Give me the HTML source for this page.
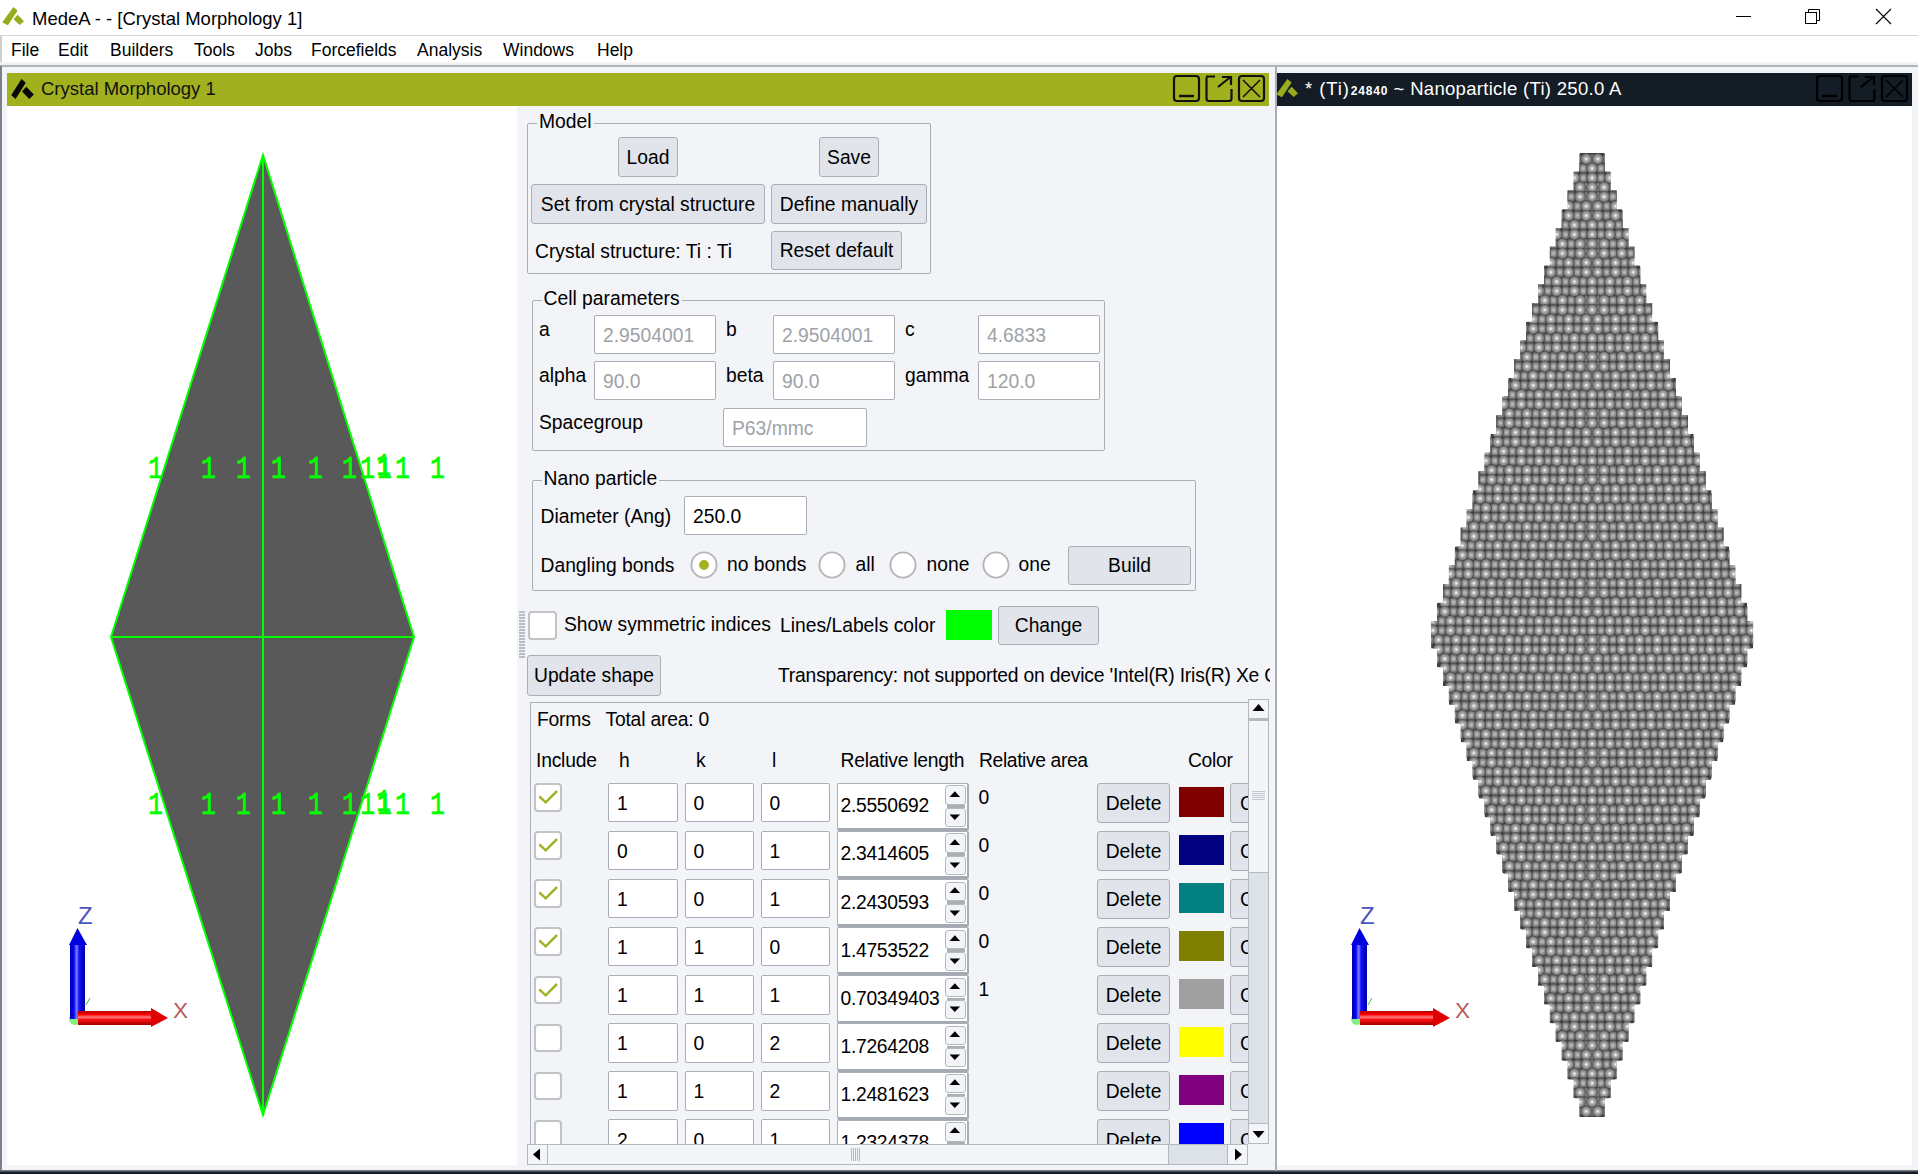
<!DOCTYPE html>
<html><head><meta charset="utf-8"><title>MedeA</title>
<style>
*{box-sizing:border-box;margin:0;padding:0}
html,body{width:1918px;height:1174px;overflow:hidden;background:#fff;font-family:"Liberation Sans", sans-serif;color:#000}
.ab{position:absolute}
.t{position:absolute;white-space:nowrap;line-height:1}
.btn{position:absolute;background:#e1e4ea;border:1px solid #a9aeb6;border-radius:3px}
.ent{position:absolute;background:#fff;border:1px solid #a9aeb6;border-radius:2px}
.fs{position:absolute;border:1px solid #a9aeb6;border-radius:2px}
.lbl{position:absolute;white-space:nowrap;line-height:1;font-size:19px}
</style></head><body>

<div class="ab" style="left:0;top:0;width:1918px;height:35px;background:#fff"></div>
<svg class="ab" style="left:0;top:0" width="30" height="30"><polygon points="3.3,22.1 7.7,24.4 16.8,10.7 13.5,8" fill="#98ac1e" stroke="#98ac1e" stroke-width="1.3"/><polygon points="14.4,19.3 17.7,15.6 23,21.3 19.7,24.2" fill="#98ac1e" stroke="#98ac1e" stroke-width="1.3"/></svg>
<div class="t" style="left:32px;top:10px;font-size:18.5px">MedeA - - [Crystal Morphology 1]</div>
<div class="ab" style="left:1736px;top:16px;width:15px;height:1px;background:#000"></div>
<svg class="ab" style="left:1800px;top:4px" width="24" height="24" viewBox="0 0 24 24"><rect x="5.5" y="8.5" width="11" height="11" fill="none" stroke="#000" stroke-width="1"/><path d="M8.5 8.5 V5.5 H19.5 V16.5 H16.5" fill="none" stroke="#000" stroke-width="1"/></svg>
<svg class="ab" style="left:1870px;top:4px" width="26" height="26" viewBox="0 0 26 26"><path d="M6 5 L21 20 M21 5 L6 20" stroke="#000" stroke-width="1.1"/></svg>
<div class="ab" style="left:0;top:35px;width:1918px;height:1px;background:#d4d4d4"></div>
<div class="t" style="left:11px;top:41.7px;font-size:17.5px">File</div>
<div class="t" style="left:58px;top:41.7px;font-size:17.5px">Edit</div>
<div class="t" style="left:110px;top:41.7px;font-size:17.5px">Builders</div>
<div class="t" style="left:194px;top:41.7px;font-size:17.5px">Tools</div>
<div class="t" style="left:255px;top:41.7px;font-size:17.5px">Jobs</div>
<div class="t" style="left:311px;top:41.7px;font-size:17.5px">Forcefields</div>
<div class="t" style="left:417px;top:41.7px;font-size:17.5px">Analysis</div>
<div class="t" style="left:503px;top:41.7px;font-size:17.5px">Windows</div>
<div class="t" style="left:597px;top:41.7px;font-size:17.5px">Help</div>
<div class="ab" style="left:0;top:36px;width:2px;height:30px;background:#cfcfcf"></div>
<div class="ab" style="left:0;top:61.5px;width:1918px;height:3.5px;background:linear-gradient(#f8f8f8,#ececee)"></div>
<div class="ab" style="left:0;top:65px;width:1918px;height:2px;background:#afb3ba"></div>
<div class="ab" style="left:0;top:67px;width:1918px;height:1107px;background:#f2f4f8"></div>
<div class="ab" style="left:0;top:66px;width:2px;height:1105px;background:#7c8189"></div>
<div class="ab" style="left:0;top:1170.3px;width:1918px;height:3.7px;background:linear-gradient(#8a9098,#141b23 65%)"></div>
<div class="ab" style="left:7px;top:73px;width:1262px;height:33px;background:#a1b01f"></div>
<svg class="ab" style="left:0;top:70px" width="40" height="35" viewBox="0 70 40 35"><polygon points="12.1,95 15.4,98 25,82.8 21.6,79.9" fill="#060606" stroke="#060606" stroke-width="1.2"/><polygon points="22.9,91.4 26.3,87.6 33,94.5 29.3,98.1" fill="#060606" stroke="#060606" stroke-width="1.2"/></svg>
<div class="t" style="left:41px;top:80px;font-size:18.5px;color:#111">Crystal Morphology 1</div>
<svg class="ab" style="left:1172px;top:74px" width="96" height="30" viewBox="0 0 96 30"><rect x="2" y="2" width="25" height="25" rx="3" fill="none" stroke="#111" stroke-width="2.2"/><path d="M7 22 H22" stroke="#111" stroke-width="2.5"/><path d="M43 2.5 H34 Q34.5 2.5 34.5 5 V24.5 Q34.5 27 37 27 H57 Q59.5 27 59.5 24.5 V15" fill="none" stroke="#111" stroke-width="2.2"/><path d="M46 13 L58.5 3 M50 3 H59 V11" fill="none" stroke="#111" stroke-width="2.2"/><rect x="67" y="2" width="25" height="25" rx="3" fill="none" stroke="#111" stroke-width="2.2"/><path d="M71 6 L88 23 M88 6 L71 23" stroke="#111" stroke-width="1.6"/></svg>
<div class="ab" style="left:7px;top:106px;width:510px;height:1059px;background:#fff"></div>
<svg class="ab" style="left:7px;top:105px" width="510" height="1059" viewBox="7 105 510 1059">
<text x="148" y="478" font-family="Liberation Mono" font-size="32" fill="#00ff00" stroke="#00ff00" stroke-width="0.7" transform="translate(148 0) scale(0.78 1) translate(-148 0)">1</text>
<text x="148" y="814" font-family="Liberation Mono" font-size="32" fill="#00ff00" stroke="#00ff00" stroke-width="0.7" transform="translate(148 0) scale(0.78 1) translate(-148 0)">1</text>
<polygon points="263,155 414,637 263,1115 111,637" fill="#595959" stroke="#00ff00" stroke-width="2"/>
<path d="M263 155 V1115 M111 637 H414" stroke="#00ff00" stroke-width="2"/>
<text x="201" y="478" font-family="Liberation Mono" font-size="32" fill="#00ff00" stroke="#00ff00" stroke-width="0.7" transform="translate(201 0) scale(0.78 1) translate(-201 0)">1</text><text x="236" y="478" font-family="Liberation Mono" font-size="32" fill="#00ff00" stroke="#00ff00" stroke-width="0.7" transform="translate(236 0) scale(0.78 1) translate(-236 0)">1</text><text x="271" y="478" font-family="Liberation Mono" font-size="32" fill="#00ff00" stroke="#00ff00" stroke-width="0.7" transform="translate(271 0) scale(0.78 1) translate(-271 0)">1</text><text x="308" y="478" font-family="Liberation Mono" font-size="32" fill="#00ff00" stroke="#00ff00" stroke-width="0.7" transform="translate(308 0) scale(0.78 1) translate(-308 0)">1</text><text x="342" y="478" font-family="Liberation Mono" font-size="32" fill="#00ff00" stroke="#00ff00" stroke-width="0.7" transform="translate(342 0) scale(0.78 1) translate(-342 0)">1</text><text x="360" y="478" font-family="Liberation Mono" font-size="32" fill="#00ff00" stroke="#00ff00" stroke-width="0.7" transform="translate(360 0) scale(0.78 1) translate(-360 0)">1</text><text x="377" y="478" font-family="Liberation Mono" font-size="32" fill="#00ff00" stroke="#00ff00" stroke-width="0.7" transform="translate(377 0) scale(0.78 1) translate(-377 0)">1</text><text x="395" y="478" font-family="Liberation Mono" font-size="32" fill="#00ff00" stroke="#00ff00" stroke-width="0.7" transform="translate(395 0) scale(0.78 1) translate(-395 0)">1</text><text x="430" y="478" font-family="Liberation Mono" font-size="32" fill="#00ff00" stroke="#00ff00" stroke-width="0.7" transform="translate(430 0) scale(0.78 1) translate(-430 0)">1</text>
<text x="201" y="814" font-family="Liberation Mono" font-size="32" fill="#00ff00" stroke="#00ff00" stroke-width="0.7" transform="translate(201 0) scale(0.78 1) translate(-201 0)">1</text><text x="236" y="814" font-family="Liberation Mono" font-size="32" fill="#00ff00" stroke="#00ff00" stroke-width="0.7" transform="translate(236 0) scale(0.78 1) translate(-236 0)">1</text><text x="271" y="814" font-family="Liberation Mono" font-size="32" fill="#00ff00" stroke="#00ff00" stroke-width="0.7" transform="translate(271 0) scale(0.78 1) translate(-271 0)">1</text><text x="308" y="814" font-family="Liberation Mono" font-size="32" fill="#00ff00" stroke="#00ff00" stroke-width="0.7" transform="translate(308 0) scale(0.78 1) translate(-308 0)">1</text><text x="342" y="814" font-family="Liberation Mono" font-size="32" fill="#00ff00" stroke="#00ff00" stroke-width="0.7" transform="translate(342 0) scale(0.78 1) translate(-342 0)">1</text><text x="360" y="814" font-family="Liberation Mono" font-size="32" fill="#00ff00" stroke="#00ff00" stroke-width="0.7" transform="translate(360 0) scale(0.78 1) translate(-360 0)">1</text><text x="377" y="814" font-family="Liberation Mono" font-size="32" fill="#00ff00" stroke="#00ff00" stroke-width="0.7" transform="translate(377 0) scale(0.78 1) translate(-377 0)">1</text><text x="395" y="814" font-family="Liberation Mono" font-size="32" fill="#00ff00" stroke="#00ff00" stroke-width="0.7" transform="translate(395 0) scale(0.78 1) translate(-395 0)">1</text><text x="430" y="814" font-family="Liberation Mono" font-size="32" fill="#00ff00" stroke="#00ff00" stroke-width="0.7" transform="translate(430 0) scale(0.78 1) translate(-430 0)">1</text>
<text x="376" y="475" font-family="Liberation Mono" font-size="32" fill="#00ff00" stroke="#00ff00" stroke-width="0.7" transform="translate(376 0) scale(0.78 1) translate(-376 0)">1</text>
<text x="376" y="811" font-family="Liberation Mono" font-size="32" fill="#00ff00" stroke="#00ff00" stroke-width="0.7" transform="translate(376 0) scale(0.78 1) translate(-376 0)">1</text>
</svg>
<svg class="ab" style="left:40px;top:895px" width="160" height="140" viewBox="40 895 160 140"><defs><linearGradient id="gb0" x1="0" x2="1"><stop offset="0" stop-color="#0000b0"/><stop offset="0.25" stop-color="#0000ff"/><stop offset="0.45" stop-color="#8080ff"/><stop offset="0.6" stop-color="#1010ff"/><stop offset="1" stop-color="#0000a0"/></linearGradient><linearGradient id="gr0" x1="0" x2="0" y1="0" y2="1"><stop offset="0" stop-color="#b00000"/><stop offset="0.25" stop-color="#ff0000"/><stop offset="0.45" stop-color="#ff8080"/><stop offset="0.6" stop-color="#ff1010"/><stop offset="1" stop-color="#a00000"/></linearGradient></defs><circle cx="75" cy="1019" r="6" fill="#80f080"/><path d="M86 1005 L90 998" stroke="#40c040" stroke-width="1"/><rect x="70" y="944" width="15" height="75" fill="url(#gb0)"/><polygon points="77.5,928 69,945 87,945" fill="#0000e0"/><rect x="78" y="1011" width="74" height="14" fill="url(#gr0)"/><polygon points="151,1008 168,1018 151,1027" fill="#e00000"/><text x="78" y="924" font-family="Liberation Sans" font-size="24" fill="#4a55c0">Z</text><text x="173" y="1018" font-family="Liberation Sans" font-size="22.5" fill="#b85a5a">X</text></svg>
<div class="ab" style="left:517px;top:106px;width:758px;height:1058px;background:#f2f4f8"></div>
<div class="ab" style="left:1275px;top:66px;width:2px;height:1105px;background:#a9aeb6"></div>
<div class="fs" style="left:527px;top:123px;width:404px;height:151px"></div>
<div class="t" style="left:537px;top:112.2px;font-size:19.3px;background:#f2f4f8;padding:0 2px 0 2px">Model</div>
<div class="btn" style="left:618px;top:137px;width:60px;height:40px"></div>
<div class="t" style="left:618px;width:60px;text-align:center;top:147.7px;font-size:19.3px">Load</div>
<div class="btn" style="left:819px;top:137px;width:60px;height:40px"></div>
<div class="t" style="left:819px;width:60px;text-align:center;top:147.7px;font-size:19.3px">Save</div>
<div class="btn" style="left:531px;top:184px;width:234px;height:40px"></div>
<div class="t" style="left:531px;width:234px;text-align:center;top:194.7px;font-size:19.3px">Set from crystal structure</div>
<div class="btn" style="left:771px;top:184px;width:156px;height:40px"></div>
<div class="t" style="left:771px;width:156px;text-align:center;top:194.7px;font-size:19.3px">Define manually</div>
<div class="t" style="left:535px;top:241.7px;font-size:19.3px;color:#000;">Crystal structure: Ti : Ti</div>
<div class="btn" style="left:771px;top:231px;width:131px;height:39px"></div>
<div class="t" style="left:771px;width:131px;text-align:center;top:241.2px;font-size:19.3px">Reset default</div>
<div class="fs" style="left:532px;top:300px;width:573px;height:151px"></div>
<div class="t" style="left:541.5px;top:289.2px;font-size:19.3px;background:#f2f4f8;padding:0 2px 0 2px">Cell parameters</div>
<div class="t" style="left:539px;top:319.7px;font-size:19.3px;color:#000;">a</div>
<div class="t" style="left:726px;top:319.7px;font-size:19.3px;color:#000;">b</div>
<div class="t" style="left:905px;top:319.7px;font-size:19.3px;color:#000;">c</div>
<div class="ent" style="left:594px;top:315px;width:122px;height:39px"></div>
<div class="t" style="left:603px;top:326.2px;font-size:19.3px;color:#9ea2a8;">2.9504001</div>
<div class="ent" style="left:773px;top:315px;width:122px;height:39px"></div>
<div class="t" style="left:782px;top:326.2px;font-size:19.3px;color:#9ea2a8;">2.9504001</div>
<div class="ent" style="left:978px;top:315px;width:122px;height:39px"></div>
<div class="t" style="left:987px;top:326.2px;font-size:19.3px;color:#9ea2a8;">4.6833</div>
<div class="t" style="left:539px;top:365.7px;font-size:19.3px;color:#000;">alpha</div>
<div class="t" style="left:726px;top:365.7px;font-size:19.3px;color:#000;">beta</div>
<div class="t" style="left:905px;top:365.7px;font-size:19.3px;color:#000;">gamma</div>
<div class="ent" style="left:594px;top:361px;width:122px;height:39px"></div>
<div class="t" style="left:603px;top:372.2px;font-size:19.3px;color:#9ea2a8;">90.0</div>
<div class="ent" style="left:773px;top:361px;width:122px;height:39px"></div>
<div class="t" style="left:782px;top:372.2px;font-size:19.3px;color:#9ea2a8;">90.0</div>
<div class="ent" style="left:978px;top:361px;width:122px;height:39px"></div>
<div class="t" style="left:987px;top:372.2px;font-size:19.3px;color:#9ea2a8;">120.0</div>
<div class="t" style="left:539px;top:412.7px;font-size:19.3px;color:#000;">Spacegroup</div>
<div class="ent" style="left:723px;top:408px;width:144px;height:39px"></div>
<div class="t" style="left:732px;top:419.2px;font-size:19.3px;color:#9ea2a8;">P63/mmc</div>
<div class="fs" style="left:532px;top:480px;width:664px;height:111px"></div>
<div class="t" style="left:541.5px;top:469.2px;font-size:19.3px;background:#f2f4f8;padding:0 2px 0 2px">Nano particle</div>
<div class="t" style="left:540.5px;top:506.7px;font-size:19.3px;color:#000;">Diameter (Ang)</div>
<div class="ent" style="left:684px;top:496px;width:123px;height:39px"></div>
<div class="t" style="left:693px;top:507.2px;font-size:19.3px;color:#000;">250.0</div>
<div class="t" style="left:540.5px;top:555.7px;font-size:19.3px;color:#000;">Dangling bonds</div>
<svg class="ab" style="left:689.5px;top:550.5px" width="28" height="28" viewBox="0 0 28 28"><circle cx="14" cy="14" r="12.6" fill="#fff" stroke="#b4b5b8" stroke-width="1.9"/><circle cx="14" cy="14" r="4.9" fill="#a3b022"/></svg>
<div class="t" style="left:727px;top:554.7px;font-size:19.3px;color:#000;">no bonds</div>
<svg class="ab" style="left:818px;top:550.5px" width="28" height="28" viewBox="0 0 28 28"><circle cx="14" cy="14" r="12.6" fill="#fff" stroke="#b4b5b8" stroke-width="1.9"/></svg>
<div class="t" style="left:855.5px;top:554.7px;font-size:19.3px;color:#000;">all</div>
<svg class="ab" style="left:888.5px;top:550.5px" width="28" height="28" viewBox="0 0 28 28"><circle cx="14" cy="14" r="12.6" fill="#fff" stroke="#b4b5b8" stroke-width="1.9"/></svg>
<div class="t" style="left:926.5px;top:554.7px;font-size:19.3px;color:#000;">none</div>
<svg class="ab" style="left:981.5px;top:550.5px" width="28" height="28" viewBox="0 0 28 28"><circle cx="14" cy="14" r="12.6" fill="#fff" stroke="#b4b5b8" stroke-width="1.9"/></svg>
<div class="t" style="left:1018.5px;top:554.7px;font-size:19.3px;color:#000;">one</div>
<div class="btn" style="left:1068px;top:546px;width:123px;height:39px"></div>
<div class="t" style="left:1068px;width:123px;text-align:center;top:556.2px;font-size:19.3px">Build</div>
<div class="ab" style="left:519px;top:611px;width:6px;height:47px;background:repeating-linear-gradient(#b9bdc4 0 2px, #f1f3f7 2px 3px)"></div>
<div class="ab" style="left:528px;top:611px;width:28.5px;height:28.5px;background:#fff;border:2px solid #c2c3c6;border-radius:4px"></div>
<div class="t" style="left:564px;top:614.7px;font-size:19.3px;color:#000;">Show symmetric indices</div>
<div class="t" style="left:780px;top:616.4px;font-size:19.3px;color:#000;">Lines/Labels color</div>
<div class="ab" style="left:946px;top:610px;width:46px;height:30px;background:#00ff00"></div>
<div class="btn" style="left:998px;top:606px;width:101px;height:39px"></div>
<div class="t" style="left:998px;width:101px;text-align:center;top:616.2px;font-size:19.3px">Change</div>
<div class="btn" style="left:527px;top:655px;width:134px;height:41px"></div>
<div class="t" style="left:527px;width:134px;text-align:center;top:666.2px;font-size:19.3px">Update shape</div>
<div class="ab" style="left:700px;top:650px;width:570px;height:50px;overflow:hidden">
<div class="t" style="left:78px;top:15.7px;font-size:19.3px;letter-spacing:-0.2px">Transparency: not supported on device 'Intel(R) Iris(R) Xe Graphics'</div>
</div>
<div class="ab" style="left:529.5px;top:702px;width:1.7px;height:442px;background:#aab0ba"></div>
<div class="ab" style="left:530px;top:702px;width:718px;height:1px;background:#a9aeb6"></div>
<div class="ab" style="left:530px;top:702px;width:718px;height:442px;overflow:hidden">
<div class="t" style="left:7.0px;top:8.2px;font-size:19.3px;color:#000;letter-spacing:-0.2px">Forms</div>
<div class="t" style="left:75.5px;top:8.2px;font-size:19.3px;color:#000;letter-spacing:-0.2px">Total area: 0</div>
<div class="t" style="left:6.0px;top:48.5px;font-size:19.3px;color:#000;letter-spacing:-0.2px">Include</div>
<div class="t" style="left:89.0px;top:48.5px;font-size:19.3px;color:#000;letter-spacing:0px">h</div>
<div class="t" style="left:166.0px;top:48.5px;font-size:19.3px;color:#000;letter-spacing:0px">k</div>
<div class="t" style="left:242.0px;top:48.5px;font-size:19.3px;color:#000;letter-spacing:0px">l</div>
<div class="t" style="left:310.5px;top:48.5px;font-size:19.3px;color:#000;letter-spacing:-0.25px">Relative length</div>
<div class="t" style="left:449.0px;top:48.5px;font-size:19.3px;color:#000;letter-spacing:-0.38px">Relative area</div>
<div class="t" style="left:658.0px;top:48.5px;font-size:19.3px;color:#000;letter-spacing:-0.3px">Color</div>
<div class="ab" style="left:3.5px;top:81.1px;width:28.5px;height:28.5px;background:#fff;border:2px solid #c2c3c6;border-radius:4px"></div>
<svg class="ab" style="left:3.5px;top:81.1px" width="28" height="28" viewBox="0 0 28 28"><path d="M5.3 13.3 L11.7 19.3 L23 8" fill="none" stroke="#a2b126" stroke-width="2.5"/></svg>
<div class="ab" style="left:78.0px;top:80.6px;width:69.5px;height:39.5px;background:#fff;border:1px solid #a9aeb6;border-radius:2px"></div>
<div class="t" style="left:87.0px;top:91.8px;font-size:19.3px;color:#000;letter-spacing:0px">1</div>
<div class="ab" style="left:154.5px;top:80.6px;width:69.5px;height:39.5px;background:#fff;border:1px solid #a9aeb6;border-radius:2px"></div>
<div class="t" style="left:163.5px;top:91.8px;font-size:19.3px;color:#000;letter-spacing:0px">0</div>
<div class="ab" style="left:230.5px;top:80.6px;width:69.5px;height:39.5px;background:#fff;border:1px solid #a9aeb6;border-radius:2px"></div>
<div class="t" style="left:239.5px;top:91.8px;font-size:19.3px;color:#000;letter-spacing:0px">0</div>
<div class="ab" style="left:307.0px;top:80.9px;width:132.0px;height:48.3px;background:#fff;border:1px solid #a9aeb6;border-right:2px solid #a9aeb6;border-bottom:3px solid #a4a9b2;border-radius:2px"></div>
<div class="t" style="left:310.5px;top:94.3px;font-size:19.3px;color:#000;letter-spacing:-0.3px">2.5550692</div>
<div class="ab" style="left:415.3px;top:83.3px;width:20.5px;height:19.6px;background:#f2f4f8;border:1.6px solid #b4b9c0;border-radius:3px"></div>
<div class="ab" style="left:415.3px;top:105.6px;width:20.5px;height:19.0px;background:#f2f4f8;border:1.6px solid #b4b9c0;border-radius:3px"></div>
<div class="ab" style="left:416.5px;top:103.1px;width:18.0px;height:2.6px;background:#abb0b8"></div>
<svg class="ab" style="left:415.0px;top:80.6px" width="21" height="47" viewBox="0 0 21 47"><polygon points="9.8,8.3 4.5,14 15.1,14" fill="#000"/><polygon points="4.5,31.4 15.1,31.4 9.8,37" fill="#000"/></svg>
<div class="t" style="left:448.5px;top:85.8px;font-size:19.3px;color:#000;letter-spacing:0px">0</div>
<div class="ab" style="left:567.0px;top:80.6px;width:73.0px;height:40.0px;background:#e1e4ea;border:1px solid #a9aeb6;border-radius:3px"></div>
<div class="t" style="left:567.0px;width:73.0px;text-align:center;top:91.8px;font-size:19.3px">Delete</div>
<div class="ab" style="left:649.0px;top:84.6px;width:45.0px;height:30.0px;background:#800000"></div>
<div class="ab" style="left:700.0px;top:80.6px;width:60.0px;height:40.0px;background:#e1e4ea;border:1px solid #a9aeb6;border-radius:3px"></div>
<div class="t" style="left:710.0px;top:91.8px;font-size:19.3px;color:#000;letter-spacing:0px">Change</div>
<div class="ab" style="left:3.5px;top:129.2px;width:28.5px;height:28.5px;background:#fff;border:2px solid #c2c3c6;border-radius:4px"></div>
<svg class="ab" style="left:3.5px;top:129.2px" width="28" height="28" viewBox="0 0 28 28"><path d="M5.3 13.3 L11.7 19.3 L23 8" fill="none" stroke="#a2b126" stroke-width="2.5"/></svg>
<div class="ab" style="left:78.0px;top:128.7px;width:69.5px;height:39.5px;background:#fff;border:1px solid #a9aeb6;border-radius:2px"></div>
<div class="t" style="left:87.0px;top:139.9px;font-size:19.3px;color:#000;letter-spacing:0px">0</div>
<div class="ab" style="left:154.5px;top:128.7px;width:69.5px;height:39.5px;background:#fff;border:1px solid #a9aeb6;border-radius:2px"></div>
<div class="t" style="left:163.5px;top:139.9px;font-size:19.3px;color:#000;letter-spacing:0px">0</div>
<div class="ab" style="left:230.5px;top:128.7px;width:69.5px;height:39.5px;background:#fff;border:1px solid #a9aeb6;border-radius:2px"></div>
<div class="t" style="left:239.5px;top:139.9px;font-size:19.3px;color:#000;letter-spacing:0px">1</div>
<div class="ab" style="left:307.0px;top:129.0px;width:132.0px;height:48.3px;background:#fff;border:1px solid #a9aeb6;border-right:2px solid #a9aeb6;border-bottom:3px solid #a4a9b2;border-radius:2px"></div>
<div class="t" style="left:310.5px;top:142.4px;font-size:19.3px;color:#000;letter-spacing:-0.3px">2.3414605</div>
<div class="ab" style="left:415.3px;top:131.4px;width:20.5px;height:19.6px;background:#f2f4f8;border:1.6px solid #b4b9c0;border-radius:3px"></div>
<div class="ab" style="left:415.3px;top:153.7px;width:20.5px;height:19.0px;background:#f2f4f8;border:1.6px solid #b4b9c0;border-radius:3px"></div>
<div class="ab" style="left:416.5px;top:151.2px;width:18.0px;height:2.6px;background:#abb0b8"></div>
<svg class="ab" style="left:415.0px;top:128.7px" width="21" height="47" viewBox="0 0 21 47"><polygon points="9.8,8.3 4.5,14 15.1,14" fill="#000"/><polygon points="4.5,31.4 15.1,31.4 9.8,37" fill="#000"/></svg>
<div class="t" style="left:448.5px;top:133.9px;font-size:19.3px;color:#000;letter-spacing:0px">0</div>
<div class="ab" style="left:567.0px;top:128.7px;width:73.0px;height:40.0px;background:#e1e4ea;border:1px solid #a9aeb6;border-radius:3px"></div>
<div class="t" style="left:567.0px;width:73.0px;text-align:center;top:139.9px;font-size:19.3px">Delete</div>
<div class="ab" style="left:649.0px;top:132.7px;width:45.0px;height:30.0px;background:#000080"></div>
<div class="ab" style="left:700.0px;top:128.7px;width:60.0px;height:40.0px;background:#e1e4ea;border:1px solid #a9aeb6;border-radius:3px"></div>
<div class="t" style="left:710.0px;top:139.9px;font-size:19.3px;color:#000;letter-spacing:0px">Change</div>
<div class="ab" style="left:3.5px;top:177.3px;width:28.5px;height:28.5px;background:#fff;border:2px solid #c2c3c6;border-radius:4px"></div>
<svg class="ab" style="left:3.5px;top:177.3px" width="28" height="28" viewBox="0 0 28 28"><path d="M5.3 13.3 L11.7 19.3 L23 8" fill="none" stroke="#a2b126" stroke-width="2.5"/></svg>
<div class="ab" style="left:78.0px;top:176.8px;width:69.5px;height:39.5px;background:#fff;border:1px solid #a9aeb6;border-radius:2px"></div>
<div class="t" style="left:87.0px;top:188.0px;font-size:19.3px;color:#000;letter-spacing:0px">1</div>
<div class="ab" style="left:154.5px;top:176.8px;width:69.5px;height:39.5px;background:#fff;border:1px solid #a9aeb6;border-radius:2px"></div>
<div class="t" style="left:163.5px;top:188.0px;font-size:19.3px;color:#000;letter-spacing:0px">0</div>
<div class="ab" style="left:230.5px;top:176.8px;width:69.5px;height:39.5px;background:#fff;border:1px solid #a9aeb6;border-radius:2px"></div>
<div class="t" style="left:239.5px;top:188.0px;font-size:19.3px;color:#000;letter-spacing:0px">1</div>
<div class="ab" style="left:307.0px;top:177.1px;width:132.0px;height:48.3px;background:#fff;border:1px solid #a9aeb6;border-right:2px solid #a9aeb6;border-bottom:3px solid #a4a9b2;border-radius:2px"></div>
<div class="t" style="left:310.5px;top:190.5px;font-size:19.3px;color:#000;letter-spacing:-0.3px">2.2430593</div>
<div class="ab" style="left:415.3px;top:179.5px;width:20.5px;height:19.6px;background:#f2f4f8;border:1.6px solid #b4b9c0;border-radius:3px"></div>
<div class="ab" style="left:415.3px;top:201.8px;width:20.5px;height:19.0px;background:#f2f4f8;border:1.6px solid #b4b9c0;border-radius:3px"></div>
<div class="ab" style="left:416.5px;top:199.3px;width:18.0px;height:2.6px;background:#abb0b8"></div>
<svg class="ab" style="left:415.0px;top:176.8px" width="21" height="47" viewBox="0 0 21 47"><polygon points="9.8,8.3 4.5,14 15.1,14" fill="#000"/><polygon points="4.5,31.4 15.1,31.4 9.8,37" fill="#000"/></svg>
<div class="t" style="left:448.5px;top:182.0px;font-size:19.3px;color:#000;letter-spacing:0px">0</div>
<div class="ab" style="left:567.0px;top:176.8px;width:73.0px;height:40.0px;background:#e1e4ea;border:1px solid #a9aeb6;border-radius:3px"></div>
<div class="t" style="left:567.0px;width:73.0px;text-align:center;top:188.0px;font-size:19.3px">Delete</div>
<div class="ab" style="left:649.0px;top:180.8px;width:45.0px;height:30.0px;background:#008080"></div>
<div class="ab" style="left:700.0px;top:176.8px;width:60.0px;height:40.0px;background:#e1e4ea;border:1px solid #a9aeb6;border-radius:3px"></div>
<div class="t" style="left:710.0px;top:188.0px;font-size:19.3px;color:#000;letter-spacing:0px">Change</div>
<div class="ab" style="left:3.5px;top:225.4px;width:28.5px;height:28.5px;background:#fff;border:2px solid #c2c3c6;border-radius:4px"></div>
<svg class="ab" style="left:3.5px;top:225.4px" width="28" height="28" viewBox="0 0 28 28"><path d="M5.3 13.3 L11.7 19.3 L23 8" fill="none" stroke="#a2b126" stroke-width="2.5"/></svg>
<div class="ab" style="left:78.0px;top:224.9px;width:69.5px;height:39.5px;background:#fff;border:1px solid #a9aeb6;border-radius:2px"></div>
<div class="t" style="left:87.0px;top:236.1px;font-size:19.3px;color:#000;letter-spacing:0px">1</div>
<div class="ab" style="left:154.5px;top:224.9px;width:69.5px;height:39.5px;background:#fff;border:1px solid #a9aeb6;border-radius:2px"></div>
<div class="t" style="left:163.5px;top:236.1px;font-size:19.3px;color:#000;letter-spacing:0px">1</div>
<div class="ab" style="left:230.5px;top:224.9px;width:69.5px;height:39.5px;background:#fff;border:1px solid #a9aeb6;border-radius:2px"></div>
<div class="t" style="left:239.5px;top:236.1px;font-size:19.3px;color:#000;letter-spacing:0px">0</div>
<div class="ab" style="left:307.0px;top:225.2px;width:132.0px;height:48.3px;background:#fff;border:1px solid #a9aeb6;border-right:2px solid #a9aeb6;border-bottom:3px solid #a4a9b2;border-radius:2px"></div>
<div class="t" style="left:310.5px;top:238.6px;font-size:19.3px;color:#000;letter-spacing:-0.3px">1.4753522</div>
<div class="ab" style="left:415.3px;top:227.6px;width:20.5px;height:19.6px;background:#f2f4f8;border:1.6px solid #b4b9c0;border-radius:3px"></div>
<div class="ab" style="left:415.3px;top:249.9px;width:20.5px;height:19.0px;background:#f2f4f8;border:1.6px solid #b4b9c0;border-radius:3px"></div>
<div class="ab" style="left:416.5px;top:247.4px;width:18.0px;height:2.6px;background:#abb0b8"></div>
<svg class="ab" style="left:415.0px;top:224.9px" width="21" height="47" viewBox="0 0 21 47"><polygon points="9.8,8.3 4.5,14 15.1,14" fill="#000"/><polygon points="4.5,31.4 15.1,31.4 9.8,37" fill="#000"/></svg>
<div class="t" style="left:448.5px;top:230.1px;font-size:19.3px;color:#000;letter-spacing:0px">0</div>
<div class="ab" style="left:567.0px;top:224.9px;width:73.0px;height:40.0px;background:#e1e4ea;border:1px solid #a9aeb6;border-radius:3px"></div>
<div class="t" style="left:567.0px;width:73.0px;text-align:center;top:236.1px;font-size:19.3px">Delete</div>
<div class="ab" style="left:649.0px;top:228.9px;width:45.0px;height:30.0px;background:#808000"></div>
<div class="ab" style="left:700.0px;top:224.9px;width:60.0px;height:40.0px;background:#e1e4ea;border:1px solid #a9aeb6;border-radius:3px"></div>
<div class="t" style="left:710.0px;top:236.1px;font-size:19.3px;color:#000;letter-spacing:0px">Change</div>
<div class="ab" style="left:3.5px;top:273.5px;width:28.5px;height:28.5px;background:#fff;border:2px solid #c2c3c6;border-radius:4px"></div>
<svg class="ab" style="left:3.5px;top:273.5px" width="28" height="28" viewBox="0 0 28 28"><path d="M5.3 13.3 L11.7 19.3 L23 8" fill="none" stroke="#a2b126" stroke-width="2.5"/></svg>
<div class="ab" style="left:78.0px;top:273.0px;width:69.5px;height:39.5px;background:#fff;border:1px solid #a9aeb6;border-radius:2px"></div>
<div class="t" style="left:87.0px;top:284.2px;font-size:19.3px;color:#000;letter-spacing:0px">1</div>
<div class="ab" style="left:154.5px;top:273.0px;width:69.5px;height:39.5px;background:#fff;border:1px solid #a9aeb6;border-radius:2px"></div>
<div class="t" style="left:163.5px;top:284.2px;font-size:19.3px;color:#000;letter-spacing:0px">1</div>
<div class="ab" style="left:230.5px;top:273.0px;width:69.5px;height:39.5px;background:#fff;border:1px solid #a9aeb6;border-radius:2px"></div>
<div class="t" style="left:239.5px;top:284.2px;font-size:19.3px;color:#000;letter-spacing:0px">1</div>
<div class="ab" style="left:307.0px;top:273.3px;width:132.0px;height:48.3px;background:#fff;border:1px solid #a9aeb6;border-right:2px solid #a9aeb6;border-bottom:3px solid #a4a9b2;border-radius:2px"></div>
<div class="t" style="left:310.5px;top:286.7px;font-size:19.3px;color:#000;letter-spacing:-0.3px">0.70349403</div>
<div class="ab" style="left:415.3px;top:275.7px;width:20.5px;height:19.6px;background:#f2f4f8;border:1.6px solid #b4b9c0;border-radius:3px"></div>
<div class="ab" style="left:415.3px;top:298.0px;width:20.5px;height:19.0px;background:#f2f4f8;border:1.6px solid #b4b9c0;border-radius:3px"></div>
<div class="ab" style="left:416.5px;top:295.5px;width:18.0px;height:2.6px;background:#abb0b8"></div>
<svg class="ab" style="left:415.0px;top:273.0px" width="21" height="47" viewBox="0 0 21 47"><polygon points="9.8,8.3 4.5,14 15.1,14" fill="#000"/><polygon points="4.5,31.4 15.1,31.4 9.8,37" fill="#000"/></svg>
<div class="t" style="left:448.5px;top:278.2px;font-size:19.3px;color:#000;letter-spacing:0px">1</div>
<div class="ab" style="left:567.0px;top:273.0px;width:73.0px;height:40.0px;background:#e1e4ea;border:1px solid #a9aeb6;border-radius:3px"></div>
<div class="t" style="left:567.0px;width:73.0px;text-align:center;top:284.2px;font-size:19.3px">Delete</div>
<div class="ab" style="left:649.0px;top:277.0px;width:45.0px;height:30.0px;background:#a0a0a0"></div>
<div class="ab" style="left:700.0px;top:273.0px;width:60.0px;height:40.0px;background:#e1e4ea;border:1px solid #a9aeb6;border-radius:3px"></div>
<div class="t" style="left:710.0px;top:284.2px;font-size:19.3px;color:#000;letter-spacing:0px">Change</div>
<div class="ab" style="left:3.5px;top:321.6px;width:28.5px;height:28.5px;background:#fff;border:2px solid #c2c3c6;border-radius:4px"></div>
<div class="ab" style="left:78.0px;top:321.1px;width:69.5px;height:39.5px;background:#fff;border:1px solid #a9aeb6;border-radius:2px"></div>
<div class="t" style="left:87.0px;top:332.3px;font-size:19.3px;color:#000;letter-spacing:0px">1</div>
<div class="ab" style="left:154.5px;top:321.1px;width:69.5px;height:39.5px;background:#fff;border:1px solid #a9aeb6;border-radius:2px"></div>
<div class="t" style="left:163.5px;top:332.3px;font-size:19.3px;color:#000;letter-spacing:0px">0</div>
<div class="ab" style="left:230.5px;top:321.1px;width:69.5px;height:39.5px;background:#fff;border:1px solid #a9aeb6;border-radius:2px"></div>
<div class="t" style="left:239.5px;top:332.3px;font-size:19.3px;color:#000;letter-spacing:0px">2</div>
<div class="ab" style="left:307.0px;top:321.4px;width:132.0px;height:48.3px;background:#fff;border:1px solid #a9aeb6;border-right:2px solid #a9aeb6;border-bottom:3px solid #a4a9b2;border-radius:2px"></div>
<div class="t" style="left:310.5px;top:334.8px;font-size:19.3px;color:#000;letter-spacing:-0.3px">1.7264208</div>
<div class="ab" style="left:415.3px;top:323.8px;width:20.5px;height:19.6px;background:#f2f4f8;border:1.6px solid #b4b9c0;border-radius:3px"></div>
<div class="ab" style="left:415.3px;top:346.1px;width:20.5px;height:19.0px;background:#f2f4f8;border:1.6px solid #b4b9c0;border-radius:3px"></div>
<div class="ab" style="left:416.5px;top:343.6px;width:18.0px;height:2.6px;background:#abb0b8"></div>
<svg class="ab" style="left:415.0px;top:321.1px" width="21" height="47" viewBox="0 0 21 47"><polygon points="9.8,8.3 4.5,14 15.1,14" fill="#000"/><polygon points="4.5,31.4 15.1,31.4 9.8,37" fill="#000"/></svg>
<div class="ab" style="left:567.0px;top:321.1px;width:73.0px;height:40.0px;background:#e1e4ea;border:1px solid #a9aeb6;border-radius:3px"></div>
<div class="t" style="left:567.0px;width:73.0px;text-align:center;top:332.3px;font-size:19.3px">Delete</div>
<div class="ab" style="left:649.0px;top:325.1px;width:45.0px;height:30.0px;background:#ffff00"></div>
<div class="ab" style="left:700.0px;top:321.1px;width:60.0px;height:40.0px;background:#e1e4ea;border:1px solid #a9aeb6;border-radius:3px"></div>
<div class="t" style="left:710.0px;top:332.3px;font-size:19.3px;color:#000;letter-spacing:0px">Change</div>
<div class="ab" style="left:3.5px;top:369.7px;width:28.5px;height:28.5px;background:#fff;border:2px solid #c2c3c6;border-radius:4px"></div>
<div class="ab" style="left:78.0px;top:369.2px;width:69.5px;height:39.5px;background:#fff;border:1px solid #a9aeb6;border-radius:2px"></div>
<div class="t" style="left:87.0px;top:380.4px;font-size:19.3px;color:#000;letter-spacing:0px">1</div>
<div class="ab" style="left:154.5px;top:369.2px;width:69.5px;height:39.5px;background:#fff;border:1px solid #a9aeb6;border-radius:2px"></div>
<div class="t" style="left:163.5px;top:380.4px;font-size:19.3px;color:#000;letter-spacing:0px">1</div>
<div class="ab" style="left:230.5px;top:369.2px;width:69.5px;height:39.5px;background:#fff;border:1px solid #a9aeb6;border-radius:2px"></div>
<div class="t" style="left:239.5px;top:380.4px;font-size:19.3px;color:#000;letter-spacing:0px">2</div>
<div class="ab" style="left:307.0px;top:369.5px;width:132.0px;height:48.3px;background:#fff;border:1px solid #a9aeb6;border-right:2px solid #a9aeb6;border-bottom:3px solid #a4a9b2;border-radius:2px"></div>
<div class="t" style="left:310.5px;top:382.9px;font-size:19.3px;color:#000;letter-spacing:-0.3px">1.2481623</div>
<div class="ab" style="left:415.3px;top:371.9px;width:20.5px;height:19.6px;background:#f2f4f8;border:1.6px solid #b4b9c0;border-radius:3px"></div>
<div class="ab" style="left:415.3px;top:394.2px;width:20.5px;height:19.0px;background:#f2f4f8;border:1.6px solid #b4b9c0;border-radius:3px"></div>
<div class="ab" style="left:416.5px;top:391.7px;width:18.0px;height:2.6px;background:#abb0b8"></div>
<svg class="ab" style="left:415.0px;top:369.2px" width="21" height="47" viewBox="0 0 21 47"><polygon points="9.8,8.3 4.5,14 15.1,14" fill="#000"/><polygon points="4.5,31.4 15.1,31.4 9.8,37" fill="#000"/></svg>
<div class="ab" style="left:567.0px;top:369.2px;width:73.0px;height:40.0px;background:#e1e4ea;border:1px solid #a9aeb6;border-radius:3px"></div>
<div class="t" style="left:567.0px;width:73.0px;text-align:center;top:380.4px;font-size:19.3px">Delete</div>
<div class="ab" style="left:649.0px;top:373.2px;width:45.0px;height:30.0px;background:#800080"></div>
<div class="ab" style="left:700.0px;top:369.2px;width:60.0px;height:40.0px;background:#e1e4ea;border:1px solid #a9aeb6;border-radius:3px"></div>
<div class="t" style="left:710.0px;top:380.4px;font-size:19.3px;color:#000;letter-spacing:0px">Change</div>
<div class="ab" style="left:3.5px;top:417.8px;width:28.5px;height:28.5px;background:#fff;border:2px solid #c2c3c6;border-radius:4px"></div>
<div class="ab" style="left:78.0px;top:417.3px;width:69.5px;height:39.5px;background:#fff;border:1px solid #a9aeb6;border-radius:2px"></div>
<div class="t" style="left:87.0px;top:428.5px;font-size:19.3px;color:#000;letter-spacing:0px">2</div>
<div class="ab" style="left:154.5px;top:417.3px;width:69.5px;height:39.5px;background:#fff;border:1px solid #a9aeb6;border-radius:2px"></div>
<div class="t" style="left:163.5px;top:428.5px;font-size:19.3px;color:#000;letter-spacing:0px">0</div>
<div class="ab" style="left:230.5px;top:417.3px;width:69.5px;height:39.5px;background:#fff;border:1px solid #a9aeb6;border-radius:2px"></div>
<div class="t" style="left:239.5px;top:428.5px;font-size:19.3px;color:#000;letter-spacing:0px">1</div>
<div class="ab" style="left:307.0px;top:417.6px;width:132.0px;height:48.3px;background:#fff;border:1px solid #a9aeb6;border-right:2px solid #a9aeb6;border-bottom:3px solid #a4a9b2;border-radius:2px"></div>
<div class="t" style="left:310.5px;top:431.0px;font-size:19.3px;color:#000;letter-spacing:-0.3px">1.2324378</div>
<div class="ab" style="left:415.3px;top:420.0px;width:20.5px;height:19.6px;background:#f2f4f8;border:1.6px solid #b4b9c0;border-radius:3px"></div>
<div class="ab" style="left:415.3px;top:442.3px;width:20.5px;height:19.0px;background:#f2f4f8;border:1.6px solid #b4b9c0;border-radius:3px"></div>
<div class="ab" style="left:416.5px;top:439.8px;width:18.0px;height:2.6px;background:#abb0b8"></div>
<svg class="ab" style="left:415.0px;top:417.3px" width="21" height="47" viewBox="0 0 21 47"><polygon points="9.8,8.3 4.5,14 15.1,14" fill="#000"/><polygon points="4.5,31.4 15.1,31.4 9.8,37" fill="#000"/></svg>
<div class="ab" style="left:567.0px;top:417.3px;width:73.0px;height:40.0px;background:#e1e4ea;border:1px solid #a9aeb6;border-radius:3px"></div>
<div class="t" style="left:567.0px;width:73.0px;text-align:center;top:428.5px;font-size:19.3px">Delete</div>
<div class="ab" style="left:649.0px;top:421.3px;width:45.0px;height:30.0px;background:#0000ff"></div>
<div class="ab" style="left:700.0px;top:417.3px;width:60.0px;height:40.0px;background:#e1e4ea;border:1px solid #a9aeb6;border-radius:3px"></div>
<div class="t" style="left:710.0px;top:428.5px;font-size:19.3px;color:#000;letter-spacing:0px">Change</div>
</div>
<div class="ab" style="left:1248px;top:699px;width:21px;height:445px;background:#dde1e8;border-left:1px solid #b4b9c0;border-right:1px solid #b4b9c0"></div>
<div class="ab" style="left:1248px;top:699px;width:21px;height:20px;background:#f4f5f8;border:1px solid #b4b9c0;border-radius:2px"></div>
<svg class="ab" style="left:1248px;top:699px" width="21" height="20"><polygon points="10.5,5 4.5,12 16.5,12" fill="#000"/></svg>
<div class="ab" style="left:1248px;top:719px;width:21px;height:154px;background:#f4f5f8;border:1px solid #b4b9c0;border-top:2px solid #b4b9c0"></div>
<div class="ab" style="left:1252px;top:791px;width:13px;height:9px;background:repeating-linear-gradient(#c3c7cd 0 1px, transparent 1px 2px)"></div>
<div class="ab" style="left:1248px;top:1123px;width:21px;height:21px;background:#f4f5f8;border:1px solid #b4b9c0;border-radius:2px"></div>
<svg class="ab" style="left:1248px;top:1123px" width="21" height="21"><polygon points="4.5,8 16.5,8 10.5,15" fill="#000"/></svg>
<div class="ab" style="left:527px;top:1144px;width:721px;height:21px;background:#dde1e8;border:1px solid #b4b9c0"></div>
<div class="ab" style="left:527px;top:1144px;width:21px;height:21px;background:#f4f5f8;border:1px solid #b4b9c0"></div>
<svg class="ab" style="left:527px;top:1144px" width="21" height="21"><polygon points="6,10.5 13,4.5 13,16.5" fill="#000"/></svg>
<div class="ab" style="left:547px;top:1144px;width:622px;height:21px;background:#f4f5f8;border:1px solid #b4b9c0"></div>
<div class="ab" style="left:851px;top:1148px;width:9px;height:13px;background:repeating-linear-gradient(90deg,#b4b9c0 0 1px, transparent 1px 2px)"></div>
<div class="ab" style="left:1227px;top:1144px;width:21px;height:21px;background:#f4f5f8;border:1px solid #b4b9c0"></div>
<svg class="ab" style="left:1227px;top:1144px" width="21" height="21"><polygon points="15,10.5 8,4.5 8,16.5" fill="#000"/></svg>
<div class="ab" style="left:1277px;top:105px;width:635px;height:1060px;background:#fff"></div>
<div class="ab" style="left:1277px;top:73px;width:635px;height:33px;background:#141c25"></div>
<svg class="ab" style="left:1273.7px;top:72.4px" width="30" height="30"><polygon points="3.3,22.1 7.7,24.4 16.8,10.7 13.5,8" fill="#98ac1e" stroke="#98ac1e" stroke-width="1.3"/><polygon points="14.4,19.3 17.7,15.6 23,21.3 19.7,24.2" fill="#98ac1e" stroke="#98ac1e" stroke-width="1.3"/></svg>
<div class="t" style="left:1305px;top:80px;font-size:18.5px;color:#fff"><span style="letter-spacing:0.9px">* (Ti)</span><span style="font-size:12px;font-weight:bold;letter-spacing:0.8px;margin-left:1px">24840</span><span style="letter-spacing:0.3px"> ~ Nanoparticle (Ti) 250.0 A</span></div>
<svg class="ab" style="left:1815px;top:74px" width="96" height="30" viewBox="0 0 96 30"><rect x="2" y="2" width="25" height="25" rx="3" fill="none" stroke="#000" stroke-width="2.2"/><path d="M7 22 H22" stroke="#000" stroke-width="2.5"/><path d="M43 2.5 H34 Q34.5 2.5 34.5 5 V24.5 Q34.5 27 37 27 H57 Q59.5 27 59.5 24.5 V15" fill="none" stroke="#000" stroke-width="2.2"/><path d="M46 13 L58.5 3 M50 3 H59 V11" fill="none" stroke="#000" stroke-width="2.2"/><rect x="67" y="2" width="25" height="25" rx="3" fill="none" stroke="#000" stroke-width="2.2"/><path d="M71 6 L88 23 M88 6 L71 23" stroke="#000" stroke-width="1.6"/></svg>
<svg class="ab" style="left:1322px;top:895px" width="160" height="140" viewBox="40 895 160 140"><defs><linearGradient id="gb1282" x1="0" x2="1"><stop offset="0" stop-color="#0000b0"/><stop offset="0.25" stop-color="#0000ff"/><stop offset="0.45" stop-color="#8080ff"/><stop offset="0.6" stop-color="#1010ff"/><stop offset="1" stop-color="#0000a0"/></linearGradient><linearGradient id="gr1282" x1="0" x2="0" y1="0" y2="1"><stop offset="0" stop-color="#b00000"/><stop offset="0.25" stop-color="#ff0000"/><stop offset="0.45" stop-color="#ff8080"/><stop offset="0.6" stop-color="#ff1010"/><stop offset="1" stop-color="#a00000"/></linearGradient></defs><circle cx="75" cy="1019" r="6" fill="#80f080"/><path d="M86 1005 L90 998" stroke="#40c040" stroke-width="1"/><rect x="70" y="944" width="15" height="75" fill="url(#gb1282)"/><polygon points="77.5,928 69,945 87,945" fill="#0000e0"/><rect x="78" y="1011" width="74" height="14" fill="url(#gr1282)"/><polygon points="151,1008 168,1018 151,1027" fill="#e00000"/><text x="78" y="924" font-family="Liberation Sans" font-size="24" fill="#4a55c0">Z</text><text x="173" y="1018" font-family="Liberation Sans" font-size="22.5" fill="#b85a5a">X</text></svg>
<svg class="ab" style="left:1277px;top:105px" width="635" height="1059" viewBox="1277 105 635 1059"><defs><radialGradient id="sph"><stop offset="0" stop-color="#ffffff"/><stop offset="0.12" stop-color="#e2e2e2"/><stop offset="0.38" stop-color="#ababab"/><stop offset="0.72" stop-color="#848484"/><stop offset="0.9" stop-color="#5e5e5e"/><stop offset="1" stop-color="#404040"/></radialGradient><radialGradient id="sphb"><stop offset="0" stop-color="#c4c4c4"/><stop offset="0.5" stop-color="#8e8e8e"/><stop offset="1" stop-color="#444444"/></radialGradient></defs><clipPath id="np"><polygon points="1604.6,153.0 1604.6,171.7 1610.5,171.7 1610.5,190.5 1616.5,190.5 1616.5,209.2 1622.4,209.2 1622.4,228.0 1628.4,228.0 1628.4,246.7 1634.3,246.7 1634.3,265.4 1640.2,265.4 1640.2,284.2 1646.2,284.2 1646.2,302.9 1652.1,302.9 1652.1,321.7 1658.1,321.7 1658.1,340.4 1664.0,340.4 1664.0,359.1 1669.9,359.1 1669.9,377.9 1675.9,377.9 1675.9,396.6 1681.8,396.6 1681.8,415.4 1687.8,415.4 1687.8,434.1 1693.7,434.1 1693.7,452.8 1699.6,452.8 1699.6,471.6 1705.6,471.6 1705.6,490.3 1711.5,490.3 1711.5,509.1 1717.5,509.1 1717.5,527.8 1723.4,527.8 1723.4,546.5 1729.3,546.5 1729.3,565.3 1735.3,565.3 1735.3,584.0 1741.2,584.0 1741.2,602.8 1747.2,602.8 1747.2,621.5 1753.1,621.5 1753.1,635.0 1753.1,635.0 1753.1,648.5 1747.2,648.5 1747.2,667.2 1741.2,667.2 1741.2,686.0 1735.3,686.0 1735.3,704.7 1729.3,704.7 1729.3,723.5 1723.4,723.5 1723.4,742.2 1717.5,742.2 1717.5,760.9 1711.5,760.9 1711.5,779.7 1705.6,779.7 1705.6,798.4 1699.6,798.4 1699.6,817.2 1693.7,817.2 1693.7,835.9 1687.8,835.9 1687.8,854.6 1681.8,854.6 1681.8,873.4 1675.9,873.4 1675.9,892.1 1669.9,892.1 1669.9,910.9 1664.0,910.9 1664.0,929.6 1658.1,929.6 1658.1,948.3 1652.1,948.3 1652.1,967.1 1646.2,967.1 1646.2,985.8 1640.2,985.8 1640.2,1004.6 1634.3,1004.6 1634.3,1023.3 1628.4,1023.3 1628.4,1042.0 1622.4,1042.0 1622.4,1060.8 1616.5,1060.8 1616.5,1079.5 1610.5,1079.5 1610.5,1098.3 1604.6,1098.3 1604.6,1117.0 1579.6,1117.0 1579.6,1098.3 1573.7,1098.3 1573.7,1079.5 1567.7,1079.5 1567.7,1060.8 1561.8,1060.8 1561.8,1042.0 1555.8,1042.0 1555.8,1023.3 1549.9,1023.3 1549.9,1004.6 1544.0,1004.6 1544.0,985.8 1538.0,985.8 1538.0,967.1 1532.1,967.1 1532.1,948.3 1526.1,948.3 1526.1,929.6 1520.2,929.6 1520.2,910.9 1514.3,910.9 1514.3,892.1 1508.3,892.1 1508.3,873.4 1502.4,873.4 1502.4,854.6 1496.4,854.6 1496.4,835.9 1490.5,835.9 1490.5,817.2 1484.6,817.2 1484.6,798.4 1478.6,798.4 1478.6,779.7 1472.7,779.7 1472.7,760.9 1466.7,760.9 1466.7,742.2 1460.8,742.2 1460.8,723.5 1454.9,723.5 1454.9,704.7 1448.9,704.7 1448.9,686.0 1443.0,686.0 1443.0,667.2 1437.0,667.2 1437.0,648.5 1431.1,648.5 1431.1,635.0 1431.1,635.0 1431.1,621.5 1437.0,621.5 1437.0,602.8 1443.0,602.8 1443.0,584.0 1448.9,584.0 1448.9,565.3 1454.9,565.3 1454.9,546.5 1460.8,546.5 1460.8,527.8 1466.7,527.8 1466.7,509.1 1472.7,509.1 1472.7,490.3 1478.6,490.3 1478.6,471.6 1484.6,471.6 1484.6,452.8 1490.5,452.8 1490.5,434.1 1496.4,434.1 1496.4,415.4 1502.4,415.4 1502.4,396.6 1508.3,396.6 1508.3,377.9 1514.3,377.9 1514.3,359.1 1520.2,359.1 1520.2,340.4 1526.1,340.4 1526.1,321.7 1532.1,321.7 1532.1,302.9 1538.0,302.9 1538.0,284.2 1544.0,284.2 1544.0,265.4 1549.9,265.4 1549.9,246.7 1555.8,246.7 1555.8,228.0 1561.8,228.0 1561.8,209.2 1567.7,209.2 1567.7,190.5 1573.7,190.5 1573.7,171.7 1579.6,171.7 1579.6,153.0"/></clipPath><g clip-path="url(#np)"><polygon points="1604.6,153.0 1604.6,171.7 1610.5,171.7 1610.5,190.5 1616.5,190.5 1616.5,209.2 1622.4,209.2 1622.4,228.0 1628.4,228.0 1628.4,246.7 1634.3,246.7 1634.3,265.4 1640.2,265.4 1640.2,284.2 1646.2,284.2 1646.2,302.9 1652.1,302.9 1652.1,321.7 1658.1,321.7 1658.1,340.4 1664.0,340.4 1664.0,359.1 1669.9,359.1 1669.9,377.9 1675.9,377.9 1675.9,396.6 1681.8,396.6 1681.8,415.4 1687.8,415.4 1687.8,434.1 1693.7,434.1 1693.7,452.8 1699.6,452.8 1699.6,471.6 1705.6,471.6 1705.6,490.3 1711.5,490.3 1711.5,509.1 1717.5,509.1 1717.5,527.8 1723.4,527.8 1723.4,546.5 1729.3,546.5 1729.3,565.3 1735.3,565.3 1735.3,584.0 1741.2,584.0 1741.2,602.8 1747.2,602.8 1747.2,621.5 1753.1,621.5 1753.1,635.0 1753.1,635.0 1753.1,648.5 1747.2,648.5 1747.2,667.2 1741.2,667.2 1741.2,686.0 1735.3,686.0 1735.3,704.7 1729.3,704.7 1729.3,723.5 1723.4,723.5 1723.4,742.2 1717.5,742.2 1717.5,760.9 1711.5,760.9 1711.5,779.7 1705.6,779.7 1705.6,798.4 1699.6,798.4 1699.6,817.2 1693.7,817.2 1693.7,835.9 1687.8,835.9 1687.8,854.6 1681.8,854.6 1681.8,873.4 1675.9,873.4 1675.9,892.1 1669.9,892.1 1669.9,910.9 1664.0,910.9 1664.0,929.6 1658.1,929.6 1658.1,948.3 1652.1,948.3 1652.1,967.1 1646.2,967.1 1646.2,985.8 1640.2,985.8 1640.2,1004.6 1634.3,1004.6 1634.3,1023.3 1628.4,1023.3 1628.4,1042.0 1622.4,1042.0 1622.4,1060.8 1616.5,1060.8 1616.5,1079.5 1610.5,1079.5 1610.5,1098.3 1604.6,1098.3 1604.6,1117.0 1579.6,1117.0 1579.6,1098.3 1573.7,1098.3 1573.7,1079.5 1567.7,1079.5 1567.7,1060.8 1561.8,1060.8 1561.8,1042.0 1555.8,1042.0 1555.8,1023.3 1549.9,1023.3 1549.9,1004.6 1544.0,1004.6 1544.0,985.8 1538.0,985.8 1538.0,967.1 1532.1,967.1 1532.1,948.3 1526.1,948.3 1526.1,929.6 1520.2,929.6 1520.2,910.9 1514.3,910.9 1514.3,892.1 1508.3,892.1 1508.3,873.4 1502.4,873.4 1502.4,854.6 1496.4,854.6 1496.4,835.9 1490.5,835.9 1490.5,817.2 1484.6,817.2 1484.6,798.4 1478.6,798.4 1478.6,779.7 1472.7,779.7 1472.7,760.9 1466.7,760.9 1466.7,742.2 1460.8,742.2 1460.8,723.5 1454.9,723.5 1454.9,704.7 1448.9,704.7 1448.9,686.0 1443.0,686.0 1443.0,667.2 1437.0,667.2 1437.0,648.5 1431.1,648.5 1431.1,635.0 1431.1,635.0 1431.1,621.5 1437.0,621.5 1437.0,602.8 1443.0,602.8 1443.0,584.0 1448.9,584.0 1448.9,565.3 1454.9,565.3 1454.9,546.5 1460.8,546.5 1460.8,527.8 1466.7,527.8 1466.7,509.1 1472.7,509.1 1472.7,490.3 1478.6,490.3 1478.6,471.6 1484.6,471.6 1484.6,452.8 1490.5,452.8 1490.5,434.1 1496.4,434.1 1496.4,415.4 1502.4,415.4 1502.4,396.6 1508.3,396.6 1508.3,377.9 1514.3,377.9 1514.3,359.1 1520.2,359.1 1520.2,340.4 1526.1,340.4 1526.1,321.7 1532.1,321.7 1532.1,302.9 1538.0,302.9 1538.0,284.2 1544.0,284.2 1544.0,265.4 1549.9,265.4 1549.9,246.7 1555.8,246.7 1555.8,228.0 1561.8,228.0 1561.8,209.2 1567.7,209.2 1567.7,190.5 1573.7,190.5 1573.7,171.7 1579.6,171.7 1579.6,153.0" fill="#3c3c3c"/><g fill="#3c3c3c"><rect x="1568.6" y="154.2" width="46.9" height="9.6"/><rect x="1574.4" y="163.6" width="35.4" height="9.6"/><rect x="1574.4" y="173.1" width="35.4" height="9.6"/><rect x="1562.4" y="182.5" width="59.4" height="9.6"/><rect x="1562.4" y="191.9" width="59.4" height="9.6"/><rect x="1568.6" y="201.4" width="46.9" height="9.6"/><rect x="1550.9" y="210.8" width="82.3" height="9.6"/><rect x="1556.7" y="220.2" width="70.8" height="9.6"/><rect x="1556.7" y="229.6" width="70.8" height="9.6"/><rect x="1544.7" y="239.1" width="94.8" height="9.6"/><rect x="1544.7" y="248.5" width="94.8" height="9.6"/><rect x="1550.9" y="257.9" width="82.3" height="9.6"/><rect x="1533.2" y="267.4" width="117.7" height="9.6"/><rect x="1539.0" y="276.8" width="106.2" height="9.6"/><rect x="1539.0" y="286.2" width="106.2" height="9.6"/><rect x="1527.0" y="295.6" width="130.2" height="9.6"/><rect x="1527.0" y="305.1" width="130.2" height="9.6"/><rect x="1533.2" y="314.5" width="117.7" height="9.6"/><rect x="1515.5" y="323.9" width="153.1" height="9.6"/><rect x="1521.3" y="333.4" width="141.6" height="9.6"/><rect x="1521.3" y="342.8" width="141.6" height="9.6"/><rect x="1509.3" y="352.2" width="165.6" height="9.6"/><rect x="1509.3" y="361.7" width="165.6" height="9.6"/><rect x="1515.5" y="371.1" width="153.1" height="9.6"/><rect x="1497.8" y="380.5" width="188.5" height="9.6"/><rect x="1503.6" y="390.0" width="177.0" height="9.6"/><rect x="1503.6" y="399.4" width="177.0" height="9.6"/><rect x="1491.6" y="408.8" width="201.0" height="9.6"/><rect x="1491.6" y="418.2" width="201.0" height="9.6"/><rect x="1497.8" y="427.7" width="188.5" height="9.6"/><rect x="1480.1" y="437.1" width="223.9" height="9.6"/><rect x="1485.9" y="446.5" width="212.4" height="9.6"/><rect x="1485.9" y="456.0" width="212.4" height="9.6"/><rect x="1473.9" y="465.4" width="236.4" height="9.6"/><rect x="1473.9" y="474.8" width="236.4" height="9.6"/><rect x="1480.1" y="484.3" width="223.9" height="9.6"/><rect x="1462.4" y="493.7" width="259.3" height="9.6"/><rect x="1468.2" y="503.1" width="247.8" height="9.6"/><rect x="1468.2" y="512.5" width="247.8" height="9.6"/><rect x="1456.2" y="522.0" width="271.8" height="9.6"/><rect x="1456.2" y="531.4" width="271.8" height="9.6"/><rect x="1462.4" y="540.8" width="259.3" height="9.6"/><rect x="1444.8" y="550.3" width="294.7" height="9.6"/><rect x="1450.5" y="559.7" width="283.2" height="9.6"/><rect x="1450.5" y="569.1" width="283.2" height="9.6"/><rect x="1438.5" y="578.5" width="307.2" height="9.6"/><rect x="1438.5" y="588.0" width="307.2" height="9.6"/><rect x="1444.8" y="597.4" width="294.7" height="9.6"/><rect x="1427.0" y="606.8" width="330.1" height="9.6"/><rect x="1432.8" y="616.3" width="318.6" height="9.6"/><rect x="1432.8" y="625.7" width="318.6" height="9.6"/><rect x="1420.8" y="635.1" width="342.6" height="9.6"/><rect x="1438.5" y="644.6" width="307.2" height="9.6"/><rect x="1427.0" y="654.0" width="330.1" height="9.6"/><rect x="1444.8" y="663.4" width="294.7" height="9.6"/><rect x="1432.8" y="672.8" width="318.6" height="9.6"/><rect x="1450.5" y="682.3" width="283.2" height="9.6"/><rect x="1438.5" y="691.7" width="307.2" height="9.6"/><rect x="1456.2" y="701.1" width="271.8" height="9.6"/><rect x="1444.8" y="710.6" width="294.7" height="9.6"/><rect x="1462.4" y="720.0" width="259.3" height="9.6"/><rect x="1450.5" y="729.4" width="283.2" height="9.6"/><rect x="1468.2" y="738.9" width="247.8" height="9.6"/><rect x="1456.2" y="748.3" width="271.8" height="9.6"/><rect x="1473.9" y="757.7" width="236.4" height="9.6"/><rect x="1462.4" y="767.1" width="259.3" height="9.6"/><rect x="1480.1" y="776.6" width="223.9" height="9.6"/><rect x="1468.2" y="786.0" width="247.8" height="9.6"/><rect x="1485.9" y="795.4" width="212.4" height="9.6"/><rect x="1473.9" y="804.9" width="236.4" height="9.6"/><rect x="1491.6" y="814.3" width="201.0" height="9.6"/><rect x="1480.1" y="823.7" width="223.9" height="9.6"/><rect x="1497.8" y="833.2" width="188.5" height="9.6"/><rect x="1485.9" y="842.6" width="212.4" height="9.6"/><rect x="1503.6" y="852.0" width="177.0" height="9.6"/><rect x="1491.6" y="861.4" width="201.0" height="9.6"/><rect x="1509.3" y="870.9" width="165.6" height="9.6"/><rect x="1497.8" y="880.3" width="188.5" height="9.6"/><rect x="1515.5" y="889.7" width="153.1" height="9.6"/><rect x="1503.6" y="899.2" width="177.0" height="9.6"/><rect x="1521.3" y="908.6" width="141.6" height="9.6"/><rect x="1509.3" y="918.0" width="165.6" height="9.6"/><rect x="1527.0" y="927.5" width="130.2" height="9.6"/><rect x="1515.5" y="936.9" width="153.1" height="9.6"/><rect x="1533.2" y="946.3" width="117.7" height="9.6"/><rect x="1521.3" y="955.7" width="141.6" height="9.6"/><rect x="1539.0" y="965.2" width="106.2" height="9.6"/><rect x="1527.0" y="974.6" width="130.2" height="9.6"/><rect x="1544.7" y="984.0" width="94.8" height="9.6"/><rect x="1533.2" y="993.5" width="117.7" height="9.6"/><rect x="1550.9" y="1002.9" width="82.3" height="9.6"/><rect x="1539.0" y="1012.3" width="106.2" height="9.6"/><rect x="1556.7" y="1021.8" width="70.8" height="9.6"/><rect x="1544.7" y="1031.2" width="94.8" height="9.6"/><rect x="1562.4" y="1040.6" width="59.4" height="9.6"/><rect x="1550.9" y="1050.0" width="82.3" height="9.6"/><rect x="1568.6" y="1059.5" width="46.9" height="9.6"/><rect x="1556.7" y="1068.9" width="70.8" height="9.6"/><rect x="1574.4" y="1078.3" width="35.4" height="9.6"/><rect x="1562.4" y="1087.8" width="59.4" height="9.6"/><rect x="1580.1" y="1097.2" width="24.0" height="9.6"/><rect x="1568.6" y="1106.6" width="46.9" height="9.6"/></g><g fill="url(#sphb)"><circle cx="1577.5" cy="159.0" r="5.6"/><circle cx="1592.1" cy="159.0" r="5.6"/><circle cx="1606.7" cy="159.0" r="5.6"/><circle cx="1583.2" cy="168.4" r="5.6"/><circle cx="1600.9" cy="168.4" r="5.6"/><circle cx="1583.2" cy="177.9" r="5.6"/><circle cx="1600.9" cy="177.9" r="5.6"/><circle cx="1571.2" cy="187.3" r="5.6"/><circle cx="1586.1" cy="187.3" r="5.6"/><circle cx="1598.1" cy="187.3" r="5.6"/><circle cx="1612.9" cy="187.3" r="5.6"/><circle cx="1571.2" cy="196.7" r="5.6"/><circle cx="1586.1" cy="196.7" r="5.6"/><circle cx="1598.1" cy="196.7" r="5.6"/><circle cx="1612.9" cy="196.7" r="5.6"/><circle cx="1577.5" cy="206.2" r="5.6"/><circle cx="1592.1" cy="206.2" r="5.6"/><circle cx="1606.7" cy="206.2" r="5.6"/><circle cx="1559.8" cy="215.6" r="5.6"/><circle cx="1577.5" cy="215.6" r="5.6"/><circle cx="1592.1" cy="215.6" r="5.6"/><circle cx="1606.7" cy="215.6" r="5.6"/><circle cx="1624.4" cy="215.6" r="5.6"/><circle cx="1565.5" cy="225.0" r="5.6"/><circle cx="1583.2" cy="225.0" r="5.6"/><circle cx="1600.9" cy="225.0" r="5.6"/><circle cx="1618.7" cy="225.0" r="5.6"/><circle cx="1565.5" cy="234.4" r="5.6"/><circle cx="1583.2" cy="234.4" r="5.6"/><circle cx="1600.9" cy="234.4" r="5.6"/><circle cx="1618.7" cy="234.4" r="5.6"/><circle cx="1553.5" cy="243.9" r="5.6"/><circle cx="1571.2" cy="243.9" r="5.6"/><circle cx="1586.1" cy="243.9" r="5.6"/><circle cx="1598.1" cy="243.9" r="5.6"/><circle cx="1612.9" cy="243.9" r="5.6"/><circle cx="1630.7" cy="243.9" r="5.6"/><circle cx="1553.5" cy="253.3" r="5.6"/><circle cx="1571.2" cy="253.3" r="5.6"/><circle cx="1586.1" cy="253.3" r="5.6"/><circle cx="1598.1" cy="253.3" r="5.6"/><circle cx="1612.9" cy="253.3" r="5.6"/><circle cx="1630.7" cy="253.3" r="5.6"/><circle cx="1559.8" cy="262.7" r="5.6"/><circle cx="1577.5" cy="262.7" r="5.6"/><circle cx="1592.1" cy="262.7" r="5.6"/><circle cx="1606.7" cy="262.7" r="5.6"/><circle cx="1624.4" cy="262.7" r="5.6"/><circle cx="1542.1" cy="272.2" r="5.6"/><circle cx="1559.8" cy="272.2" r="5.6"/><circle cx="1577.5" cy="272.2" r="5.6"/><circle cx="1592.1" cy="272.2" r="5.6"/><circle cx="1606.7" cy="272.2" r="5.6"/><circle cx="1624.4" cy="272.2" r="5.6"/><circle cx="1642.1" cy="272.2" r="5.6"/><circle cx="1547.8" cy="281.6" r="5.6"/><circle cx="1565.5" cy="281.6" r="5.6"/><circle cx="1583.2" cy="281.6" r="5.6"/><circle cx="1600.9" cy="281.6" r="5.6"/><circle cx="1618.7" cy="281.6" r="5.6"/><circle cx="1636.3" cy="281.6" r="5.6"/><circle cx="1547.8" cy="291.0" r="5.6"/><circle cx="1565.5" cy="291.0" r="5.6"/><circle cx="1583.2" cy="291.0" r="5.6"/><circle cx="1600.9" cy="291.0" r="5.6"/><circle cx="1618.7" cy="291.0" r="5.6"/><circle cx="1636.3" cy="291.0" r="5.6"/><circle cx="1535.8" cy="300.4" r="5.6"/><circle cx="1553.5" cy="300.4" r="5.6"/><circle cx="1571.2" cy="300.4" r="5.6"/><circle cx="1586.1" cy="300.4" r="5.6"/><circle cx="1598.1" cy="300.4" r="5.6"/><circle cx="1612.9" cy="300.4" r="5.6"/><circle cx="1630.7" cy="300.4" r="5.6"/><circle cx="1648.3" cy="300.4" r="5.6"/><circle cx="1535.8" cy="309.9" r="5.6"/><circle cx="1553.5" cy="309.9" r="5.6"/><circle cx="1571.2" cy="309.9" r="5.6"/><circle cx="1586.1" cy="309.9" r="5.6"/><circle cx="1598.1" cy="309.9" r="5.6"/><circle cx="1612.9" cy="309.9" r="5.6"/><circle cx="1630.7" cy="309.9" r="5.6"/><circle cx="1648.3" cy="309.9" r="5.6"/><circle cx="1542.1" cy="319.3" r="5.6"/><circle cx="1559.8" cy="319.3" r="5.6"/><circle cx="1577.5" cy="319.3" r="5.6"/><circle cx="1592.1" cy="319.3" r="5.6"/><circle cx="1606.7" cy="319.3" r="5.6"/><circle cx="1624.4" cy="319.3" r="5.6"/><circle cx="1642.1" cy="319.3" r="5.6"/><circle cx="1524.4" cy="328.7" r="5.6"/><circle cx="1542.1" cy="328.7" r="5.6"/><circle cx="1559.8" cy="328.7" r="5.6"/><circle cx="1577.5" cy="328.7" r="5.6"/><circle cx="1592.1" cy="328.7" r="5.6"/><circle cx="1606.7" cy="328.7" r="5.6"/><circle cx="1624.4" cy="328.7" r="5.6"/><circle cx="1642.1" cy="328.7" r="5.6"/><circle cx="1659.8" cy="328.7" r="5.6"/><circle cx="1530.2" cy="338.2" r="5.6"/><circle cx="1547.8" cy="338.2" r="5.6"/><circle cx="1565.5" cy="338.2" r="5.6"/><circle cx="1583.2" cy="338.2" r="5.6"/><circle cx="1600.9" cy="338.2" r="5.6"/><circle cx="1618.7" cy="338.2" r="5.6"/><circle cx="1636.3" cy="338.2" r="5.6"/><circle cx="1654.0" cy="338.2" r="5.6"/><circle cx="1530.2" cy="347.6" r="5.6"/><circle cx="1547.8" cy="347.6" r="5.6"/><circle cx="1565.5" cy="347.6" r="5.6"/><circle cx="1583.2" cy="347.6" r="5.6"/><circle cx="1600.9" cy="347.6" r="5.6"/><circle cx="1618.7" cy="347.6" r="5.6"/><circle cx="1636.3" cy="347.6" r="5.6"/><circle cx="1654.0" cy="347.6" r="5.6"/><circle cx="1518.2" cy="357.0" r="5.6"/><circle cx="1535.8" cy="357.0" r="5.6"/><circle cx="1553.5" cy="357.0" r="5.6"/><circle cx="1571.2" cy="357.0" r="5.6"/><circle cx="1586.1" cy="357.0" r="5.6"/><circle cx="1598.1" cy="357.0" r="5.6"/><circle cx="1612.9" cy="357.0" r="5.6"/><circle cx="1630.7" cy="357.0" r="5.6"/><circle cx="1648.3" cy="357.0" r="5.6"/><circle cx="1666.0" cy="357.0" r="5.6"/><circle cx="1518.2" cy="366.5" r="5.6"/><circle cx="1535.8" cy="366.5" r="5.6"/><circle cx="1553.5" cy="366.5" r="5.6"/><circle cx="1571.2" cy="366.5" r="5.6"/><circle cx="1586.1" cy="366.5" r="5.6"/><circle cx="1598.1" cy="366.5" r="5.6"/><circle cx="1612.9" cy="366.5" r="5.6"/><circle cx="1630.7" cy="366.5" r="5.6"/><circle cx="1648.3" cy="366.5" r="5.6"/><circle cx="1666.0" cy="366.5" r="5.6"/><circle cx="1524.4" cy="375.9" r="5.6"/><circle cx="1542.1" cy="375.9" r="5.6"/><circle cx="1559.8" cy="375.9" r="5.6"/><circle cx="1577.5" cy="375.9" r="5.6"/><circle cx="1592.1" cy="375.9" r="5.6"/><circle cx="1606.7" cy="375.9" r="5.6"/><circle cx="1624.4" cy="375.9" r="5.6"/><circle cx="1642.1" cy="375.9" r="5.6"/><circle cx="1659.8" cy="375.9" r="5.6"/><circle cx="1506.7" cy="385.3" r="5.6"/><circle cx="1524.4" cy="385.3" r="5.6"/><circle cx="1542.1" cy="385.3" r="5.6"/><circle cx="1559.8" cy="385.3" r="5.6"/><circle cx="1577.5" cy="385.3" r="5.6"/><circle cx="1592.1" cy="385.3" r="5.6"/><circle cx="1606.7" cy="385.3" r="5.6"/><circle cx="1624.4" cy="385.3" r="5.6"/><circle cx="1642.1" cy="385.3" r="5.6"/><circle cx="1659.8" cy="385.3" r="5.6"/><circle cx="1677.5" cy="385.3" r="5.6"/><circle cx="1512.4" cy="394.8" r="5.6"/><circle cx="1530.2" cy="394.8" r="5.6"/><circle cx="1547.8" cy="394.8" r="5.6"/><circle cx="1565.5" cy="394.8" r="5.6"/><circle cx="1583.2" cy="394.8" r="5.6"/><circle cx="1600.9" cy="394.8" r="5.6"/><circle cx="1618.7" cy="394.8" r="5.6"/><circle cx="1636.3" cy="394.8" r="5.6"/><circle cx="1654.0" cy="394.8" r="5.6"/><circle cx="1671.8" cy="394.8" r="5.6"/><circle cx="1512.4" cy="404.2" r="5.6"/><circle cx="1530.2" cy="404.2" r="5.6"/><circle cx="1547.8" cy="404.2" r="5.6"/><circle cx="1565.5" cy="404.2" r="5.6"/><circle cx="1583.2" cy="404.2" r="5.6"/><circle cx="1600.9" cy="404.2" r="5.6"/><circle cx="1618.7" cy="404.2" r="5.6"/><circle cx="1636.3" cy="404.2" r="5.6"/><circle cx="1654.0" cy="404.2" r="5.6"/><circle cx="1671.8" cy="404.2" r="5.6"/><circle cx="1500.4" cy="413.6" r="5.6"/><circle cx="1518.2" cy="413.6" r="5.6"/><circle cx="1535.8" cy="413.6" r="5.6"/><circle cx="1553.5" cy="413.6" r="5.6"/><circle cx="1571.2" cy="413.6" r="5.6"/><circle cx="1586.1" cy="413.6" r="5.6"/><circle cx="1598.1" cy="413.6" r="5.6"/><circle cx="1612.9" cy="413.6" r="5.6"/><circle cx="1630.7" cy="413.6" r="5.6"/><circle cx="1648.3" cy="413.6" r="5.6"/><circle cx="1666.0" cy="413.6" r="5.6"/><circle cx="1683.8" cy="413.6" r="5.6"/><circle cx="1500.4" cy="423.0" r="5.6"/><circle cx="1518.2" cy="423.0" r="5.6"/><circle cx="1535.8" cy="423.0" r="5.6"/><circle cx="1553.5" cy="423.0" r="5.6"/><circle cx="1571.2" cy="423.0" r="5.6"/><circle cx="1586.1" cy="423.0" r="5.6"/><circle cx="1598.1" cy="423.0" r="5.6"/><circle cx="1612.9" cy="423.0" r="5.6"/><circle cx="1630.7" cy="423.0" r="5.6"/><circle cx="1648.3" cy="423.0" r="5.6"/><circle cx="1666.0" cy="423.0" r="5.6"/><circle cx="1683.8" cy="423.0" r="5.6"/><circle cx="1506.7" cy="432.5" r="5.6"/><circle cx="1524.4" cy="432.5" r="5.6"/><circle cx="1542.1" cy="432.5" r="5.6"/><circle cx="1559.8" cy="432.5" r="5.6"/><circle cx="1577.5" cy="432.5" r="5.6"/><circle cx="1592.1" cy="432.5" r="5.6"/><circle cx="1606.7" cy="432.5" r="5.6"/><circle cx="1624.4" cy="432.5" r="5.6"/><circle cx="1642.1" cy="432.5" r="5.6"/><circle cx="1659.8" cy="432.5" r="5.6"/><circle cx="1677.5" cy="432.5" r="5.6"/><circle cx="1489.0" cy="441.9" r="5.6"/><circle cx="1506.7" cy="441.9" r="5.6"/><circle cx="1524.4" cy="441.9" r="5.6"/><circle cx="1542.1" cy="441.9" r="5.6"/><circle cx="1559.8" cy="441.9" r="5.6"/><circle cx="1577.5" cy="441.9" r="5.6"/><circle cx="1592.1" cy="441.9" r="5.6"/><circle cx="1606.7" cy="441.9" r="5.6"/><circle cx="1624.4" cy="441.9" r="5.6"/><circle cx="1642.1" cy="441.9" r="5.6"/><circle cx="1659.8" cy="441.9" r="5.6"/><circle cx="1677.5" cy="441.9" r="5.6"/><circle cx="1695.2" cy="441.9" r="5.6"/><circle cx="1494.8" cy="451.3" r="5.6"/><circle cx="1512.4" cy="451.3" r="5.6"/><circle cx="1530.2" cy="451.3" r="5.6"/><circle cx="1547.8" cy="451.3" r="5.6"/><circle cx="1565.5" cy="451.3" r="5.6"/><circle cx="1583.2" cy="451.3" r="5.6"/><circle cx="1600.9" cy="451.3" r="5.6"/><circle cx="1618.7" cy="451.3" r="5.6"/><circle cx="1636.3" cy="451.3" r="5.6"/><circle cx="1654.0" cy="451.3" r="5.6"/><circle cx="1671.8" cy="451.3" r="5.6"/><circle cx="1689.4" cy="451.3" r="5.6"/><circle cx="1494.8" cy="460.8" r="5.6"/><circle cx="1512.4" cy="460.8" r="5.6"/><circle cx="1530.2" cy="460.8" r="5.6"/><circle cx="1547.8" cy="460.8" r="5.6"/><circle cx="1565.5" cy="460.8" r="5.6"/><circle cx="1583.2" cy="460.8" r="5.6"/><circle cx="1600.9" cy="460.8" r="5.6"/><circle cx="1618.7" cy="460.8" r="5.6"/><circle cx="1636.3" cy="460.8" r="5.6"/><circle cx="1654.0" cy="460.8" r="5.6"/><circle cx="1671.8" cy="460.8" r="5.6"/><circle cx="1689.4" cy="460.8" r="5.6"/><circle cx="1482.8" cy="470.2" r="5.6"/><circle cx="1500.4" cy="470.2" r="5.6"/><circle cx="1518.2" cy="470.2" r="5.6"/><circle cx="1535.8" cy="470.2" r="5.6"/><circle cx="1553.5" cy="470.2" r="5.6"/><circle cx="1571.2" cy="470.2" r="5.6"/><circle cx="1586.1" cy="470.2" r="5.6"/><circle cx="1598.1" cy="470.2" r="5.6"/><circle cx="1612.9" cy="470.2" r="5.6"/><circle cx="1630.7" cy="470.2" r="5.6"/><circle cx="1648.3" cy="470.2" r="5.6"/><circle cx="1666.0" cy="470.2" r="5.6"/><circle cx="1683.8" cy="470.2" r="5.6"/><circle cx="1701.4" cy="470.2" r="5.6"/><circle cx="1482.8" cy="479.6" r="5.6"/><circle cx="1500.4" cy="479.6" r="5.6"/><circle cx="1518.2" cy="479.6" r="5.6"/><circle cx="1535.8" cy="479.6" r="5.6"/><circle cx="1553.5" cy="479.6" r="5.6"/><circle cx="1571.2" cy="479.6" r="5.6"/><circle cx="1586.1" cy="479.6" r="5.6"/><circle cx="1598.1" cy="479.6" r="5.6"/><circle cx="1612.9" cy="479.6" r="5.6"/><circle cx="1630.7" cy="479.6" r="5.6"/><circle cx="1648.3" cy="479.6" r="5.6"/><circle cx="1666.0" cy="479.6" r="5.6"/><circle cx="1683.8" cy="479.6" r="5.6"/><circle cx="1701.4" cy="479.6" r="5.6"/><circle cx="1489.0" cy="489.1" r="5.6"/><circle cx="1506.7" cy="489.1" r="5.6"/><circle cx="1524.4" cy="489.1" r="5.6"/><circle cx="1542.1" cy="489.1" r="5.6"/><circle cx="1559.8" cy="489.1" r="5.6"/><circle cx="1577.5" cy="489.1" r="5.6"/><circle cx="1592.1" cy="489.1" r="5.6"/><circle cx="1606.7" cy="489.1" r="5.6"/><circle cx="1624.4" cy="489.1" r="5.6"/><circle cx="1642.1" cy="489.1" r="5.6"/><circle cx="1659.8" cy="489.1" r="5.6"/><circle cx="1677.5" cy="489.1" r="5.6"/><circle cx="1695.2" cy="489.1" r="5.6"/><circle cx="1471.3" cy="498.5" r="5.6"/><circle cx="1489.0" cy="498.5" r="5.6"/><circle cx="1506.7" cy="498.5" r="5.6"/><circle cx="1524.4" cy="498.5" r="5.6"/><circle cx="1542.1" cy="498.5" r="5.6"/><circle cx="1559.8" cy="498.5" r="5.6"/><circle cx="1577.5" cy="498.5" r="5.6"/><circle cx="1592.1" cy="498.5" r="5.6"/><circle cx="1606.7" cy="498.5" r="5.6"/><circle cx="1624.4" cy="498.5" r="5.6"/><circle cx="1642.1" cy="498.5" r="5.6"/><circle cx="1659.8" cy="498.5" r="5.6"/><circle cx="1677.5" cy="498.5" r="5.6"/><circle cx="1695.2" cy="498.5" r="5.6"/><circle cx="1712.9" cy="498.5" r="5.6"/><circle cx="1477.0" cy="507.9" r="5.6"/><circle cx="1494.8" cy="507.9" r="5.6"/><circle cx="1512.4" cy="507.9" r="5.6"/><circle cx="1530.2" cy="507.9" r="5.6"/><circle cx="1547.8" cy="507.9" r="5.6"/><circle cx="1565.5" cy="507.9" r="5.6"/><circle cx="1583.2" cy="507.9" r="5.6"/><circle cx="1600.9" cy="507.9" r="5.6"/><circle cx="1618.7" cy="507.9" r="5.6"/><circle cx="1636.3" cy="507.9" r="5.6"/><circle cx="1654.0" cy="507.9" r="5.6"/><circle cx="1671.8" cy="507.9" r="5.6"/><circle cx="1689.4" cy="507.9" r="5.6"/><circle cx="1707.2" cy="507.9" r="5.6"/><circle cx="1477.0" cy="517.3" r="5.6"/><circle cx="1494.8" cy="517.3" r="5.6"/><circle cx="1512.4" cy="517.3" r="5.6"/><circle cx="1530.2" cy="517.3" r="5.6"/><circle cx="1547.8" cy="517.3" r="5.6"/><circle cx="1565.5" cy="517.3" r="5.6"/><circle cx="1583.2" cy="517.3" r="5.6"/><circle cx="1600.9" cy="517.3" r="5.6"/><circle cx="1618.7" cy="517.3" r="5.6"/><circle cx="1636.3" cy="517.3" r="5.6"/><circle cx="1654.0" cy="517.3" r="5.6"/><circle cx="1671.8" cy="517.3" r="5.6"/><circle cx="1689.4" cy="517.3" r="5.6"/><circle cx="1707.2" cy="517.3" r="5.6"/><circle cx="1465.0" cy="526.8" r="5.6"/><circle cx="1482.8" cy="526.8" r="5.6"/><circle cx="1500.4" cy="526.8" r="5.6"/><circle cx="1518.2" cy="526.8" r="5.6"/><circle cx="1535.8" cy="526.8" r="5.6"/><circle cx="1553.5" cy="526.8" r="5.6"/><circle cx="1571.2" cy="526.8" r="5.6"/><circle cx="1586.1" cy="526.8" r="5.6"/><circle cx="1598.1" cy="526.8" r="5.6"/><circle cx="1612.9" cy="526.8" r="5.6"/><circle cx="1630.7" cy="526.8" r="5.6"/><circle cx="1648.3" cy="526.8" r="5.6"/><circle cx="1666.0" cy="526.8" r="5.6"/><circle cx="1683.8" cy="526.8" r="5.6"/><circle cx="1701.4" cy="526.8" r="5.6"/><circle cx="1719.2" cy="526.8" r="5.6"/><circle cx="1465.0" cy="536.2" r="5.6"/><circle cx="1482.8" cy="536.2" r="5.6"/><circle cx="1500.4" cy="536.2" r="5.6"/><circle cx="1518.2" cy="536.2" r="5.6"/><circle cx="1535.8" cy="536.2" r="5.6"/><circle cx="1553.5" cy="536.2" r="5.6"/><circle cx="1571.2" cy="536.2" r="5.6"/><circle cx="1586.1" cy="536.2" r="5.6"/><circle cx="1598.1" cy="536.2" r="5.6"/><circle cx="1612.9" cy="536.2" r="5.6"/><circle cx="1630.7" cy="536.2" r="5.6"/><circle cx="1648.3" cy="536.2" r="5.6"/><circle cx="1666.0" cy="536.2" r="5.6"/><circle cx="1683.8" cy="536.2" r="5.6"/><circle cx="1701.4" cy="536.2" r="5.6"/><circle cx="1719.2" cy="536.2" r="5.6"/><circle cx="1471.3" cy="545.6" r="5.6"/><circle cx="1489.0" cy="545.6" r="5.6"/><circle cx="1506.7" cy="545.6" r="5.6"/><circle cx="1524.4" cy="545.6" r="5.6"/><circle cx="1542.1" cy="545.6" r="5.6"/><circle cx="1559.8" cy="545.6" r="5.6"/><circle cx="1577.5" cy="545.6" r="5.6"/><circle cx="1592.1" cy="545.6" r="5.6"/><circle cx="1606.7" cy="545.6" r="5.6"/><circle cx="1624.4" cy="545.6" r="5.6"/><circle cx="1642.1" cy="545.6" r="5.6"/><circle cx="1659.8" cy="545.6" r="5.6"/><circle cx="1677.5" cy="545.6" r="5.6"/><circle cx="1695.2" cy="545.6" r="5.6"/><circle cx="1712.9" cy="545.6" r="5.6"/><circle cx="1453.6" cy="555.1" r="5.6"/><circle cx="1471.3" cy="555.1" r="5.6"/><circle cx="1489.0" cy="555.1" r="5.6"/><circle cx="1506.7" cy="555.1" r="5.6"/><circle cx="1524.4" cy="555.1" r="5.6"/><circle cx="1542.1" cy="555.1" r="5.6"/><circle cx="1559.8" cy="555.1" r="5.6"/><circle cx="1577.5" cy="555.1" r="5.6"/><circle cx="1592.1" cy="555.1" r="5.6"/><circle cx="1606.7" cy="555.1" r="5.6"/><circle cx="1624.4" cy="555.1" r="5.6"/><circle cx="1642.1" cy="555.1" r="5.6"/><circle cx="1659.8" cy="555.1" r="5.6"/><circle cx="1677.5" cy="555.1" r="5.6"/><circle cx="1695.2" cy="555.1" r="5.6"/><circle cx="1712.9" cy="555.1" r="5.6"/><circle cx="1730.6" cy="555.1" r="5.6"/><circle cx="1459.3" cy="564.5" r="5.6"/><circle cx="1477.0" cy="564.5" r="5.6"/><circle cx="1494.8" cy="564.5" r="5.6"/><circle cx="1512.4" cy="564.5" r="5.6"/><circle cx="1530.2" cy="564.5" r="5.6"/><circle cx="1547.8" cy="564.5" r="5.6"/><circle cx="1565.5" cy="564.5" r="5.6"/><circle cx="1583.2" cy="564.5" r="5.6"/><circle cx="1600.9" cy="564.5" r="5.6"/><circle cx="1618.7" cy="564.5" r="5.6"/><circle cx="1636.3" cy="564.5" r="5.6"/><circle cx="1654.0" cy="564.5" r="5.6"/><circle cx="1671.8" cy="564.5" r="5.6"/><circle cx="1689.4" cy="564.5" r="5.6"/><circle cx="1707.2" cy="564.5" r="5.6"/><circle cx="1724.8" cy="564.5" r="5.6"/><circle cx="1459.3" cy="573.9" r="5.6"/><circle cx="1477.0" cy="573.9" r="5.6"/><circle cx="1494.8" cy="573.9" r="5.6"/><circle cx="1512.4" cy="573.9" r="5.6"/><circle cx="1530.2" cy="573.9" r="5.6"/><circle cx="1547.8" cy="573.9" r="5.6"/><circle cx="1565.5" cy="573.9" r="5.6"/><circle cx="1583.2" cy="573.9" r="5.6"/><circle cx="1600.9" cy="573.9" r="5.6"/><circle cx="1618.7" cy="573.9" r="5.6"/><circle cx="1636.3" cy="573.9" r="5.6"/><circle cx="1654.0" cy="573.9" r="5.6"/><circle cx="1671.8" cy="573.9" r="5.6"/><circle cx="1689.4" cy="573.9" r="5.6"/><circle cx="1707.2" cy="573.9" r="5.6"/><circle cx="1724.8" cy="573.9" r="5.6"/><circle cx="1447.3" cy="583.3" r="5.6"/><circle cx="1465.0" cy="583.3" r="5.6"/><circle cx="1482.8" cy="583.3" r="5.6"/><circle cx="1500.4" cy="583.3" r="5.6"/><circle cx="1518.2" cy="583.3" r="5.6"/><circle cx="1535.8" cy="583.3" r="5.6"/><circle cx="1553.5" cy="583.3" r="5.6"/><circle cx="1571.2" cy="583.3" r="5.6"/><circle cx="1586.1" cy="583.3" r="5.6"/><circle cx="1598.1" cy="583.3" r="5.6"/><circle cx="1612.9" cy="583.3" r="5.6"/><circle cx="1630.7" cy="583.3" r="5.6"/><circle cx="1648.3" cy="583.3" r="5.6"/><circle cx="1666.0" cy="583.3" r="5.6"/><circle cx="1683.8" cy="583.3" r="5.6"/><circle cx="1701.4" cy="583.3" r="5.6"/><circle cx="1719.2" cy="583.3" r="5.6"/><circle cx="1736.8" cy="583.3" r="5.6"/><circle cx="1447.3" cy="592.8" r="5.6"/><circle cx="1465.0" cy="592.8" r="5.6"/><circle cx="1482.8" cy="592.8" r="5.6"/><circle cx="1500.4" cy="592.8" r="5.6"/><circle cx="1518.2" cy="592.8" r="5.6"/><circle cx="1535.8" cy="592.8" r="5.6"/><circle cx="1553.5" cy="592.8" r="5.6"/><circle cx="1571.2" cy="592.8" r="5.6"/><circle cx="1586.1" cy="592.8" r="5.6"/><circle cx="1598.1" cy="592.8" r="5.6"/><circle cx="1612.9" cy="592.8" r="5.6"/><circle cx="1630.7" cy="592.8" r="5.6"/><circle cx="1648.3" cy="592.8" r="5.6"/><circle cx="1666.0" cy="592.8" r="5.6"/><circle cx="1683.8" cy="592.8" r="5.6"/><circle cx="1701.4" cy="592.8" r="5.6"/><circle cx="1719.2" cy="592.8" r="5.6"/><circle cx="1736.8" cy="592.8" r="5.6"/><circle cx="1453.6" cy="602.2" r="5.6"/><circle cx="1471.3" cy="602.2" r="5.6"/><circle cx="1489.0" cy="602.2" r="5.6"/><circle cx="1506.7" cy="602.2" r="5.6"/><circle cx="1524.4" cy="602.2" r="5.6"/><circle cx="1542.1" cy="602.2" r="5.6"/><circle cx="1559.8" cy="602.2" r="5.6"/><circle cx="1577.5" cy="602.2" r="5.6"/><circle cx="1592.1" cy="602.2" r="5.6"/><circle cx="1606.7" cy="602.2" r="5.6"/><circle cx="1624.4" cy="602.2" r="5.6"/><circle cx="1642.1" cy="602.2" r="5.6"/><circle cx="1659.8" cy="602.2" r="5.6"/><circle cx="1677.5" cy="602.2" r="5.6"/><circle cx="1695.2" cy="602.2" r="5.6"/><circle cx="1712.9" cy="602.2" r="5.6"/><circle cx="1730.6" cy="602.2" r="5.6"/><circle cx="1435.9" cy="611.6" r="5.6"/><circle cx="1453.6" cy="611.6" r="5.6"/><circle cx="1471.3" cy="611.6" r="5.6"/><circle cx="1489.0" cy="611.6" r="5.6"/><circle cx="1506.7" cy="611.6" r="5.6"/><circle cx="1524.4" cy="611.6" r="5.6"/><circle cx="1542.1" cy="611.6" r="5.6"/><circle cx="1559.8" cy="611.6" r="5.6"/><circle cx="1577.5" cy="611.6" r="5.6"/><circle cx="1592.1" cy="611.6" r="5.6"/><circle cx="1606.7" cy="611.6" r="5.6"/><circle cx="1624.4" cy="611.6" r="5.6"/><circle cx="1642.1" cy="611.6" r="5.6"/><circle cx="1659.8" cy="611.6" r="5.6"/><circle cx="1677.5" cy="611.6" r="5.6"/><circle cx="1695.2" cy="611.6" r="5.6"/><circle cx="1712.9" cy="611.6" r="5.6"/><circle cx="1730.6" cy="611.6" r="5.6"/><circle cx="1748.3" cy="611.6" r="5.6"/><circle cx="1441.7" cy="621.1" r="5.6"/><circle cx="1459.3" cy="621.1" r="5.6"/><circle cx="1477.0" cy="621.1" r="5.6"/><circle cx="1494.8" cy="621.1" r="5.6"/><circle cx="1512.4" cy="621.1" r="5.6"/><circle cx="1530.2" cy="621.1" r="5.6"/><circle cx="1547.8" cy="621.1" r="5.6"/><circle cx="1565.5" cy="621.1" r="5.6"/><circle cx="1583.2" cy="621.1" r="5.6"/><circle cx="1600.9" cy="621.1" r="5.6"/><circle cx="1618.7" cy="621.1" r="5.6"/><circle cx="1636.3" cy="621.1" r="5.6"/><circle cx="1654.0" cy="621.1" r="5.6"/><circle cx="1671.8" cy="621.1" r="5.6"/><circle cx="1689.4" cy="621.1" r="5.6"/><circle cx="1707.2" cy="621.1" r="5.6"/><circle cx="1724.8" cy="621.1" r="5.6"/><circle cx="1742.5" cy="621.1" r="5.6"/><circle cx="1441.7" cy="630.5" r="5.6"/><circle cx="1459.3" cy="630.5" r="5.6"/><circle cx="1477.0" cy="630.5" r="5.6"/><circle cx="1494.8" cy="630.5" r="5.6"/><circle cx="1512.4" cy="630.5" r="5.6"/><circle cx="1530.2" cy="630.5" r="5.6"/><circle cx="1547.8" cy="630.5" r="5.6"/><circle cx="1565.5" cy="630.5" r="5.6"/><circle cx="1583.2" cy="630.5" r="5.6"/><circle cx="1600.9" cy="630.5" r="5.6"/><circle cx="1618.7" cy="630.5" r="5.6"/><circle cx="1636.3" cy="630.5" r="5.6"/><circle cx="1654.0" cy="630.5" r="5.6"/><circle cx="1671.8" cy="630.5" r="5.6"/><circle cx="1689.4" cy="630.5" r="5.6"/><circle cx="1707.2" cy="630.5" r="5.6"/><circle cx="1724.8" cy="630.5" r="5.6"/><circle cx="1742.5" cy="630.5" r="5.6"/><circle cx="1429.7" cy="639.9" r="5.6"/><circle cx="1447.3" cy="639.9" r="5.6"/><circle cx="1465.0" cy="639.9" r="5.6"/><circle cx="1482.8" cy="639.9" r="5.6"/><circle cx="1500.4" cy="639.9" r="5.6"/><circle cx="1518.2" cy="639.9" r="5.6"/><circle cx="1535.8" cy="639.9" r="5.6"/><circle cx="1553.5" cy="639.9" r="5.6"/><circle cx="1571.2" cy="639.9" r="5.6"/><circle cx="1586.1" cy="639.9" r="5.6"/><circle cx="1598.1" cy="639.9" r="5.6"/><circle cx="1612.9" cy="639.9" r="5.6"/><circle cx="1630.7" cy="639.9" r="5.6"/><circle cx="1648.3" cy="639.9" r="5.6"/><circle cx="1666.0" cy="639.9" r="5.6"/><circle cx="1683.8" cy="639.9" r="5.6"/><circle cx="1701.4" cy="639.9" r="5.6"/><circle cx="1719.2" cy="639.9" r="5.6"/><circle cx="1736.8" cy="639.9" r="5.6"/><circle cx="1754.5" cy="639.9" r="5.6"/><circle cx="1447.3" cy="649.4" r="5.6"/><circle cx="1465.0" cy="649.4" r="5.6"/><circle cx="1482.8" cy="649.4" r="5.6"/><circle cx="1500.4" cy="649.4" r="5.6"/><circle cx="1518.2" cy="649.4" r="5.6"/><circle cx="1535.8" cy="649.4" r="5.6"/><circle cx="1553.5" cy="649.4" r="5.6"/><circle cx="1571.2" cy="649.4" r="5.6"/><circle cx="1586.1" cy="649.4" r="5.6"/><circle cx="1598.1" cy="649.4" r="5.6"/><circle cx="1612.9" cy="649.4" r="5.6"/><circle cx="1630.7" cy="649.4" r="5.6"/><circle cx="1648.3" cy="649.4" r="5.6"/><circle cx="1666.0" cy="649.4" r="5.6"/><circle cx="1683.8" cy="649.4" r="5.6"/><circle cx="1701.4" cy="649.4" r="5.6"/><circle cx="1719.2" cy="649.4" r="5.6"/><circle cx="1736.8" cy="649.4" r="5.6"/><circle cx="1435.9" cy="658.8" r="5.6"/><circle cx="1453.6" cy="658.8" r="5.6"/><circle cx="1471.3" cy="658.8" r="5.6"/><circle cx="1489.0" cy="658.8" r="5.6"/><circle cx="1506.7" cy="658.8" r="5.6"/><circle cx="1524.4" cy="658.8" r="5.6"/><circle cx="1542.1" cy="658.8" r="5.6"/><circle cx="1559.8" cy="658.8" r="5.6"/><circle cx="1577.5" cy="658.8" r="5.6"/><circle cx="1592.1" cy="658.8" r="5.6"/><circle cx="1606.7" cy="658.8" r="5.6"/><circle cx="1624.4" cy="658.8" r="5.6"/><circle cx="1642.1" cy="658.8" r="5.6"/><circle cx="1659.8" cy="658.8" r="5.6"/><circle cx="1677.5" cy="658.8" r="5.6"/><circle cx="1695.2" cy="658.8" r="5.6"/><circle cx="1712.9" cy="658.8" r="5.6"/><circle cx="1730.6" cy="658.8" r="5.6"/><circle cx="1748.3" cy="658.8" r="5.6"/><circle cx="1453.6" cy="668.2" r="5.6"/><circle cx="1471.3" cy="668.2" r="5.6"/><circle cx="1489.0" cy="668.2" r="5.6"/><circle cx="1506.7" cy="668.2" r="5.6"/><circle cx="1524.4" cy="668.2" r="5.6"/><circle cx="1542.1" cy="668.2" r="5.6"/><circle cx="1559.8" cy="668.2" r="5.6"/><circle cx="1577.5" cy="668.2" r="5.6"/><circle cx="1592.1" cy="668.2" r="5.6"/><circle cx="1606.7" cy="668.2" r="5.6"/><circle cx="1624.4" cy="668.2" r="5.6"/><circle cx="1642.1" cy="668.2" r="5.6"/><circle cx="1659.8" cy="668.2" r="5.6"/><circle cx="1677.5" cy="668.2" r="5.6"/><circle cx="1695.2" cy="668.2" r="5.6"/><circle cx="1712.9" cy="668.2" r="5.6"/><circle cx="1730.6" cy="668.2" r="5.6"/><circle cx="1441.7" cy="677.6" r="5.6"/><circle cx="1459.3" cy="677.6" r="5.6"/><circle cx="1477.0" cy="677.6" r="5.6"/><circle cx="1494.8" cy="677.6" r="5.6"/><circle cx="1512.4" cy="677.6" r="5.6"/><circle cx="1530.2" cy="677.6" r="5.6"/><circle cx="1547.8" cy="677.6" r="5.6"/><circle cx="1565.5" cy="677.6" r="5.6"/><circle cx="1583.2" cy="677.6" r="5.6"/><circle cx="1600.9" cy="677.6" r="5.6"/><circle cx="1618.7" cy="677.6" r="5.6"/><circle cx="1636.3" cy="677.6" r="5.6"/><circle cx="1654.0" cy="677.6" r="5.6"/><circle cx="1671.8" cy="677.6" r="5.6"/><circle cx="1689.4" cy="677.6" r="5.6"/><circle cx="1707.2" cy="677.6" r="5.6"/><circle cx="1724.8" cy="677.6" r="5.6"/><circle cx="1742.5" cy="677.6" r="5.6"/><circle cx="1459.3" cy="687.1" r="5.6"/><circle cx="1477.0" cy="687.1" r="5.6"/><circle cx="1494.8" cy="687.1" r="5.6"/><circle cx="1512.4" cy="687.1" r="5.6"/><circle cx="1530.2" cy="687.1" r="5.6"/><circle cx="1547.8" cy="687.1" r="5.6"/><circle cx="1565.5" cy="687.1" r="5.6"/><circle cx="1583.2" cy="687.1" r="5.6"/><circle cx="1600.9" cy="687.1" r="5.6"/><circle cx="1618.7" cy="687.1" r="5.6"/><circle cx="1636.3" cy="687.1" r="5.6"/><circle cx="1654.0" cy="687.1" r="5.6"/><circle cx="1671.8" cy="687.1" r="5.6"/><circle cx="1689.4" cy="687.1" r="5.6"/><circle cx="1707.2" cy="687.1" r="5.6"/><circle cx="1724.8" cy="687.1" r="5.6"/><circle cx="1447.3" cy="696.5" r="5.6"/><circle cx="1465.0" cy="696.5" r="5.6"/><circle cx="1482.8" cy="696.5" r="5.6"/><circle cx="1500.4" cy="696.5" r="5.6"/><circle cx="1518.2" cy="696.5" r="5.6"/><circle cx="1535.8" cy="696.5" r="5.6"/><circle cx="1553.5" cy="696.5" r="5.6"/><circle cx="1571.2" cy="696.5" r="5.6"/><circle cx="1586.1" cy="696.5" r="5.6"/><circle cx="1598.1" cy="696.5" r="5.6"/><circle cx="1612.9" cy="696.5" r="5.6"/><circle cx="1630.7" cy="696.5" r="5.6"/><circle cx="1648.3" cy="696.5" r="5.6"/><circle cx="1666.0" cy="696.5" r="5.6"/><circle cx="1683.8" cy="696.5" r="5.6"/><circle cx="1701.4" cy="696.5" r="5.6"/><circle cx="1719.2" cy="696.5" r="5.6"/><circle cx="1736.8" cy="696.5" r="5.6"/><circle cx="1465.0" cy="705.9" r="5.6"/><circle cx="1482.8" cy="705.9" r="5.6"/><circle cx="1500.4" cy="705.9" r="5.6"/><circle cx="1518.2" cy="705.9" r="5.6"/><circle cx="1535.8" cy="705.9" r="5.6"/><circle cx="1553.5" cy="705.9" r="5.6"/><circle cx="1571.2" cy="705.9" r="5.6"/><circle cx="1586.1" cy="705.9" r="5.6"/><circle cx="1598.1" cy="705.9" r="5.6"/><circle cx="1612.9" cy="705.9" r="5.6"/><circle cx="1630.7" cy="705.9" r="5.6"/><circle cx="1648.3" cy="705.9" r="5.6"/><circle cx="1666.0" cy="705.9" r="5.6"/><circle cx="1683.8" cy="705.9" r="5.6"/><circle cx="1701.4" cy="705.9" r="5.6"/><circle cx="1719.2" cy="705.9" r="5.6"/><circle cx="1453.6" cy="715.4" r="5.6"/><circle cx="1471.3" cy="715.4" r="5.6"/><circle cx="1489.0" cy="715.4" r="5.6"/><circle cx="1506.7" cy="715.4" r="5.6"/><circle cx="1524.4" cy="715.4" r="5.6"/><circle cx="1542.1" cy="715.4" r="5.6"/><circle cx="1559.8" cy="715.4" r="5.6"/><circle cx="1577.5" cy="715.4" r="5.6"/><circle cx="1592.1" cy="715.4" r="5.6"/><circle cx="1606.7" cy="715.4" r="5.6"/><circle cx="1624.4" cy="715.4" r="5.6"/><circle cx="1642.1" cy="715.4" r="5.6"/><circle cx="1659.8" cy="715.4" r="5.6"/><circle cx="1677.5" cy="715.4" r="5.6"/><circle cx="1695.2" cy="715.4" r="5.6"/><circle cx="1712.9" cy="715.4" r="5.6"/><circle cx="1730.6" cy="715.4" r="5.6"/><circle cx="1471.3" cy="724.8" r="5.6"/><circle cx="1489.0" cy="724.8" r="5.6"/><circle cx="1506.7" cy="724.8" r="5.6"/><circle cx="1524.4" cy="724.8" r="5.6"/><circle cx="1542.1" cy="724.8" r="5.6"/><circle cx="1559.8" cy="724.8" r="5.6"/><circle cx="1577.5" cy="724.8" r="5.6"/><circle cx="1592.1" cy="724.8" r="5.6"/><circle cx="1606.7" cy="724.8" r="5.6"/><circle cx="1624.4" cy="724.8" r="5.6"/><circle cx="1642.1" cy="724.8" r="5.6"/><circle cx="1659.8" cy="724.8" r="5.6"/><circle cx="1677.5" cy="724.8" r="5.6"/><circle cx="1695.2" cy="724.8" r="5.6"/><circle cx="1712.9" cy="724.8" r="5.6"/><circle cx="1459.3" cy="734.2" r="5.6"/><circle cx="1477.0" cy="734.2" r="5.6"/><circle cx="1494.8" cy="734.2" r="5.6"/><circle cx="1512.4" cy="734.2" r="5.6"/><circle cx="1530.2" cy="734.2" r="5.6"/><circle cx="1547.8" cy="734.2" r="5.6"/><circle cx="1565.5" cy="734.2" r="5.6"/><circle cx="1583.2" cy="734.2" r="5.6"/><circle cx="1600.9" cy="734.2" r="5.6"/><circle cx="1618.7" cy="734.2" r="5.6"/><circle cx="1636.3" cy="734.2" r="5.6"/><circle cx="1654.0" cy="734.2" r="5.6"/><circle cx="1671.8" cy="734.2" r="5.6"/><circle cx="1689.4" cy="734.2" r="5.6"/><circle cx="1707.2" cy="734.2" r="5.6"/><circle cx="1724.8" cy="734.2" r="5.6"/><circle cx="1477.0" cy="743.7" r="5.6"/><circle cx="1494.8" cy="743.7" r="5.6"/><circle cx="1512.4" cy="743.7" r="5.6"/><circle cx="1530.2" cy="743.7" r="5.6"/><circle cx="1547.8" cy="743.7" r="5.6"/><circle cx="1565.5" cy="743.7" r="5.6"/><circle cx="1583.2" cy="743.7" r="5.6"/><circle cx="1600.9" cy="743.7" r="5.6"/><circle cx="1618.7" cy="743.7" r="5.6"/><circle cx="1636.3" cy="743.7" r="5.6"/><circle cx="1654.0" cy="743.7" r="5.6"/><circle cx="1671.8" cy="743.7" r="5.6"/><circle cx="1689.4" cy="743.7" r="5.6"/><circle cx="1707.2" cy="743.7" r="5.6"/><circle cx="1465.0" cy="753.1" r="5.6"/><circle cx="1482.8" cy="753.1" r="5.6"/><circle cx="1500.4" cy="753.1" r="5.6"/><circle cx="1518.2" cy="753.1" r="5.6"/><circle cx="1535.8" cy="753.1" r="5.6"/><circle cx="1553.5" cy="753.1" r="5.6"/><circle cx="1571.2" cy="753.1" r="5.6"/><circle cx="1586.1" cy="753.1" r="5.6"/><circle cx="1598.1" cy="753.1" r="5.6"/><circle cx="1612.9" cy="753.1" r="5.6"/><circle cx="1630.7" cy="753.1" r="5.6"/><circle cx="1648.3" cy="753.1" r="5.6"/><circle cx="1666.0" cy="753.1" r="5.6"/><circle cx="1683.8" cy="753.1" r="5.6"/><circle cx="1701.4" cy="753.1" r="5.6"/><circle cx="1719.2" cy="753.1" r="5.6"/><circle cx="1482.8" cy="762.5" r="5.6"/><circle cx="1500.4" cy="762.5" r="5.6"/><circle cx="1518.2" cy="762.5" r="5.6"/><circle cx="1535.8" cy="762.5" r="5.6"/><circle cx="1553.5" cy="762.5" r="5.6"/><circle cx="1571.2" cy="762.5" r="5.6"/><circle cx="1586.1" cy="762.5" r="5.6"/><circle cx="1598.1" cy="762.5" r="5.6"/><circle cx="1612.9" cy="762.5" r="5.6"/><circle cx="1630.7" cy="762.5" r="5.6"/><circle cx="1648.3" cy="762.5" r="5.6"/><circle cx="1666.0" cy="762.5" r="5.6"/><circle cx="1683.8" cy="762.5" r="5.6"/><circle cx="1701.4" cy="762.5" r="5.6"/><circle cx="1471.3" cy="771.9" r="5.6"/><circle cx="1489.0" cy="771.9" r="5.6"/><circle cx="1506.7" cy="771.9" r="5.6"/><circle cx="1524.4" cy="771.9" r="5.6"/><circle cx="1542.1" cy="771.9" r="5.6"/><circle cx="1559.8" cy="771.9" r="5.6"/><circle cx="1577.5" cy="771.9" r="5.6"/><circle cx="1592.1" cy="771.9" r="5.6"/><circle cx="1606.7" cy="771.9" r="5.6"/><circle cx="1624.4" cy="771.9" r="5.6"/><circle cx="1642.1" cy="771.9" r="5.6"/><circle cx="1659.8" cy="771.9" r="5.6"/><circle cx="1677.5" cy="771.9" r="5.6"/><circle cx="1695.2" cy="771.9" r="5.6"/><circle cx="1712.9" cy="771.9" r="5.6"/><circle cx="1489.0" cy="781.4" r="5.6"/><circle cx="1506.7" cy="781.4" r="5.6"/><circle cx="1524.4" cy="781.4" r="5.6"/><circle cx="1542.1" cy="781.4" r="5.6"/><circle cx="1559.8" cy="781.4" r="5.6"/><circle cx="1577.5" cy="781.4" r="5.6"/><circle cx="1592.1" cy="781.4" r="5.6"/><circle cx="1606.7" cy="781.4" r="5.6"/><circle cx="1624.4" cy="781.4" r="5.6"/><circle cx="1642.1" cy="781.4" r="5.6"/><circle cx="1659.8" cy="781.4" r="5.6"/><circle cx="1677.5" cy="781.4" r="5.6"/><circle cx="1695.2" cy="781.4" r="5.6"/><circle cx="1477.0" cy="790.8" r="5.6"/><circle cx="1494.8" cy="790.8" r="5.6"/><circle cx="1512.4" cy="790.8" r="5.6"/><circle cx="1530.2" cy="790.8" r="5.6"/><circle cx="1547.8" cy="790.8" r="5.6"/><circle cx="1565.5" cy="790.8" r="5.6"/><circle cx="1583.2" cy="790.8" r="5.6"/><circle cx="1600.9" cy="790.8" r="5.6"/><circle cx="1618.7" cy="790.8" r="5.6"/><circle cx="1636.3" cy="790.8" r="5.6"/><circle cx="1654.0" cy="790.8" r="5.6"/><circle cx="1671.8" cy="790.8" r="5.6"/><circle cx="1689.4" cy="790.8" r="5.6"/><circle cx="1707.2" cy="790.8" r="5.6"/><circle cx="1494.8" cy="800.2" r="5.6"/><circle cx="1512.4" cy="800.2" r="5.6"/><circle cx="1530.2" cy="800.2" r="5.6"/><circle cx="1547.8" cy="800.2" r="5.6"/><circle cx="1565.5" cy="800.2" r="5.6"/><circle cx="1583.2" cy="800.2" r="5.6"/><circle cx="1600.9" cy="800.2" r="5.6"/><circle cx="1618.7" cy="800.2" r="5.6"/><circle cx="1636.3" cy="800.2" r="5.6"/><circle cx="1654.0" cy="800.2" r="5.6"/><circle cx="1671.8" cy="800.2" r="5.6"/><circle cx="1689.4" cy="800.2" r="5.6"/><circle cx="1482.8" cy="809.7" r="5.6"/><circle cx="1500.4" cy="809.7" r="5.6"/><circle cx="1518.2" cy="809.7" r="5.6"/><circle cx="1535.8" cy="809.7" r="5.6"/><circle cx="1553.5" cy="809.7" r="5.6"/><circle cx="1571.2" cy="809.7" r="5.6"/><circle cx="1586.1" cy="809.7" r="5.6"/><circle cx="1598.1" cy="809.7" r="5.6"/><circle cx="1612.9" cy="809.7" r="5.6"/><circle cx="1630.7" cy="809.7" r="5.6"/><circle cx="1648.3" cy="809.7" r="5.6"/><circle cx="1666.0" cy="809.7" r="5.6"/><circle cx="1683.8" cy="809.7" r="5.6"/><circle cx="1701.4" cy="809.7" r="5.6"/><circle cx="1500.4" cy="819.1" r="5.6"/><circle cx="1518.2" cy="819.1" r="5.6"/><circle cx="1535.8" cy="819.1" r="5.6"/><circle cx="1553.5" cy="819.1" r="5.6"/><circle cx="1571.2" cy="819.1" r="5.6"/><circle cx="1586.1" cy="819.1" r="5.6"/><circle cx="1598.1" cy="819.1" r="5.6"/><circle cx="1612.9" cy="819.1" r="5.6"/><circle cx="1630.7" cy="819.1" r="5.6"/><circle cx="1648.3" cy="819.1" r="5.6"/><circle cx="1666.0" cy="819.1" r="5.6"/><circle cx="1683.8" cy="819.1" r="5.6"/><circle cx="1489.0" cy="828.5" r="5.6"/><circle cx="1506.7" cy="828.5" r="5.6"/><circle cx="1524.4" cy="828.5" r="5.6"/><circle cx="1542.1" cy="828.5" r="5.6"/><circle cx="1559.8" cy="828.5" r="5.6"/><circle cx="1577.5" cy="828.5" r="5.6"/><circle cx="1592.1" cy="828.5" r="5.6"/><circle cx="1606.7" cy="828.5" r="5.6"/><circle cx="1624.4" cy="828.5" r="5.6"/><circle cx="1642.1" cy="828.5" r="5.6"/><circle cx="1659.8" cy="828.5" r="5.6"/><circle cx="1677.5" cy="828.5" r="5.6"/><circle cx="1695.2" cy="828.5" r="5.6"/><circle cx="1506.7" cy="838.0" r="5.6"/><circle cx="1524.4" cy="838.0" r="5.6"/><circle cx="1542.1" cy="838.0" r="5.6"/><circle cx="1559.8" cy="838.0" r="5.6"/><circle cx="1577.5" cy="838.0" r="5.6"/><circle cx="1592.1" cy="838.0" r="5.6"/><circle cx="1606.7" cy="838.0" r="5.6"/><circle cx="1624.4" cy="838.0" r="5.6"/><circle cx="1642.1" cy="838.0" r="5.6"/><circle cx="1659.8" cy="838.0" r="5.6"/><circle cx="1677.5" cy="838.0" r="5.6"/><circle cx="1494.8" cy="847.4" r="5.6"/><circle cx="1512.4" cy="847.4" r="5.6"/><circle cx="1530.2" cy="847.4" r="5.6"/><circle cx="1547.8" cy="847.4" r="5.6"/><circle cx="1565.5" cy="847.4" r="5.6"/><circle cx="1583.2" cy="847.4" r="5.6"/><circle cx="1600.9" cy="847.4" r="5.6"/><circle cx="1618.7" cy="847.4" r="5.6"/><circle cx="1636.3" cy="847.4" r="5.6"/><circle cx="1654.0" cy="847.4" r="5.6"/><circle cx="1671.8" cy="847.4" r="5.6"/><circle cx="1689.4" cy="847.4" r="5.6"/><circle cx="1512.4" cy="856.8" r="5.6"/><circle cx="1530.2" cy="856.8" r="5.6"/><circle cx="1547.8" cy="856.8" r="5.6"/><circle cx="1565.5" cy="856.8" r="5.6"/><circle cx="1583.2" cy="856.8" r="5.6"/><circle cx="1600.9" cy="856.8" r="5.6"/><circle cx="1618.7" cy="856.8" r="5.6"/><circle cx="1636.3" cy="856.8" r="5.6"/><circle cx="1654.0" cy="856.8" r="5.6"/><circle cx="1671.8" cy="856.8" r="5.6"/><circle cx="1500.4" cy="866.2" r="5.6"/><circle cx="1518.2" cy="866.2" r="5.6"/><circle cx="1535.8" cy="866.2" r="5.6"/><circle cx="1553.5" cy="866.2" r="5.6"/><circle cx="1571.2" cy="866.2" r="5.6"/><circle cx="1586.1" cy="866.2" r="5.6"/><circle cx="1598.1" cy="866.2" r="5.6"/><circle cx="1612.9" cy="866.2" r="5.6"/><circle cx="1630.7" cy="866.2" r="5.6"/><circle cx="1648.3" cy="866.2" r="5.6"/><circle cx="1666.0" cy="866.2" r="5.6"/><circle cx="1683.8" cy="866.2" r="5.6"/><circle cx="1518.2" cy="875.7" r="5.6"/><circle cx="1535.8" cy="875.7" r="5.6"/><circle cx="1553.5" cy="875.7" r="5.6"/><circle cx="1571.2" cy="875.7" r="5.6"/><circle cx="1586.1" cy="875.7" r="5.6"/><circle cx="1598.1" cy="875.7" r="5.6"/><circle cx="1612.9" cy="875.7" r="5.6"/><circle cx="1630.7" cy="875.7" r="5.6"/><circle cx="1648.3" cy="875.7" r="5.6"/><circle cx="1666.0" cy="875.7" r="5.6"/><circle cx="1506.7" cy="885.1" r="5.6"/><circle cx="1524.4" cy="885.1" r="5.6"/><circle cx="1542.1" cy="885.1" r="5.6"/><circle cx="1559.8" cy="885.1" r="5.6"/><circle cx="1577.5" cy="885.1" r="5.6"/><circle cx="1592.1" cy="885.1" r="5.6"/><circle cx="1606.7" cy="885.1" r="5.6"/><circle cx="1624.4" cy="885.1" r="5.6"/><circle cx="1642.1" cy="885.1" r="5.6"/><circle cx="1659.8" cy="885.1" r="5.6"/><circle cx="1677.5" cy="885.1" r="5.6"/><circle cx="1524.4" cy="894.5" r="5.6"/><circle cx="1542.1" cy="894.5" r="5.6"/><circle cx="1559.8" cy="894.5" r="5.6"/><circle cx="1577.5" cy="894.5" r="5.6"/><circle cx="1592.1" cy="894.5" r="5.6"/><circle cx="1606.7" cy="894.5" r="5.6"/><circle cx="1624.4" cy="894.5" r="5.6"/><circle cx="1642.1" cy="894.5" r="5.6"/><circle cx="1659.8" cy="894.5" r="5.6"/><circle cx="1512.4" cy="904.0" r="5.6"/><circle cx="1530.2" cy="904.0" r="5.6"/><circle cx="1547.8" cy="904.0" r="5.6"/><circle cx="1565.5" cy="904.0" r="5.6"/><circle cx="1583.2" cy="904.0" r="5.6"/><circle cx="1600.9" cy="904.0" r="5.6"/><circle cx="1618.7" cy="904.0" r="5.6"/><circle cx="1636.3" cy="904.0" r="5.6"/><circle cx="1654.0" cy="904.0" r="5.6"/><circle cx="1671.8" cy="904.0" r="5.6"/><circle cx="1530.2" cy="913.4" r="5.6"/><circle cx="1547.8" cy="913.4" r="5.6"/><circle cx="1565.5" cy="913.4" r="5.6"/><circle cx="1583.2" cy="913.4" r="5.6"/><circle cx="1600.9" cy="913.4" r="5.6"/><circle cx="1618.7" cy="913.4" r="5.6"/><circle cx="1636.3" cy="913.4" r="5.6"/><circle cx="1654.0" cy="913.4" r="5.6"/><circle cx="1518.2" cy="922.8" r="5.6"/><circle cx="1535.8" cy="922.8" r="5.6"/><circle cx="1553.5" cy="922.8" r="5.6"/><circle cx="1571.2" cy="922.8" r="5.6"/><circle cx="1586.1" cy="922.8" r="5.6"/><circle cx="1598.1" cy="922.8" r="5.6"/><circle cx="1612.9" cy="922.8" r="5.6"/><circle cx="1630.7" cy="922.8" r="5.6"/><circle cx="1648.3" cy="922.8" r="5.6"/><circle cx="1666.0" cy="922.8" r="5.6"/><circle cx="1535.8" cy="932.3" r="5.6"/><circle cx="1553.5" cy="932.3" r="5.6"/><circle cx="1571.2" cy="932.3" r="5.6"/><circle cx="1586.1" cy="932.3" r="5.6"/><circle cx="1598.1" cy="932.3" r="5.6"/><circle cx="1612.9" cy="932.3" r="5.6"/><circle cx="1630.7" cy="932.3" r="5.6"/><circle cx="1648.3" cy="932.3" r="5.6"/><circle cx="1524.4" cy="941.7" r="5.6"/><circle cx="1542.1" cy="941.7" r="5.6"/><circle cx="1559.8" cy="941.7" r="5.6"/><circle cx="1577.5" cy="941.7" r="5.6"/><circle cx="1592.1" cy="941.7" r="5.6"/><circle cx="1606.7" cy="941.7" r="5.6"/><circle cx="1624.4" cy="941.7" r="5.6"/><circle cx="1642.1" cy="941.7" r="5.6"/><circle cx="1659.8" cy="941.7" r="5.6"/><circle cx="1542.1" cy="951.1" r="5.6"/><circle cx="1559.8" cy="951.1" r="5.6"/><circle cx="1577.5" cy="951.1" r="5.6"/><circle cx="1592.1" cy="951.1" r="5.6"/><circle cx="1606.7" cy="951.1" r="5.6"/><circle cx="1624.4" cy="951.1" r="5.6"/><circle cx="1642.1" cy="951.1" r="5.6"/><circle cx="1530.2" cy="960.5" r="5.6"/><circle cx="1547.8" cy="960.5" r="5.6"/><circle cx="1565.5" cy="960.5" r="5.6"/><circle cx="1583.2" cy="960.5" r="5.6"/><circle cx="1600.9" cy="960.5" r="5.6"/><circle cx="1618.7" cy="960.5" r="5.6"/><circle cx="1636.3" cy="960.5" r="5.6"/><circle cx="1654.0" cy="960.5" r="5.6"/><circle cx="1547.8" cy="970.0" r="5.6"/><circle cx="1565.5" cy="970.0" r="5.6"/><circle cx="1583.2" cy="970.0" r="5.6"/><circle cx="1600.9" cy="970.0" r="5.6"/><circle cx="1618.7" cy="970.0" r="5.6"/><circle cx="1636.3" cy="970.0" r="5.6"/><circle cx="1535.8" cy="979.4" r="5.6"/><circle cx="1553.5" cy="979.4" r="5.6"/><circle cx="1571.2" cy="979.4" r="5.6"/><circle cx="1586.1" cy="979.4" r="5.6"/><circle cx="1598.1" cy="979.4" r="5.6"/><circle cx="1612.9" cy="979.4" r="5.6"/><circle cx="1630.7" cy="979.4" r="5.6"/><circle cx="1648.3" cy="979.4" r="5.6"/><circle cx="1553.5" cy="988.8" r="5.6"/><circle cx="1571.2" cy="988.8" r="5.6"/><circle cx="1586.1" cy="988.8" r="5.6"/><circle cx="1598.1" cy="988.8" r="5.6"/><circle cx="1612.9" cy="988.8" r="5.6"/><circle cx="1630.7" cy="988.8" r="5.6"/><circle cx="1542.1" cy="998.3" r="5.6"/><circle cx="1559.8" cy="998.3" r="5.6"/><circle cx="1577.5" cy="998.3" r="5.6"/><circle cx="1592.1" cy="998.3" r="5.6"/><circle cx="1606.7" cy="998.3" r="5.6"/><circle cx="1624.4" cy="998.3" r="5.6"/><circle cx="1642.1" cy="998.3" r="5.6"/><circle cx="1559.8" cy="1007.7" r="5.6"/><circle cx="1577.5" cy="1007.7" r="5.6"/><circle cx="1592.1" cy="1007.7" r="5.6"/><circle cx="1606.7" cy="1007.7" r="5.6"/><circle cx="1624.4" cy="1007.7" r="5.6"/><circle cx="1547.8" cy="1017.1" r="5.6"/><circle cx="1565.5" cy="1017.1" r="5.6"/><circle cx="1583.2" cy="1017.1" r="5.6"/><circle cx="1600.9" cy="1017.1" r="5.6"/><circle cx="1618.7" cy="1017.1" r="5.6"/><circle cx="1636.3" cy="1017.1" r="5.6"/><circle cx="1565.5" cy="1026.6" r="5.6"/><circle cx="1583.2" cy="1026.6" r="5.6"/><circle cx="1600.9" cy="1026.6" r="5.6"/><circle cx="1618.7" cy="1026.6" r="5.6"/><circle cx="1553.5" cy="1036.0" r="5.6"/><circle cx="1571.2" cy="1036.0" r="5.6"/><circle cx="1586.1" cy="1036.0" r="5.6"/><circle cx="1598.1" cy="1036.0" r="5.6"/><circle cx="1612.9" cy="1036.0" r="5.6"/><circle cx="1630.7" cy="1036.0" r="5.6"/><circle cx="1571.2" cy="1045.4" r="5.6"/><circle cx="1586.1" cy="1045.4" r="5.6"/><circle cx="1598.1" cy="1045.4" r="5.6"/><circle cx="1612.9" cy="1045.4" r="5.6"/><circle cx="1559.8" cy="1054.8" r="5.6"/><circle cx="1577.5" cy="1054.8" r="5.6"/><circle cx="1592.1" cy="1054.8" r="5.6"/><circle cx="1606.7" cy="1054.8" r="5.6"/><circle cx="1624.4" cy="1054.8" r="5.6"/><circle cx="1577.5" cy="1064.3" r="5.6"/><circle cx="1592.1" cy="1064.3" r="5.6"/><circle cx="1606.7" cy="1064.3" r="5.6"/><circle cx="1565.5" cy="1073.7" r="5.6"/><circle cx="1583.2" cy="1073.7" r="5.6"/><circle cx="1600.9" cy="1073.7" r="5.6"/><circle cx="1618.7" cy="1073.7" r="5.6"/><circle cx="1583.2" cy="1083.1" r="5.6"/><circle cx="1600.9" cy="1083.1" r="5.6"/><circle cx="1571.2" cy="1092.6" r="5.6"/><circle cx="1586.1" cy="1092.6" r="5.6"/><circle cx="1598.1" cy="1092.6" r="5.6"/><circle cx="1612.9" cy="1092.6" r="5.6"/><circle cx="1586.1" cy="1102.0" r="5.6"/><circle cx="1598.1" cy="1102.0" r="5.6"/><circle cx="1577.5" cy="1111.4" r="5.6"/><circle cx="1592.1" cy="1111.4" r="5.6"/><circle cx="1606.7" cy="1111.4" r="5.6"/></g><g fill="url(#sph)"><circle cx="1568.6" cy="159.0" r="5.9"/><circle cx="1586.3" cy="159.0" r="5.9"/><circle cx="1597.8" cy="159.0" r="5.9"/><circle cx="1615.5" cy="159.0" r="5.9"/><circle cx="1574.4" cy="168.4" r="5.9"/><circle cx="1592.1" cy="168.4" r="5.9"/><circle cx="1609.8" cy="168.4" r="5.9"/><circle cx="1574.4" cy="177.9" r="5.9"/><circle cx="1592.1" cy="177.9" r="5.9"/><circle cx="1609.8" cy="177.9" r="5.9"/><circle cx="1562.4" cy="187.3" r="5.9"/><circle cx="1580.1" cy="187.3" r="5.9"/><circle cx="1592.1" cy="187.3" r="5.9"/><circle cx="1604.1" cy="187.3" r="5.9"/><circle cx="1621.8" cy="187.3" r="5.9"/><circle cx="1562.4" cy="196.7" r="5.9"/><circle cx="1580.1" cy="196.7" r="5.9"/><circle cx="1592.1" cy="196.7" r="5.9"/><circle cx="1604.1" cy="196.7" r="5.9"/><circle cx="1621.8" cy="196.7" r="5.9"/><circle cx="1568.6" cy="206.2" r="5.9"/><circle cx="1586.3" cy="206.2" r="5.9"/><circle cx="1597.8" cy="206.2" r="5.9"/><circle cx="1615.5" cy="206.2" r="5.9"/><circle cx="1550.9" cy="215.6" r="5.9"/><circle cx="1568.6" cy="215.6" r="5.9"/><circle cx="1586.3" cy="215.6" r="5.9"/><circle cx="1597.8" cy="215.6" r="5.9"/><circle cx="1615.5" cy="215.6" r="5.9"/><circle cx="1633.2" cy="215.6" r="5.9"/><circle cx="1556.7" cy="225.0" r="5.9"/><circle cx="1574.4" cy="225.0" r="5.9"/><circle cx="1592.1" cy="225.0" r="5.9"/><circle cx="1609.8" cy="225.0" r="5.9"/><circle cx="1627.5" cy="225.0" r="5.9"/><circle cx="1556.7" cy="234.4" r="5.9"/><circle cx="1574.4" cy="234.4" r="5.9"/><circle cx="1592.1" cy="234.4" r="5.9"/><circle cx="1609.8" cy="234.4" r="5.9"/><circle cx="1627.5" cy="234.4" r="5.9"/><circle cx="1544.7" cy="243.9" r="5.9"/><circle cx="1562.4" cy="243.9" r="5.9"/><circle cx="1580.1" cy="243.9" r="5.9"/><circle cx="1592.1" cy="243.9" r="5.9"/><circle cx="1604.1" cy="243.9" r="5.9"/><circle cx="1621.8" cy="243.9" r="5.9"/><circle cx="1639.5" cy="243.9" r="5.9"/><circle cx="1544.7" cy="253.3" r="5.9"/><circle cx="1562.4" cy="253.3" r="5.9"/><circle cx="1580.1" cy="253.3" r="5.9"/><circle cx="1592.1" cy="253.3" r="5.9"/><circle cx="1604.1" cy="253.3" r="5.9"/><circle cx="1621.8" cy="253.3" r="5.9"/><circle cx="1639.5" cy="253.3" r="5.9"/><circle cx="1550.9" cy="262.7" r="5.9"/><circle cx="1568.6" cy="262.7" r="5.9"/><circle cx="1586.3" cy="262.7" r="5.9"/><circle cx="1597.8" cy="262.7" r="5.9"/><circle cx="1615.5" cy="262.7" r="5.9"/><circle cx="1633.2" cy="262.7" r="5.9"/><circle cx="1533.2" cy="272.2" r="5.9"/><circle cx="1550.9" cy="272.2" r="5.9"/><circle cx="1568.6" cy="272.2" r="5.9"/><circle cx="1586.3" cy="272.2" r="5.9"/><circle cx="1597.8" cy="272.2" r="5.9"/><circle cx="1615.5" cy="272.2" r="5.9"/><circle cx="1633.2" cy="272.2" r="5.9"/><circle cx="1650.9" cy="272.2" r="5.9"/><circle cx="1539.0" cy="281.6" r="5.9"/><circle cx="1556.7" cy="281.6" r="5.9"/><circle cx="1574.4" cy="281.6" r="5.9"/><circle cx="1592.1" cy="281.6" r="5.9"/><circle cx="1609.8" cy="281.6" r="5.9"/><circle cx="1627.5" cy="281.6" r="5.9"/><circle cx="1645.2" cy="281.6" r="5.9"/><circle cx="1539.0" cy="291.0" r="5.9"/><circle cx="1556.7" cy="291.0" r="5.9"/><circle cx="1574.4" cy="291.0" r="5.9"/><circle cx="1592.1" cy="291.0" r="5.9"/><circle cx="1609.8" cy="291.0" r="5.9"/><circle cx="1627.5" cy="291.0" r="5.9"/><circle cx="1645.2" cy="291.0" r="5.9"/><circle cx="1527.0" cy="300.4" r="5.9"/><circle cx="1544.7" cy="300.4" r="5.9"/><circle cx="1562.4" cy="300.4" r="5.9"/><circle cx="1580.1" cy="300.4" r="5.9"/><circle cx="1592.1" cy="300.4" r="5.9"/><circle cx="1604.1" cy="300.4" r="5.9"/><circle cx="1621.8" cy="300.4" r="5.9"/><circle cx="1639.5" cy="300.4" r="5.9"/><circle cx="1657.2" cy="300.4" r="5.9"/><circle cx="1527.0" cy="309.9" r="5.9"/><circle cx="1544.7" cy="309.9" r="5.9"/><circle cx="1562.4" cy="309.9" r="5.9"/><circle cx="1580.1" cy="309.9" r="5.9"/><circle cx="1592.1" cy="309.9" r="5.9"/><circle cx="1604.1" cy="309.9" r="5.9"/><circle cx="1621.8" cy="309.9" r="5.9"/><circle cx="1639.5" cy="309.9" r="5.9"/><circle cx="1657.2" cy="309.9" r="5.9"/><circle cx="1533.2" cy="319.3" r="5.9"/><circle cx="1550.9" cy="319.3" r="5.9"/><circle cx="1568.6" cy="319.3" r="5.9"/><circle cx="1586.3" cy="319.3" r="5.9"/><circle cx="1597.8" cy="319.3" r="5.9"/><circle cx="1615.5" cy="319.3" r="5.9"/><circle cx="1633.2" cy="319.3" r="5.9"/><circle cx="1650.9" cy="319.3" r="5.9"/><circle cx="1515.5" cy="328.7" r="5.9"/><circle cx="1533.2" cy="328.7" r="5.9"/><circle cx="1550.9" cy="328.7" r="5.9"/><circle cx="1568.6" cy="328.7" r="5.9"/><circle cx="1586.3" cy="328.7" r="5.9"/><circle cx="1597.8" cy="328.7" r="5.9"/><circle cx="1615.5" cy="328.7" r="5.9"/><circle cx="1633.2" cy="328.7" r="5.9"/><circle cx="1650.9" cy="328.7" r="5.9"/><circle cx="1668.6" cy="328.7" r="5.9"/><circle cx="1521.3" cy="338.2" r="5.9"/><circle cx="1539.0" cy="338.2" r="5.9"/><circle cx="1556.7" cy="338.2" r="5.9"/><circle cx="1574.4" cy="338.2" r="5.9"/><circle cx="1592.1" cy="338.2" r="5.9"/><circle cx="1609.8" cy="338.2" r="5.9"/><circle cx="1627.5" cy="338.2" r="5.9"/><circle cx="1645.2" cy="338.2" r="5.9"/><circle cx="1662.9" cy="338.2" r="5.9"/><circle cx="1521.3" cy="347.6" r="5.9"/><circle cx="1539.0" cy="347.6" r="5.9"/><circle cx="1556.7" cy="347.6" r="5.9"/><circle cx="1574.4" cy="347.6" r="5.9"/><circle cx="1592.1" cy="347.6" r="5.9"/><circle cx="1609.8" cy="347.6" r="5.9"/><circle cx="1627.5" cy="347.6" r="5.9"/><circle cx="1645.2" cy="347.6" r="5.9"/><circle cx="1662.9" cy="347.6" r="5.9"/><circle cx="1509.3" cy="357.0" r="5.9"/><circle cx="1527.0" cy="357.0" r="5.9"/><circle cx="1544.7" cy="357.0" r="5.9"/><circle cx="1562.4" cy="357.0" r="5.9"/><circle cx="1580.1" cy="357.0" r="5.9"/><circle cx="1592.1" cy="357.0" r="5.9"/><circle cx="1604.1" cy="357.0" r="5.9"/><circle cx="1621.8" cy="357.0" r="5.9"/><circle cx="1639.5" cy="357.0" r="5.9"/><circle cx="1657.2" cy="357.0" r="5.9"/><circle cx="1674.9" cy="357.0" r="5.9"/><circle cx="1509.3" cy="366.5" r="5.9"/><circle cx="1527.0" cy="366.5" r="5.9"/><circle cx="1544.7" cy="366.5" r="5.9"/><circle cx="1562.4" cy="366.5" r="5.9"/><circle cx="1580.1" cy="366.5" r="5.9"/><circle cx="1592.1" cy="366.5" r="5.9"/><circle cx="1604.1" cy="366.5" r="5.9"/><circle cx="1621.8" cy="366.5" r="5.9"/><circle cx="1639.5" cy="366.5" r="5.9"/><circle cx="1657.2" cy="366.5" r="5.9"/><circle cx="1674.9" cy="366.5" r="5.9"/><circle cx="1515.5" cy="375.9" r="5.9"/><circle cx="1533.2" cy="375.9" r="5.9"/><circle cx="1550.9" cy="375.9" r="5.9"/><circle cx="1568.6" cy="375.9" r="5.9"/><circle cx="1586.3" cy="375.9" r="5.9"/><circle cx="1597.8" cy="375.9" r="5.9"/><circle cx="1615.5" cy="375.9" r="5.9"/><circle cx="1633.2" cy="375.9" r="5.9"/><circle cx="1650.9" cy="375.9" r="5.9"/><circle cx="1668.6" cy="375.9" r="5.9"/><circle cx="1497.8" cy="385.3" r="5.9"/><circle cx="1515.5" cy="385.3" r="5.9"/><circle cx="1533.2" cy="385.3" r="5.9"/><circle cx="1550.9" cy="385.3" r="5.9"/><circle cx="1568.6" cy="385.3" r="5.9"/><circle cx="1586.3" cy="385.3" r="5.9"/><circle cx="1597.8" cy="385.3" r="5.9"/><circle cx="1615.5" cy="385.3" r="5.9"/><circle cx="1633.2" cy="385.3" r="5.9"/><circle cx="1650.9" cy="385.3" r="5.9"/><circle cx="1668.6" cy="385.3" r="5.9"/><circle cx="1686.3" cy="385.3" r="5.9"/><circle cx="1503.6" cy="394.8" r="5.9"/><circle cx="1521.3" cy="394.8" r="5.9"/><circle cx="1539.0" cy="394.8" r="5.9"/><circle cx="1556.7" cy="394.8" r="5.9"/><circle cx="1574.4" cy="394.8" r="5.9"/><circle cx="1592.1" cy="394.8" r="5.9"/><circle cx="1609.8" cy="394.8" r="5.9"/><circle cx="1627.5" cy="394.8" r="5.9"/><circle cx="1645.2" cy="394.8" r="5.9"/><circle cx="1662.9" cy="394.8" r="5.9"/><circle cx="1680.6" cy="394.8" r="5.9"/><circle cx="1503.6" cy="404.2" r="5.9"/><circle cx="1521.3" cy="404.2" r="5.9"/><circle cx="1539.0" cy="404.2" r="5.9"/><circle cx="1556.7" cy="404.2" r="5.9"/><circle cx="1574.4" cy="404.2" r="5.9"/><circle cx="1592.1" cy="404.2" r="5.9"/><circle cx="1609.8" cy="404.2" r="5.9"/><circle cx="1627.5" cy="404.2" r="5.9"/><circle cx="1645.2" cy="404.2" r="5.9"/><circle cx="1662.9" cy="404.2" r="5.9"/><circle cx="1680.6" cy="404.2" r="5.9"/><circle cx="1491.6" cy="413.6" r="5.9"/><circle cx="1509.3" cy="413.6" r="5.9"/><circle cx="1527.0" cy="413.6" r="5.9"/><circle cx="1544.7" cy="413.6" r="5.9"/><circle cx="1562.4" cy="413.6" r="5.9"/><circle cx="1580.1" cy="413.6" r="5.9"/><circle cx="1592.1" cy="413.6" r="5.9"/><circle cx="1604.1" cy="413.6" r="5.9"/><circle cx="1621.8" cy="413.6" r="5.9"/><circle cx="1639.5" cy="413.6" r="5.9"/><circle cx="1657.2" cy="413.6" r="5.9"/><circle cx="1674.9" cy="413.6" r="5.9"/><circle cx="1692.6" cy="413.6" r="5.9"/><circle cx="1491.6" cy="423.0" r="5.9"/><circle cx="1509.3" cy="423.0" r="5.9"/><circle cx="1527.0" cy="423.0" r="5.9"/><circle cx="1544.7" cy="423.0" r="5.9"/><circle cx="1562.4" cy="423.0" r="5.9"/><circle cx="1580.1" cy="423.0" r="5.9"/><circle cx="1592.1" cy="423.0" r="5.9"/><circle cx="1604.1" cy="423.0" r="5.9"/><circle cx="1621.8" cy="423.0" r="5.9"/><circle cx="1639.5" cy="423.0" r="5.9"/><circle cx="1657.2" cy="423.0" r="5.9"/><circle cx="1674.9" cy="423.0" r="5.9"/><circle cx="1692.6" cy="423.0" r="5.9"/><circle cx="1497.8" cy="432.5" r="5.9"/><circle cx="1515.5" cy="432.5" r="5.9"/><circle cx="1533.2" cy="432.5" r="5.9"/><circle cx="1550.9" cy="432.5" r="5.9"/><circle cx="1568.6" cy="432.5" r="5.9"/><circle cx="1586.3" cy="432.5" r="5.9"/><circle cx="1597.8" cy="432.5" r="5.9"/><circle cx="1615.5" cy="432.5" r="5.9"/><circle cx="1633.2" cy="432.5" r="5.9"/><circle cx="1650.9" cy="432.5" r="5.9"/><circle cx="1668.6" cy="432.5" r="5.9"/><circle cx="1686.3" cy="432.5" r="5.9"/><circle cx="1480.1" cy="441.9" r="5.9"/><circle cx="1497.8" cy="441.9" r="5.9"/><circle cx="1515.5" cy="441.9" r="5.9"/><circle cx="1533.2" cy="441.9" r="5.9"/><circle cx="1550.9" cy="441.9" r="5.9"/><circle cx="1568.6" cy="441.9" r="5.9"/><circle cx="1586.3" cy="441.9" r="5.9"/><circle cx="1597.8" cy="441.9" r="5.9"/><circle cx="1615.5" cy="441.9" r="5.9"/><circle cx="1633.2" cy="441.9" r="5.9"/><circle cx="1650.9" cy="441.9" r="5.9"/><circle cx="1668.6" cy="441.9" r="5.9"/><circle cx="1686.3" cy="441.9" r="5.9"/><circle cx="1704.0" cy="441.9" r="5.9"/><circle cx="1485.9" cy="451.3" r="5.9"/><circle cx="1503.6" cy="451.3" r="5.9"/><circle cx="1521.3" cy="451.3" r="5.9"/><circle cx="1539.0" cy="451.3" r="5.9"/><circle cx="1556.7" cy="451.3" r="5.9"/><circle cx="1574.4" cy="451.3" r="5.9"/><circle cx="1592.1" cy="451.3" r="5.9"/><circle cx="1609.8" cy="451.3" r="5.9"/><circle cx="1627.5" cy="451.3" r="5.9"/><circle cx="1645.2" cy="451.3" r="5.9"/><circle cx="1662.9" cy="451.3" r="5.9"/><circle cx="1680.6" cy="451.3" r="5.9"/><circle cx="1698.3" cy="451.3" r="5.9"/><circle cx="1485.9" cy="460.8" r="5.9"/><circle cx="1503.6" cy="460.8" r="5.9"/><circle cx="1521.3" cy="460.8" r="5.9"/><circle cx="1539.0" cy="460.8" r="5.9"/><circle cx="1556.7" cy="460.8" r="5.9"/><circle cx="1574.4" cy="460.8" r="5.9"/><circle cx="1592.1" cy="460.8" r="5.9"/><circle cx="1609.8" cy="460.8" r="5.9"/><circle cx="1627.5" cy="460.8" r="5.9"/><circle cx="1645.2" cy="460.8" r="5.9"/><circle cx="1662.9" cy="460.8" r="5.9"/><circle cx="1680.6" cy="460.8" r="5.9"/><circle cx="1698.3" cy="460.8" r="5.9"/><circle cx="1473.9" cy="470.2" r="5.9"/><circle cx="1491.6" cy="470.2" r="5.9"/><circle cx="1509.3" cy="470.2" r="5.9"/><circle cx="1527.0" cy="470.2" r="5.9"/><circle cx="1544.7" cy="470.2" r="5.9"/><circle cx="1562.4" cy="470.2" r="5.9"/><circle cx="1580.1" cy="470.2" r="5.9"/><circle cx="1592.1" cy="470.2" r="5.9"/><circle cx="1604.1" cy="470.2" r="5.9"/><circle cx="1621.8" cy="470.2" r="5.9"/><circle cx="1639.5" cy="470.2" r="5.9"/><circle cx="1657.2" cy="470.2" r="5.9"/><circle cx="1674.9" cy="470.2" r="5.9"/><circle cx="1692.6" cy="470.2" r="5.9"/><circle cx="1710.3" cy="470.2" r="5.9"/><circle cx="1473.9" cy="479.6" r="5.9"/><circle cx="1491.6" cy="479.6" r="5.9"/><circle cx="1509.3" cy="479.6" r="5.9"/><circle cx="1527.0" cy="479.6" r="5.9"/><circle cx="1544.7" cy="479.6" r="5.9"/><circle cx="1562.4" cy="479.6" r="5.9"/><circle cx="1580.1" cy="479.6" r="5.9"/><circle cx="1592.1" cy="479.6" r="5.9"/><circle cx="1604.1" cy="479.6" r="5.9"/><circle cx="1621.8" cy="479.6" r="5.9"/><circle cx="1639.5" cy="479.6" r="5.9"/><circle cx="1657.2" cy="479.6" r="5.9"/><circle cx="1674.9" cy="479.6" r="5.9"/><circle cx="1692.6" cy="479.6" r="5.9"/><circle cx="1710.3" cy="479.6" r="5.9"/><circle cx="1480.1" cy="489.1" r="5.9"/><circle cx="1497.8" cy="489.1" r="5.9"/><circle cx="1515.5" cy="489.1" r="5.9"/><circle cx="1533.2" cy="489.1" r="5.9"/><circle cx="1550.9" cy="489.1" r="5.9"/><circle cx="1568.6" cy="489.1" r="5.9"/><circle cx="1586.3" cy="489.1" r="5.9"/><circle cx="1597.8" cy="489.1" r="5.9"/><circle cx="1615.5" cy="489.1" r="5.9"/><circle cx="1633.2" cy="489.1" r="5.9"/><circle cx="1650.9" cy="489.1" r="5.9"/><circle cx="1668.6" cy="489.1" r="5.9"/><circle cx="1686.3" cy="489.1" r="5.9"/><circle cx="1704.0" cy="489.1" r="5.9"/><circle cx="1462.4" cy="498.5" r="5.9"/><circle cx="1480.1" cy="498.5" r="5.9"/><circle cx="1497.8" cy="498.5" r="5.9"/><circle cx="1515.5" cy="498.5" r="5.9"/><circle cx="1533.2" cy="498.5" r="5.9"/><circle cx="1550.9" cy="498.5" r="5.9"/><circle cx="1568.6" cy="498.5" r="5.9"/><circle cx="1586.3" cy="498.5" r="5.9"/><circle cx="1597.8" cy="498.5" r="5.9"/><circle cx="1615.5" cy="498.5" r="5.9"/><circle cx="1633.2" cy="498.5" r="5.9"/><circle cx="1650.9" cy="498.5" r="5.9"/><circle cx="1668.6" cy="498.5" r="5.9"/><circle cx="1686.3" cy="498.5" r="5.9"/><circle cx="1704.0" cy="498.5" r="5.9"/><circle cx="1721.8" cy="498.5" r="5.9"/><circle cx="1468.2" cy="507.9" r="5.9"/><circle cx="1485.9" cy="507.9" r="5.9"/><circle cx="1503.6" cy="507.9" r="5.9"/><circle cx="1521.3" cy="507.9" r="5.9"/><circle cx="1539.0" cy="507.9" r="5.9"/><circle cx="1556.7" cy="507.9" r="5.9"/><circle cx="1574.4" cy="507.9" r="5.9"/><circle cx="1592.1" cy="507.9" r="5.9"/><circle cx="1609.8" cy="507.9" r="5.9"/><circle cx="1627.5" cy="507.9" r="5.9"/><circle cx="1645.2" cy="507.9" r="5.9"/><circle cx="1662.9" cy="507.9" r="5.9"/><circle cx="1680.6" cy="507.9" r="5.9"/><circle cx="1698.3" cy="507.9" r="5.9"/><circle cx="1716.0" cy="507.9" r="5.9"/><circle cx="1468.2" cy="517.3" r="5.9"/><circle cx="1485.9" cy="517.3" r="5.9"/><circle cx="1503.6" cy="517.3" r="5.9"/><circle cx="1521.3" cy="517.3" r="5.9"/><circle cx="1539.0" cy="517.3" r="5.9"/><circle cx="1556.7" cy="517.3" r="5.9"/><circle cx="1574.4" cy="517.3" r="5.9"/><circle cx="1592.1" cy="517.3" r="5.9"/><circle cx="1609.8" cy="517.3" r="5.9"/><circle cx="1627.5" cy="517.3" r="5.9"/><circle cx="1645.2" cy="517.3" r="5.9"/><circle cx="1662.9" cy="517.3" r="5.9"/><circle cx="1680.6" cy="517.3" r="5.9"/><circle cx="1698.3" cy="517.3" r="5.9"/><circle cx="1716.0" cy="517.3" r="5.9"/><circle cx="1456.2" cy="526.8" r="5.9"/><circle cx="1473.9" cy="526.8" r="5.9"/><circle cx="1491.6" cy="526.8" r="5.9"/><circle cx="1509.3" cy="526.8" r="5.9"/><circle cx="1527.0" cy="526.8" r="5.9"/><circle cx="1544.7" cy="526.8" r="5.9"/><circle cx="1562.4" cy="526.8" r="5.9"/><circle cx="1580.1" cy="526.8" r="5.9"/><circle cx="1592.1" cy="526.8" r="5.9"/><circle cx="1604.1" cy="526.8" r="5.9"/><circle cx="1621.8" cy="526.8" r="5.9"/><circle cx="1639.5" cy="526.8" r="5.9"/><circle cx="1657.2" cy="526.8" r="5.9"/><circle cx="1674.9" cy="526.8" r="5.9"/><circle cx="1692.6" cy="526.8" r="5.9"/><circle cx="1710.3" cy="526.8" r="5.9"/><circle cx="1728.0" cy="526.8" r="5.9"/><circle cx="1456.2" cy="536.2" r="5.9"/><circle cx="1473.9" cy="536.2" r="5.9"/><circle cx="1491.6" cy="536.2" r="5.9"/><circle cx="1509.3" cy="536.2" r="5.9"/><circle cx="1527.0" cy="536.2" r="5.9"/><circle cx="1544.7" cy="536.2" r="5.9"/><circle cx="1562.4" cy="536.2" r="5.9"/><circle cx="1580.1" cy="536.2" r="5.9"/><circle cx="1592.1" cy="536.2" r="5.9"/><circle cx="1604.1" cy="536.2" r="5.9"/><circle cx="1621.8" cy="536.2" r="5.9"/><circle cx="1639.5" cy="536.2" r="5.9"/><circle cx="1657.2" cy="536.2" r="5.9"/><circle cx="1674.9" cy="536.2" r="5.9"/><circle cx="1692.6" cy="536.2" r="5.9"/><circle cx="1710.3" cy="536.2" r="5.9"/><circle cx="1728.0" cy="536.2" r="5.9"/><circle cx="1462.4" cy="545.6" r="5.9"/><circle cx="1480.1" cy="545.6" r="5.9"/><circle cx="1497.8" cy="545.6" r="5.9"/><circle cx="1515.5" cy="545.6" r="5.9"/><circle cx="1533.2" cy="545.6" r="5.9"/><circle cx="1550.9" cy="545.6" r="5.9"/><circle cx="1568.6" cy="545.6" r="5.9"/><circle cx="1586.3" cy="545.6" r="5.9"/><circle cx="1597.8" cy="545.6" r="5.9"/><circle cx="1615.5" cy="545.6" r="5.9"/><circle cx="1633.2" cy="545.6" r="5.9"/><circle cx="1650.9" cy="545.6" r="5.9"/><circle cx="1668.6" cy="545.6" r="5.9"/><circle cx="1686.3" cy="545.6" r="5.9"/><circle cx="1704.0" cy="545.6" r="5.9"/><circle cx="1721.8" cy="545.6" r="5.9"/><circle cx="1444.8" cy="555.1" r="5.9"/><circle cx="1462.4" cy="555.1" r="5.9"/><circle cx="1480.1" cy="555.1" r="5.9"/><circle cx="1497.8" cy="555.1" r="5.9"/><circle cx="1515.5" cy="555.1" r="5.9"/><circle cx="1533.2" cy="555.1" r="5.9"/><circle cx="1550.9" cy="555.1" r="5.9"/><circle cx="1568.6" cy="555.1" r="5.9"/><circle cx="1586.3" cy="555.1" r="5.9"/><circle cx="1597.8" cy="555.1" r="5.9"/><circle cx="1615.5" cy="555.1" r="5.9"/><circle cx="1633.2" cy="555.1" r="5.9"/><circle cx="1650.9" cy="555.1" r="5.9"/><circle cx="1668.6" cy="555.1" r="5.9"/><circle cx="1686.3" cy="555.1" r="5.9"/><circle cx="1704.0" cy="555.1" r="5.9"/><circle cx="1721.8" cy="555.1" r="5.9"/><circle cx="1739.4" cy="555.1" r="5.9"/><circle cx="1450.5" cy="564.5" r="5.9"/><circle cx="1468.2" cy="564.5" r="5.9"/><circle cx="1485.9" cy="564.5" r="5.9"/><circle cx="1503.6" cy="564.5" r="5.9"/><circle cx="1521.3" cy="564.5" r="5.9"/><circle cx="1539.0" cy="564.5" r="5.9"/><circle cx="1556.7" cy="564.5" r="5.9"/><circle cx="1574.4" cy="564.5" r="5.9"/><circle cx="1592.1" cy="564.5" r="5.9"/><circle cx="1609.8" cy="564.5" r="5.9"/><circle cx="1627.5" cy="564.5" r="5.9"/><circle cx="1645.2" cy="564.5" r="5.9"/><circle cx="1662.9" cy="564.5" r="5.9"/><circle cx="1680.6" cy="564.5" r="5.9"/><circle cx="1698.3" cy="564.5" r="5.9"/><circle cx="1716.0" cy="564.5" r="5.9"/><circle cx="1733.7" cy="564.5" r="5.9"/><circle cx="1450.5" cy="573.9" r="5.9"/><circle cx="1468.2" cy="573.9" r="5.9"/><circle cx="1485.9" cy="573.9" r="5.9"/><circle cx="1503.6" cy="573.9" r="5.9"/><circle cx="1521.3" cy="573.9" r="5.9"/><circle cx="1539.0" cy="573.9" r="5.9"/><circle cx="1556.7" cy="573.9" r="5.9"/><circle cx="1574.4" cy="573.9" r="5.9"/><circle cx="1592.1" cy="573.9" r="5.9"/><circle cx="1609.8" cy="573.9" r="5.9"/><circle cx="1627.5" cy="573.9" r="5.9"/><circle cx="1645.2" cy="573.9" r="5.9"/><circle cx="1662.9" cy="573.9" r="5.9"/><circle cx="1680.6" cy="573.9" r="5.9"/><circle cx="1698.3" cy="573.9" r="5.9"/><circle cx="1716.0" cy="573.9" r="5.9"/><circle cx="1733.7" cy="573.9" r="5.9"/><circle cx="1438.5" cy="583.3" r="5.9"/><circle cx="1456.2" cy="583.3" r="5.9"/><circle cx="1473.9" cy="583.3" r="5.9"/><circle cx="1491.6" cy="583.3" r="5.9"/><circle cx="1509.3" cy="583.3" r="5.9"/><circle cx="1527.0" cy="583.3" r="5.9"/><circle cx="1544.7" cy="583.3" r="5.9"/><circle cx="1562.4" cy="583.3" r="5.9"/><circle cx="1580.1" cy="583.3" r="5.9"/><circle cx="1592.1" cy="583.3" r="5.9"/><circle cx="1604.1" cy="583.3" r="5.9"/><circle cx="1621.8" cy="583.3" r="5.9"/><circle cx="1639.5" cy="583.3" r="5.9"/><circle cx="1657.2" cy="583.3" r="5.9"/><circle cx="1674.9" cy="583.3" r="5.9"/><circle cx="1692.6" cy="583.3" r="5.9"/><circle cx="1710.3" cy="583.3" r="5.9"/><circle cx="1728.0" cy="583.3" r="5.9"/><circle cx="1745.7" cy="583.3" r="5.9"/><circle cx="1438.5" cy="592.8" r="5.9"/><circle cx="1456.2" cy="592.8" r="5.9"/><circle cx="1473.9" cy="592.8" r="5.9"/><circle cx="1491.6" cy="592.8" r="5.9"/><circle cx="1509.3" cy="592.8" r="5.9"/><circle cx="1527.0" cy="592.8" r="5.9"/><circle cx="1544.7" cy="592.8" r="5.9"/><circle cx="1562.4" cy="592.8" r="5.9"/><circle cx="1580.1" cy="592.8" r="5.9"/><circle cx="1592.1" cy="592.8" r="5.9"/><circle cx="1604.1" cy="592.8" r="5.9"/><circle cx="1621.8" cy="592.8" r="5.9"/><circle cx="1639.5" cy="592.8" r="5.9"/><circle cx="1657.2" cy="592.8" r="5.9"/><circle cx="1674.9" cy="592.8" r="5.9"/><circle cx="1692.6" cy="592.8" r="5.9"/><circle cx="1710.3" cy="592.8" r="5.9"/><circle cx="1728.0" cy="592.8" r="5.9"/><circle cx="1745.7" cy="592.8" r="5.9"/><circle cx="1444.8" cy="602.2" r="5.9"/><circle cx="1462.4" cy="602.2" r="5.9"/><circle cx="1480.1" cy="602.2" r="5.9"/><circle cx="1497.8" cy="602.2" r="5.9"/><circle cx="1515.5" cy="602.2" r="5.9"/><circle cx="1533.2" cy="602.2" r="5.9"/><circle cx="1550.9" cy="602.2" r="5.9"/><circle cx="1568.6" cy="602.2" r="5.9"/><circle cx="1586.3" cy="602.2" r="5.9"/><circle cx="1597.8" cy="602.2" r="5.9"/><circle cx="1615.5" cy="602.2" r="5.9"/><circle cx="1633.2" cy="602.2" r="5.9"/><circle cx="1650.9" cy="602.2" r="5.9"/><circle cx="1668.6" cy="602.2" r="5.9"/><circle cx="1686.3" cy="602.2" r="5.9"/><circle cx="1704.0" cy="602.2" r="5.9"/><circle cx="1721.8" cy="602.2" r="5.9"/><circle cx="1739.4" cy="602.2" r="5.9"/><circle cx="1427.0" cy="611.6" r="5.9"/><circle cx="1444.8" cy="611.6" r="5.9"/><circle cx="1462.4" cy="611.6" r="5.9"/><circle cx="1480.1" cy="611.6" r="5.9"/><circle cx="1497.8" cy="611.6" r="5.9"/><circle cx="1515.5" cy="611.6" r="5.9"/><circle cx="1533.2" cy="611.6" r="5.9"/><circle cx="1550.9" cy="611.6" r="5.9"/><circle cx="1568.6" cy="611.6" r="5.9"/><circle cx="1586.3" cy="611.6" r="5.9"/><circle cx="1597.8" cy="611.6" r="5.9"/><circle cx="1615.5" cy="611.6" r="5.9"/><circle cx="1633.2" cy="611.6" r="5.9"/><circle cx="1650.9" cy="611.6" r="5.9"/><circle cx="1668.6" cy="611.6" r="5.9"/><circle cx="1686.3" cy="611.6" r="5.9"/><circle cx="1704.0" cy="611.6" r="5.9"/><circle cx="1721.8" cy="611.6" r="5.9"/><circle cx="1739.4" cy="611.6" r="5.9"/><circle cx="1757.1" cy="611.6" r="5.9"/><circle cx="1432.8" cy="621.1" r="5.9"/><circle cx="1450.5" cy="621.1" r="5.9"/><circle cx="1468.2" cy="621.1" r="5.9"/><circle cx="1485.9" cy="621.1" r="5.9"/><circle cx="1503.6" cy="621.1" r="5.9"/><circle cx="1521.3" cy="621.1" r="5.9"/><circle cx="1539.0" cy="621.1" r="5.9"/><circle cx="1556.7" cy="621.1" r="5.9"/><circle cx="1574.4" cy="621.1" r="5.9"/><circle cx="1592.1" cy="621.1" r="5.9"/><circle cx="1609.8" cy="621.1" r="5.9"/><circle cx="1627.5" cy="621.1" r="5.9"/><circle cx="1645.2" cy="621.1" r="5.9"/><circle cx="1662.9" cy="621.1" r="5.9"/><circle cx="1680.6" cy="621.1" r="5.9"/><circle cx="1698.3" cy="621.1" r="5.9"/><circle cx="1716.0" cy="621.1" r="5.9"/><circle cx="1733.7" cy="621.1" r="5.9"/><circle cx="1751.4" cy="621.1" r="5.9"/><circle cx="1432.8" cy="630.5" r="5.9"/><circle cx="1450.5" cy="630.5" r="5.9"/><circle cx="1468.2" cy="630.5" r="5.9"/><circle cx="1485.9" cy="630.5" r="5.9"/><circle cx="1503.6" cy="630.5" r="5.9"/><circle cx="1521.3" cy="630.5" r="5.9"/><circle cx="1539.0" cy="630.5" r="5.9"/><circle cx="1556.7" cy="630.5" r="5.9"/><circle cx="1574.4" cy="630.5" r="5.9"/><circle cx="1592.1" cy="630.5" r="5.9"/><circle cx="1609.8" cy="630.5" r="5.9"/><circle cx="1627.5" cy="630.5" r="5.9"/><circle cx="1645.2" cy="630.5" r="5.9"/><circle cx="1662.9" cy="630.5" r="5.9"/><circle cx="1680.6" cy="630.5" r="5.9"/><circle cx="1698.3" cy="630.5" r="5.9"/><circle cx="1716.0" cy="630.5" r="5.9"/><circle cx="1733.7" cy="630.5" r="5.9"/><circle cx="1751.4" cy="630.5" r="5.9"/><circle cx="1420.8" cy="639.9" r="5.9"/><circle cx="1438.5" cy="639.9" r="5.9"/><circle cx="1456.2" cy="639.9" r="5.9"/><circle cx="1473.9" cy="639.9" r="5.9"/><circle cx="1491.6" cy="639.9" r="5.9"/><circle cx="1509.3" cy="639.9" r="5.9"/><circle cx="1527.0" cy="639.9" r="5.9"/><circle cx="1544.7" cy="639.9" r="5.9"/><circle cx="1562.4" cy="639.9" r="5.9"/><circle cx="1580.1" cy="639.9" r="5.9"/><circle cx="1592.1" cy="639.9" r="5.9"/><circle cx="1604.1" cy="639.9" r="5.9"/><circle cx="1621.8" cy="639.9" r="5.9"/><circle cx="1639.5" cy="639.9" r="5.9"/><circle cx="1657.2" cy="639.9" r="5.9"/><circle cx="1674.9" cy="639.9" r="5.9"/><circle cx="1692.6" cy="639.9" r="5.9"/><circle cx="1710.3" cy="639.9" r="5.9"/><circle cx="1728.0" cy="639.9" r="5.9"/><circle cx="1745.7" cy="639.9" r="5.9"/><circle cx="1763.4" cy="639.9" r="5.9"/><circle cx="1438.5" cy="649.4" r="5.9"/><circle cx="1456.2" cy="649.4" r="5.9"/><circle cx="1473.9" cy="649.4" r="5.9"/><circle cx="1491.6" cy="649.4" r="5.9"/><circle cx="1509.3" cy="649.4" r="5.9"/><circle cx="1527.0" cy="649.4" r="5.9"/><circle cx="1544.7" cy="649.4" r="5.9"/><circle cx="1562.4" cy="649.4" r="5.9"/><circle cx="1580.1" cy="649.4" r="5.9"/><circle cx="1592.1" cy="649.4" r="5.9"/><circle cx="1604.1" cy="649.4" r="5.9"/><circle cx="1621.8" cy="649.4" r="5.9"/><circle cx="1639.5" cy="649.4" r="5.9"/><circle cx="1657.2" cy="649.4" r="5.9"/><circle cx="1674.9" cy="649.4" r="5.9"/><circle cx="1692.6" cy="649.4" r="5.9"/><circle cx="1710.3" cy="649.4" r="5.9"/><circle cx="1728.0" cy="649.4" r="5.9"/><circle cx="1745.7" cy="649.4" r="5.9"/><circle cx="1427.0" cy="658.8" r="5.9"/><circle cx="1444.8" cy="658.8" r="5.9"/><circle cx="1462.4" cy="658.8" r="5.9"/><circle cx="1480.1" cy="658.8" r="5.9"/><circle cx="1497.8" cy="658.8" r="5.9"/><circle cx="1515.5" cy="658.8" r="5.9"/><circle cx="1533.2" cy="658.8" r="5.9"/><circle cx="1550.9" cy="658.8" r="5.9"/><circle cx="1568.6" cy="658.8" r="5.9"/><circle cx="1586.3" cy="658.8" r="5.9"/><circle cx="1597.8" cy="658.8" r="5.9"/><circle cx="1615.5" cy="658.8" r="5.9"/><circle cx="1633.2" cy="658.8" r="5.9"/><circle cx="1650.9" cy="658.8" r="5.9"/><circle cx="1668.6" cy="658.8" r="5.9"/><circle cx="1686.3" cy="658.8" r="5.9"/><circle cx="1704.0" cy="658.8" r="5.9"/><circle cx="1721.8" cy="658.8" r="5.9"/><circle cx="1739.4" cy="658.8" r="5.9"/><circle cx="1757.1" cy="658.8" r="5.9"/><circle cx="1444.8" cy="668.2" r="5.9"/><circle cx="1462.4" cy="668.2" r="5.9"/><circle cx="1480.1" cy="668.2" r="5.9"/><circle cx="1497.8" cy="668.2" r="5.9"/><circle cx="1515.5" cy="668.2" r="5.9"/><circle cx="1533.2" cy="668.2" r="5.9"/><circle cx="1550.9" cy="668.2" r="5.9"/><circle cx="1568.6" cy="668.2" r="5.9"/><circle cx="1586.3" cy="668.2" r="5.9"/><circle cx="1597.8" cy="668.2" r="5.9"/><circle cx="1615.5" cy="668.2" r="5.9"/><circle cx="1633.2" cy="668.2" r="5.9"/><circle cx="1650.9" cy="668.2" r="5.9"/><circle cx="1668.6" cy="668.2" r="5.9"/><circle cx="1686.3" cy="668.2" r="5.9"/><circle cx="1704.0" cy="668.2" r="5.9"/><circle cx="1721.8" cy="668.2" r="5.9"/><circle cx="1739.4" cy="668.2" r="5.9"/><circle cx="1432.8" cy="677.6" r="5.9"/><circle cx="1450.5" cy="677.6" r="5.9"/><circle cx="1468.2" cy="677.6" r="5.9"/><circle cx="1485.9" cy="677.6" r="5.9"/><circle cx="1503.6" cy="677.6" r="5.9"/><circle cx="1521.3" cy="677.6" r="5.9"/><circle cx="1539.0" cy="677.6" r="5.9"/><circle cx="1556.7" cy="677.6" r="5.9"/><circle cx="1574.4" cy="677.6" r="5.9"/><circle cx="1592.1" cy="677.6" r="5.9"/><circle cx="1609.8" cy="677.6" r="5.9"/><circle cx="1627.5" cy="677.6" r="5.9"/><circle cx="1645.2" cy="677.6" r="5.9"/><circle cx="1662.9" cy="677.6" r="5.9"/><circle cx="1680.6" cy="677.6" r="5.9"/><circle cx="1698.3" cy="677.6" r="5.9"/><circle cx="1716.0" cy="677.6" r="5.9"/><circle cx="1733.7" cy="677.6" r="5.9"/><circle cx="1751.4" cy="677.6" r="5.9"/><circle cx="1450.5" cy="687.1" r="5.9"/><circle cx="1468.2" cy="687.1" r="5.9"/><circle cx="1485.9" cy="687.1" r="5.9"/><circle cx="1503.6" cy="687.1" r="5.9"/><circle cx="1521.3" cy="687.1" r="5.9"/><circle cx="1539.0" cy="687.1" r="5.9"/><circle cx="1556.7" cy="687.1" r="5.9"/><circle cx="1574.4" cy="687.1" r="5.9"/><circle cx="1592.1" cy="687.1" r="5.9"/><circle cx="1609.8" cy="687.1" r="5.9"/><circle cx="1627.5" cy="687.1" r="5.9"/><circle cx="1645.2" cy="687.1" r="5.9"/><circle cx="1662.9" cy="687.1" r="5.9"/><circle cx="1680.6" cy="687.1" r="5.9"/><circle cx="1698.3" cy="687.1" r="5.9"/><circle cx="1716.0" cy="687.1" r="5.9"/><circle cx="1733.7" cy="687.1" r="5.9"/><circle cx="1438.5" cy="696.5" r="5.9"/><circle cx="1456.2" cy="696.5" r="5.9"/><circle cx="1473.9" cy="696.5" r="5.9"/><circle cx="1491.6" cy="696.5" r="5.9"/><circle cx="1509.3" cy="696.5" r="5.9"/><circle cx="1527.0" cy="696.5" r="5.9"/><circle cx="1544.7" cy="696.5" r="5.9"/><circle cx="1562.4" cy="696.5" r="5.9"/><circle cx="1580.1" cy="696.5" r="5.9"/><circle cx="1592.1" cy="696.5" r="5.9"/><circle cx="1604.1" cy="696.5" r="5.9"/><circle cx="1621.8" cy="696.5" r="5.9"/><circle cx="1639.5" cy="696.5" r="5.9"/><circle cx="1657.2" cy="696.5" r="5.9"/><circle cx="1674.9" cy="696.5" r="5.9"/><circle cx="1692.6" cy="696.5" r="5.9"/><circle cx="1710.3" cy="696.5" r="5.9"/><circle cx="1728.0" cy="696.5" r="5.9"/><circle cx="1745.7" cy="696.5" r="5.9"/><circle cx="1456.2" cy="705.9" r="5.9"/><circle cx="1473.9" cy="705.9" r="5.9"/><circle cx="1491.6" cy="705.9" r="5.9"/><circle cx="1509.3" cy="705.9" r="5.9"/><circle cx="1527.0" cy="705.9" r="5.9"/><circle cx="1544.7" cy="705.9" r="5.9"/><circle cx="1562.4" cy="705.9" r="5.9"/><circle cx="1580.1" cy="705.9" r="5.9"/><circle cx="1592.1" cy="705.9" r="5.9"/><circle cx="1604.1" cy="705.9" r="5.9"/><circle cx="1621.8" cy="705.9" r="5.9"/><circle cx="1639.5" cy="705.9" r="5.9"/><circle cx="1657.2" cy="705.9" r="5.9"/><circle cx="1674.9" cy="705.9" r="5.9"/><circle cx="1692.6" cy="705.9" r="5.9"/><circle cx="1710.3" cy="705.9" r="5.9"/><circle cx="1728.0" cy="705.9" r="5.9"/><circle cx="1444.8" cy="715.4" r="5.9"/><circle cx="1462.4" cy="715.4" r="5.9"/><circle cx="1480.1" cy="715.4" r="5.9"/><circle cx="1497.8" cy="715.4" r="5.9"/><circle cx="1515.5" cy="715.4" r="5.9"/><circle cx="1533.2" cy="715.4" r="5.9"/><circle cx="1550.9" cy="715.4" r="5.9"/><circle cx="1568.6" cy="715.4" r="5.9"/><circle cx="1586.3" cy="715.4" r="5.9"/><circle cx="1597.8" cy="715.4" r="5.9"/><circle cx="1615.5" cy="715.4" r="5.9"/><circle cx="1633.2" cy="715.4" r="5.9"/><circle cx="1650.9" cy="715.4" r="5.9"/><circle cx="1668.6" cy="715.4" r="5.9"/><circle cx="1686.3" cy="715.4" r="5.9"/><circle cx="1704.0" cy="715.4" r="5.9"/><circle cx="1721.8" cy="715.4" r="5.9"/><circle cx="1739.4" cy="715.4" r="5.9"/><circle cx="1462.4" cy="724.8" r="5.9"/><circle cx="1480.1" cy="724.8" r="5.9"/><circle cx="1497.8" cy="724.8" r="5.9"/><circle cx="1515.5" cy="724.8" r="5.9"/><circle cx="1533.2" cy="724.8" r="5.9"/><circle cx="1550.9" cy="724.8" r="5.9"/><circle cx="1568.6" cy="724.8" r="5.9"/><circle cx="1586.3" cy="724.8" r="5.9"/><circle cx="1597.8" cy="724.8" r="5.9"/><circle cx="1615.5" cy="724.8" r="5.9"/><circle cx="1633.2" cy="724.8" r="5.9"/><circle cx="1650.9" cy="724.8" r="5.9"/><circle cx="1668.6" cy="724.8" r="5.9"/><circle cx="1686.3" cy="724.8" r="5.9"/><circle cx="1704.0" cy="724.8" r="5.9"/><circle cx="1721.8" cy="724.8" r="5.9"/><circle cx="1450.5" cy="734.2" r="5.9"/><circle cx="1468.2" cy="734.2" r="5.9"/><circle cx="1485.9" cy="734.2" r="5.9"/><circle cx="1503.6" cy="734.2" r="5.9"/><circle cx="1521.3" cy="734.2" r="5.9"/><circle cx="1539.0" cy="734.2" r="5.9"/><circle cx="1556.7" cy="734.2" r="5.9"/><circle cx="1574.4" cy="734.2" r="5.9"/><circle cx="1592.1" cy="734.2" r="5.9"/><circle cx="1609.8" cy="734.2" r="5.9"/><circle cx="1627.5" cy="734.2" r="5.9"/><circle cx="1645.2" cy="734.2" r="5.9"/><circle cx="1662.9" cy="734.2" r="5.9"/><circle cx="1680.6" cy="734.2" r="5.9"/><circle cx="1698.3" cy="734.2" r="5.9"/><circle cx="1716.0" cy="734.2" r="5.9"/><circle cx="1733.7" cy="734.2" r="5.9"/><circle cx="1468.2" cy="743.7" r="5.9"/><circle cx="1485.9" cy="743.7" r="5.9"/><circle cx="1503.6" cy="743.7" r="5.9"/><circle cx="1521.3" cy="743.7" r="5.9"/><circle cx="1539.0" cy="743.7" r="5.9"/><circle cx="1556.7" cy="743.7" r="5.9"/><circle cx="1574.4" cy="743.7" r="5.9"/><circle cx="1592.1" cy="743.7" r="5.9"/><circle cx="1609.8" cy="743.7" r="5.9"/><circle cx="1627.5" cy="743.7" r="5.9"/><circle cx="1645.2" cy="743.7" r="5.9"/><circle cx="1662.9" cy="743.7" r="5.9"/><circle cx="1680.6" cy="743.7" r="5.9"/><circle cx="1698.3" cy="743.7" r="5.9"/><circle cx="1716.0" cy="743.7" r="5.9"/><circle cx="1456.2" cy="753.1" r="5.9"/><circle cx="1473.9" cy="753.1" r="5.9"/><circle cx="1491.6" cy="753.1" r="5.9"/><circle cx="1509.3" cy="753.1" r="5.9"/><circle cx="1527.0" cy="753.1" r="5.9"/><circle cx="1544.7" cy="753.1" r="5.9"/><circle cx="1562.4" cy="753.1" r="5.9"/><circle cx="1580.1" cy="753.1" r="5.9"/><circle cx="1592.1" cy="753.1" r="5.9"/><circle cx="1604.1" cy="753.1" r="5.9"/><circle cx="1621.8" cy="753.1" r="5.9"/><circle cx="1639.5" cy="753.1" r="5.9"/><circle cx="1657.2" cy="753.1" r="5.9"/><circle cx="1674.9" cy="753.1" r="5.9"/><circle cx="1692.6" cy="753.1" r="5.9"/><circle cx="1710.3" cy="753.1" r="5.9"/><circle cx="1728.0" cy="753.1" r="5.9"/><circle cx="1473.9" cy="762.5" r="5.9"/><circle cx="1491.6" cy="762.5" r="5.9"/><circle cx="1509.3" cy="762.5" r="5.9"/><circle cx="1527.0" cy="762.5" r="5.9"/><circle cx="1544.7" cy="762.5" r="5.9"/><circle cx="1562.4" cy="762.5" r="5.9"/><circle cx="1580.1" cy="762.5" r="5.9"/><circle cx="1592.1" cy="762.5" r="5.9"/><circle cx="1604.1" cy="762.5" r="5.9"/><circle cx="1621.8" cy="762.5" r="5.9"/><circle cx="1639.5" cy="762.5" r="5.9"/><circle cx="1657.2" cy="762.5" r="5.9"/><circle cx="1674.9" cy="762.5" r="5.9"/><circle cx="1692.6" cy="762.5" r="5.9"/><circle cx="1710.3" cy="762.5" r="5.9"/><circle cx="1462.4" cy="771.9" r="5.9"/><circle cx="1480.1" cy="771.9" r="5.9"/><circle cx="1497.8" cy="771.9" r="5.9"/><circle cx="1515.5" cy="771.9" r="5.9"/><circle cx="1533.2" cy="771.9" r="5.9"/><circle cx="1550.9" cy="771.9" r="5.9"/><circle cx="1568.6" cy="771.9" r="5.9"/><circle cx="1586.3" cy="771.9" r="5.9"/><circle cx="1597.8" cy="771.9" r="5.9"/><circle cx="1615.5" cy="771.9" r="5.9"/><circle cx="1633.2" cy="771.9" r="5.9"/><circle cx="1650.9" cy="771.9" r="5.9"/><circle cx="1668.6" cy="771.9" r="5.9"/><circle cx="1686.3" cy="771.9" r="5.9"/><circle cx="1704.0" cy="771.9" r="5.9"/><circle cx="1721.8" cy="771.9" r="5.9"/><circle cx="1480.1" cy="781.4" r="5.9"/><circle cx="1497.8" cy="781.4" r="5.9"/><circle cx="1515.5" cy="781.4" r="5.9"/><circle cx="1533.2" cy="781.4" r="5.9"/><circle cx="1550.9" cy="781.4" r="5.9"/><circle cx="1568.6" cy="781.4" r="5.9"/><circle cx="1586.3" cy="781.4" r="5.9"/><circle cx="1597.8" cy="781.4" r="5.9"/><circle cx="1615.5" cy="781.4" r="5.9"/><circle cx="1633.2" cy="781.4" r="5.9"/><circle cx="1650.9" cy="781.4" r="5.9"/><circle cx="1668.6" cy="781.4" r="5.9"/><circle cx="1686.3" cy="781.4" r="5.9"/><circle cx="1704.0" cy="781.4" r="5.9"/><circle cx="1468.2" cy="790.8" r="5.9"/><circle cx="1485.9" cy="790.8" r="5.9"/><circle cx="1503.6" cy="790.8" r="5.9"/><circle cx="1521.3" cy="790.8" r="5.9"/><circle cx="1539.0" cy="790.8" r="5.9"/><circle cx="1556.7" cy="790.8" r="5.9"/><circle cx="1574.4" cy="790.8" r="5.9"/><circle cx="1592.1" cy="790.8" r="5.9"/><circle cx="1609.8" cy="790.8" r="5.9"/><circle cx="1627.5" cy="790.8" r="5.9"/><circle cx="1645.2" cy="790.8" r="5.9"/><circle cx="1662.9" cy="790.8" r="5.9"/><circle cx="1680.6" cy="790.8" r="5.9"/><circle cx="1698.3" cy="790.8" r="5.9"/><circle cx="1716.0" cy="790.8" r="5.9"/><circle cx="1485.9" cy="800.2" r="5.9"/><circle cx="1503.6" cy="800.2" r="5.9"/><circle cx="1521.3" cy="800.2" r="5.9"/><circle cx="1539.0" cy="800.2" r="5.9"/><circle cx="1556.7" cy="800.2" r="5.9"/><circle cx="1574.4" cy="800.2" r="5.9"/><circle cx="1592.1" cy="800.2" r="5.9"/><circle cx="1609.8" cy="800.2" r="5.9"/><circle cx="1627.5" cy="800.2" r="5.9"/><circle cx="1645.2" cy="800.2" r="5.9"/><circle cx="1662.9" cy="800.2" r="5.9"/><circle cx="1680.6" cy="800.2" r="5.9"/><circle cx="1698.3" cy="800.2" r="5.9"/><circle cx="1473.9" cy="809.7" r="5.9"/><circle cx="1491.6" cy="809.7" r="5.9"/><circle cx="1509.3" cy="809.7" r="5.9"/><circle cx="1527.0" cy="809.7" r="5.9"/><circle cx="1544.7" cy="809.7" r="5.9"/><circle cx="1562.4" cy="809.7" r="5.9"/><circle cx="1580.1" cy="809.7" r="5.9"/><circle cx="1592.1" cy="809.7" r="5.9"/><circle cx="1604.1" cy="809.7" r="5.9"/><circle cx="1621.8" cy="809.7" r="5.9"/><circle cx="1639.5" cy="809.7" r="5.9"/><circle cx="1657.2" cy="809.7" r="5.9"/><circle cx="1674.9" cy="809.7" r="5.9"/><circle cx="1692.6" cy="809.7" r="5.9"/><circle cx="1710.3" cy="809.7" r="5.9"/><circle cx="1491.6" cy="819.1" r="5.9"/><circle cx="1509.3" cy="819.1" r="5.9"/><circle cx="1527.0" cy="819.1" r="5.9"/><circle cx="1544.7" cy="819.1" r="5.9"/><circle cx="1562.4" cy="819.1" r="5.9"/><circle cx="1580.1" cy="819.1" r="5.9"/><circle cx="1592.1" cy="819.1" r="5.9"/><circle cx="1604.1" cy="819.1" r="5.9"/><circle cx="1621.8" cy="819.1" r="5.9"/><circle cx="1639.5" cy="819.1" r="5.9"/><circle cx="1657.2" cy="819.1" r="5.9"/><circle cx="1674.9" cy="819.1" r="5.9"/><circle cx="1692.6" cy="819.1" r="5.9"/><circle cx="1480.1" cy="828.5" r="5.9"/><circle cx="1497.8" cy="828.5" r="5.9"/><circle cx="1515.5" cy="828.5" r="5.9"/><circle cx="1533.2" cy="828.5" r="5.9"/><circle cx="1550.9" cy="828.5" r="5.9"/><circle cx="1568.6" cy="828.5" r="5.9"/><circle cx="1586.3" cy="828.5" r="5.9"/><circle cx="1597.8" cy="828.5" r="5.9"/><circle cx="1615.5" cy="828.5" r="5.9"/><circle cx="1633.2" cy="828.5" r="5.9"/><circle cx="1650.9" cy="828.5" r="5.9"/><circle cx="1668.6" cy="828.5" r="5.9"/><circle cx="1686.3" cy="828.5" r="5.9"/><circle cx="1704.0" cy="828.5" r="5.9"/><circle cx="1497.8" cy="838.0" r="5.9"/><circle cx="1515.5" cy="838.0" r="5.9"/><circle cx="1533.2" cy="838.0" r="5.9"/><circle cx="1550.9" cy="838.0" r="5.9"/><circle cx="1568.6" cy="838.0" r="5.9"/><circle cx="1586.3" cy="838.0" r="5.9"/><circle cx="1597.8" cy="838.0" r="5.9"/><circle cx="1615.5" cy="838.0" r="5.9"/><circle cx="1633.2" cy="838.0" r="5.9"/><circle cx="1650.9" cy="838.0" r="5.9"/><circle cx="1668.6" cy="838.0" r="5.9"/><circle cx="1686.3" cy="838.0" r="5.9"/><circle cx="1485.9" cy="847.4" r="5.9"/><circle cx="1503.6" cy="847.4" r="5.9"/><circle cx="1521.3" cy="847.4" r="5.9"/><circle cx="1539.0" cy="847.4" r="5.9"/><circle cx="1556.7" cy="847.4" r="5.9"/><circle cx="1574.4" cy="847.4" r="5.9"/><circle cx="1592.1" cy="847.4" r="5.9"/><circle cx="1609.8" cy="847.4" r="5.9"/><circle cx="1627.5" cy="847.4" r="5.9"/><circle cx="1645.2" cy="847.4" r="5.9"/><circle cx="1662.9" cy="847.4" r="5.9"/><circle cx="1680.6" cy="847.4" r="5.9"/><circle cx="1698.3" cy="847.4" r="5.9"/><circle cx="1503.6" cy="856.8" r="5.9"/><circle cx="1521.3" cy="856.8" r="5.9"/><circle cx="1539.0" cy="856.8" r="5.9"/><circle cx="1556.7" cy="856.8" r="5.9"/><circle cx="1574.4" cy="856.8" r="5.9"/><circle cx="1592.1" cy="856.8" r="5.9"/><circle cx="1609.8" cy="856.8" r="5.9"/><circle cx="1627.5" cy="856.8" r="5.9"/><circle cx="1645.2" cy="856.8" r="5.9"/><circle cx="1662.9" cy="856.8" r="5.9"/><circle cx="1680.6" cy="856.8" r="5.9"/><circle cx="1491.6" cy="866.2" r="5.9"/><circle cx="1509.3" cy="866.2" r="5.9"/><circle cx="1527.0" cy="866.2" r="5.9"/><circle cx="1544.7" cy="866.2" r="5.9"/><circle cx="1562.4" cy="866.2" r="5.9"/><circle cx="1580.1" cy="866.2" r="5.9"/><circle cx="1592.1" cy="866.2" r="5.9"/><circle cx="1604.1" cy="866.2" r="5.9"/><circle cx="1621.8" cy="866.2" r="5.9"/><circle cx="1639.5" cy="866.2" r="5.9"/><circle cx="1657.2" cy="866.2" r="5.9"/><circle cx="1674.9" cy="866.2" r="5.9"/><circle cx="1692.6" cy="866.2" r="5.9"/><circle cx="1509.3" cy="875.7" r="5.9"/><circle cx="1527.0" cy="875.7" r="5.9"/><circle cx="1544.7" cy="875.7" r="5.9"/><circle cx="1562.4" cy="875.7" r="5.9"/><circle cx="1580.1" cy="875.7" r="5.9"/><circle cx="1592.1" cy="875.7" r="5.9"/><circle cx="1604.1" cy="875.7" r="5.9"/><circle cx="1621.8" cy="875.7" r="5.9"/><circle cx="1639.5" cy="875.7" r="5.9"/><circle cx="1657.2" cy="875.7" r="5.9"/><circle cx="1674.9" cy="875.7" r="5.9"/><circle cx="1497.8" cy="885.1" r="5.9"/><circle cx="1515.5" cy="885.1" r="5.9"/><circle cx="1533.2" cy="885.1" r="5.9"/><circle cx="1550.9" cy="885.1" r="5.9"/><circle cx="1568.6" cy="885.1" r="5.9"/><circle cx="1586.3" cy="885.1" r="5.9"/><circle cx="1597.8" cy="885.1" r="5.9"/><circle cx="1615.5" cy="885.1" r="5.9"/><circle cx="1633.2" cy="885.1" r="5.9"/><circle cx="1650.9" cy="885.1" r="5.9"/><circle cx="1668.6" cy="885.1" r="5.9"/><circle cx="1686.3" cy="885.1" r="5.9"/><circle cx="1515.5" cy="894.5" r="5.9"/><circle cx="1533.2" cy="894.5" r="5.9"/><circle cx="1550.9" cy="894.5" r="5.9"/><circle cx="1568.6" cy="894.5" r="5.9"/><circle cx="1586.3" cy="894.5" r="5.9"/><circle cx="1597.8" cy="894.5" r="5.9"/><circle cx="1615.5" cy="894.5" r="5.9"/><circle cx="1633.2" cy="894.5" r="5.9"/><circle cx="1650.9" cy="894.5" r="5.9"/><circle cx="1668.6" cy="894.5" r="5.9"/><circle cx="1503.6" cy="904.0" r="5.9"/><circle cx="1521.3" cy="904.0" r="5.9"/><circle cx="1539.0" cy="904.0" r="5.9"/><circle cx="1556.7" cy="904.0" r="5.9"/><circle cx="1574.4" cy="904.0" r="5.9"/><circle cx="1592.1" cy="904.0" r="5.9"/><circle cx="1609.8" cy="904.0" r="5.9"/><circle cx="1627.5" cy="904.0" r="5.9"/><circle cx="1645.2" cy="904.0" r="5.9"/><circle cx="1662.9" cy="904.0" r="5.9"/><circle cx="1680.6" cy="904.0" r="5.9"/><circle cx="1521.3" cy="913.4" r="5.9"/><circle cx="1539.0" cy="913.4" r="5.9"/><circle cx="1556.7" cy="913.4" r="5.9"/><circle cx="1574.4" cy="913.4" r="5.9"/><circle cx="1592.1" cy="913.4" r="5.9"/><circle cx="1609.8" cy="913.4" r="5.9"/><circle cx="1627.5" cy="913.4" r="5.9"/><circle cx="1645.2" cy="913.4" r="5.9"/><circle cx="1662.9" cy="913.4" r="5.9"/><circle cx="1509.3" cy="922.8" r="5.9"/><circle cx="1527.0" cy="922.8" r="5.9"/><circle cx="1544.7" cy="922.8" r="5.9"/><circle cx="1562.4" cy="922.8" r="5.9"/><circle cx="1580.1" cy="922.8" r="5.9"/><circle cx="1592.1" cy="922.8" r="5.9"/><circle cx="1604.1" cy="922.8" r="5.9"/><circle cx="1621.8" cy="922.8" r="5.9"/><circle cx="1639.5" cy="922.8" r="5.9"/><circle cx="1657.2" cy="922.8" r="5.9"/><circle cx="1674.9" cy="922.8" r="5.9"/><circle cx="1527.0" cy="932.3" r="5.9"/><circle cx="1544.7" cy="932.3" r="5.9"/><circle cx="1562.4" cy="932.3" r="5.9"/><circle cx="1580.1" cy="932.3" r="5.9"/><circle cx="1592.1" cy="932.3" r="5.9"/><circle cx="1604.1" cy="932.3" r="5.9"/><circle cx="1621.8" cy="932.3" r="5.9"/><circle cx="1639.5" cy="932.3" r="5.9"/><circle cx="1657.2" cy="932.3" r="5.9"/><circle cx="1515.5" cy="941.7" r="5.9"/><circle cx="1533.2" cy="941.7" r="5.9"/><circle cx="1550.9" cy="941.7" r="5.9"/><circle cx="1568.6" cy="941.7" r="5.9"/><circle cx="1586.3" cy="941.7" r="5.9"/><circle cx="1597.8" cy="941.7" r="5.9"/><circle cx="1615.5" cy="941.7" r="5.9"/><circle cx="1633.2" cy="941.7" r="5.9"/><circle cx="1650.9" cy="941.7" r="5.9"/><circle cx="1668.6" cy="941.7" r="5.9"/><circle cx="1533.2" cy="951.1" r="5.9"/><circle cx="1550.9" cy="951.1" r="5.9"/><circle cx="1568.6" cy="951.1" r="5.9"/><circle cx="1586.3" cy="951.1" r="5.9"/><circle cx="1597.8" cy="951.1" r="5.9"/><circle cx="1615.5" cy="951.1" r="5.9"/><circle cx="1633.2" cy="951.1" r="5.9"/><circle cx="1650.9" cy="951.1" r="5.9"/><circle cx="1521.3" cy="960.5" r="5.9"/><circle cx="1539.0" cy="960.5" r="5.9"/><circle cx="1556.7" cy="960.5" r="5.9"/><circle cx="1574.4" cy="960.5" r="5.9"/><circle cx="1592.1" cy="960.5" r="5.9"/><circle cx="1609.8" cy="960.5" r="5.9"/><circle cx="1627.5" cy="960.5" r="5.9"/><circle cx="1645.2" cy="960.5" r="5.9"/><circle cx="1662.9" cy="960.5" r="5.9"/><circle cx="1539.0" cy="970.0" r="5.9"/><circle cx="1556.7" cy="970.0" r="5.9"/><circle cx="1574.4" cy="970.0" r="5.9"/><circle cx="1592.1" cy="970.0" r="5.9"/><circle cx="1609.8" cy="970.0" r="5.9"/><circle cx="1627.5" cy="970.0" r="5.9"/><circle cx="1645.2" cy="970.0" r="5.9"/><circle cx="1527.0" cy="979.4" r="5.9"/><circle cx="1544.7" cy="979.4" r="5.9"/><circle cx="1562.4" cy="979.4" r="5.9"/><circle cx="1580.1" cy="979.4" r="5.9"/><circle cx="1592.1" cy="979.4" r="5.9"/><circle cx="1604.1" cy="979.4" r="5.9"/><circle cx="1621.8" cy="979.4" r="5.9"/><circle cx="1639.5" cy="979.4" r="5.9"/><circle cx="1657.2" cy="979.4" r="5.9"/><circle cx="1544.7" cy="988.8" r="5.9"/><circle cx="1562.4" cy="988.8" r="5.9"/><circle cx="1580.1" cy="988.8" r="5.9"/><circle cx="1592.1" cy="988.8" r="5.9"/><circle cx="1604.1" cy="988.8" r="5.9"/><circle cx="1621.8" cy="988.8" r="5.9"/><circle cx="1639.5" cy="988.8" r="5.9"/><circle cx="1533.2" cy="998.3" r="5.9"/><circle cx="1550.9" cy="998.3" r="5.9"/><circle cx="1568.6" cy="998.3" r="5.9"/><circle cx="1586.3" cy="998.3" r="5.9"/><circle cx="1597.8" cy="998.3" r="5.9"/><circle cx="1615.5" cy="998.3" r="5.9"/><circle cx="1633.2" cy="998.3" r="5.9"/><circle cx="1650.9" cy="998.3" r="5.9"/><circle cx="1550.9" cy="1007.7" r="5.9"/><circle cx="1568.6" cy="1007.7" r="5.9"/><circle cx="1586.3" cy="1007.7" r="5.9"/><circle cx="1597.8" cy="1007.7" r="5.9"/><circle cx="1615.5" cy="1007.7" r="5.9"/><circle cx="1633.2" cy="1007.7" r="5.9"/><circle cx="1539.0" cy="1017.1" r="5.9"/><circle cx="1556.7" cy="1017.1" r="5.9"/><circle cx="1574.4" cy="1017.1" r="5.9"/><circle cx="1592.1" cy="1017.1" r="5.9"/><circle cx="1609.8" cy="1017.1" r="5.9"/><circle cx="1627.5" cy="1017.1" r="5.9"/><circle cx="1645.2" cy="1017.1" r="5.9"/><circle cx="1556.7" cy="1026.6" r="5.9"/><circle cx="1574.4" cy="1026.6" r="5.9"/><circle cx="1592.1" cy="1026.6" r="5.9"/><circle cx="1609.8" cy="1026.6" r="5.9"/><circle cx="1627.5" cy="1026.6" r="5.9"/><circle cx="1544.7" cy="1036.0" r="5.9"/><circle cx="1562.4" cy="1036.0" r="5.9"/><circle cx="1580.1" cy="1036.0" r="5.9"/><circle cx="1592.1" cy="1036.0" r="5.9"/><circle cx="1604.1" cy="1036.0" r="5.9"/><circle cx="1621.8" cy="1036.0" r="5.9"/><circle cx="1639.5" cy="1036.0" r="5.9"/><circle cx="1562.4" cy="1045.4" r="5.9"/><circle cx="1580.1" cy="1045.4" r="5.9"/><circle cx="1592.1" cy="1045.4" r="5.9"/><circle cx="1604.1" cy="1045.4" r="5.9"/><circle cx="1621.8" cy="1045.4" r="5.9"/><circle cx="1550.9" cy="1054.8" r="5.9"/><circle cx="1568.6" cy="1054.8" r="5.9"/><circle cx="1586.3" cy="1054.8" r="5.9"/><circle cx="1597.8" cy="1054.8" r="5.9"/><circle cx="1615.5" cy="1054.8" r="5.9"/><circle cx="1633.2" cy="1054.8" r="5.9"/><circle cx="1568.6" cy="1064.3" r="5.9"/><circle cx="1586.3" cy="1064.3" r="5.9"/><circle cx="1597.8" cy="1064.3" r="5.9"/><circle cx="1615.5" cy="1064.3" r="5.9"/><circle cx="1556.7" cy="1073.7" r="5.9"/><circle cx="1574.4" cy="1073.7" r="5.9"/><circle cx="1592.1" cy="1073.7" r="5.9"/><circle cx="1609.8" cy="1073.7" r="5.9"/><circle cx="1627.5" cy="1073.7" r="5.9"/><circle cx="1574.4" cy="1083.1" r="5.9"/><circle cx="1592.1" cy="1083.1" r="5.9"/><circle cx="1609.8" cy="1083.1" r="5.9"/><circle cx="1562.4" cy="1092.6" r="5.9"/><circle cx="1580.1" cy="1092.6" r="5.9"/><circle cx="1592.1" cy="1092.6" r="5.9"/><circle cx="1604.1" cy="1092.6" r="5.9"/><circle cx="1621.8" cy="1092.6" r="5.9"/><circle cx="1580.1" cy="1102.0" r="5.9"/><circle cx="1592.1" cy="1102.0" r="5.9"/><circle cx="1604.1" cy="1102.0" r="5.9"/><circle cx="1568.6" cy="1111.4" r="5.9"/><circle cx="1586.3" cy="1111.4" r="5.9"/><circle cx="1597.8" cy="1111.4" r="5.9"/><circle cx="1615.5" cy="1111.4" r="5.9"/></g></g></svg>
</body></html>
